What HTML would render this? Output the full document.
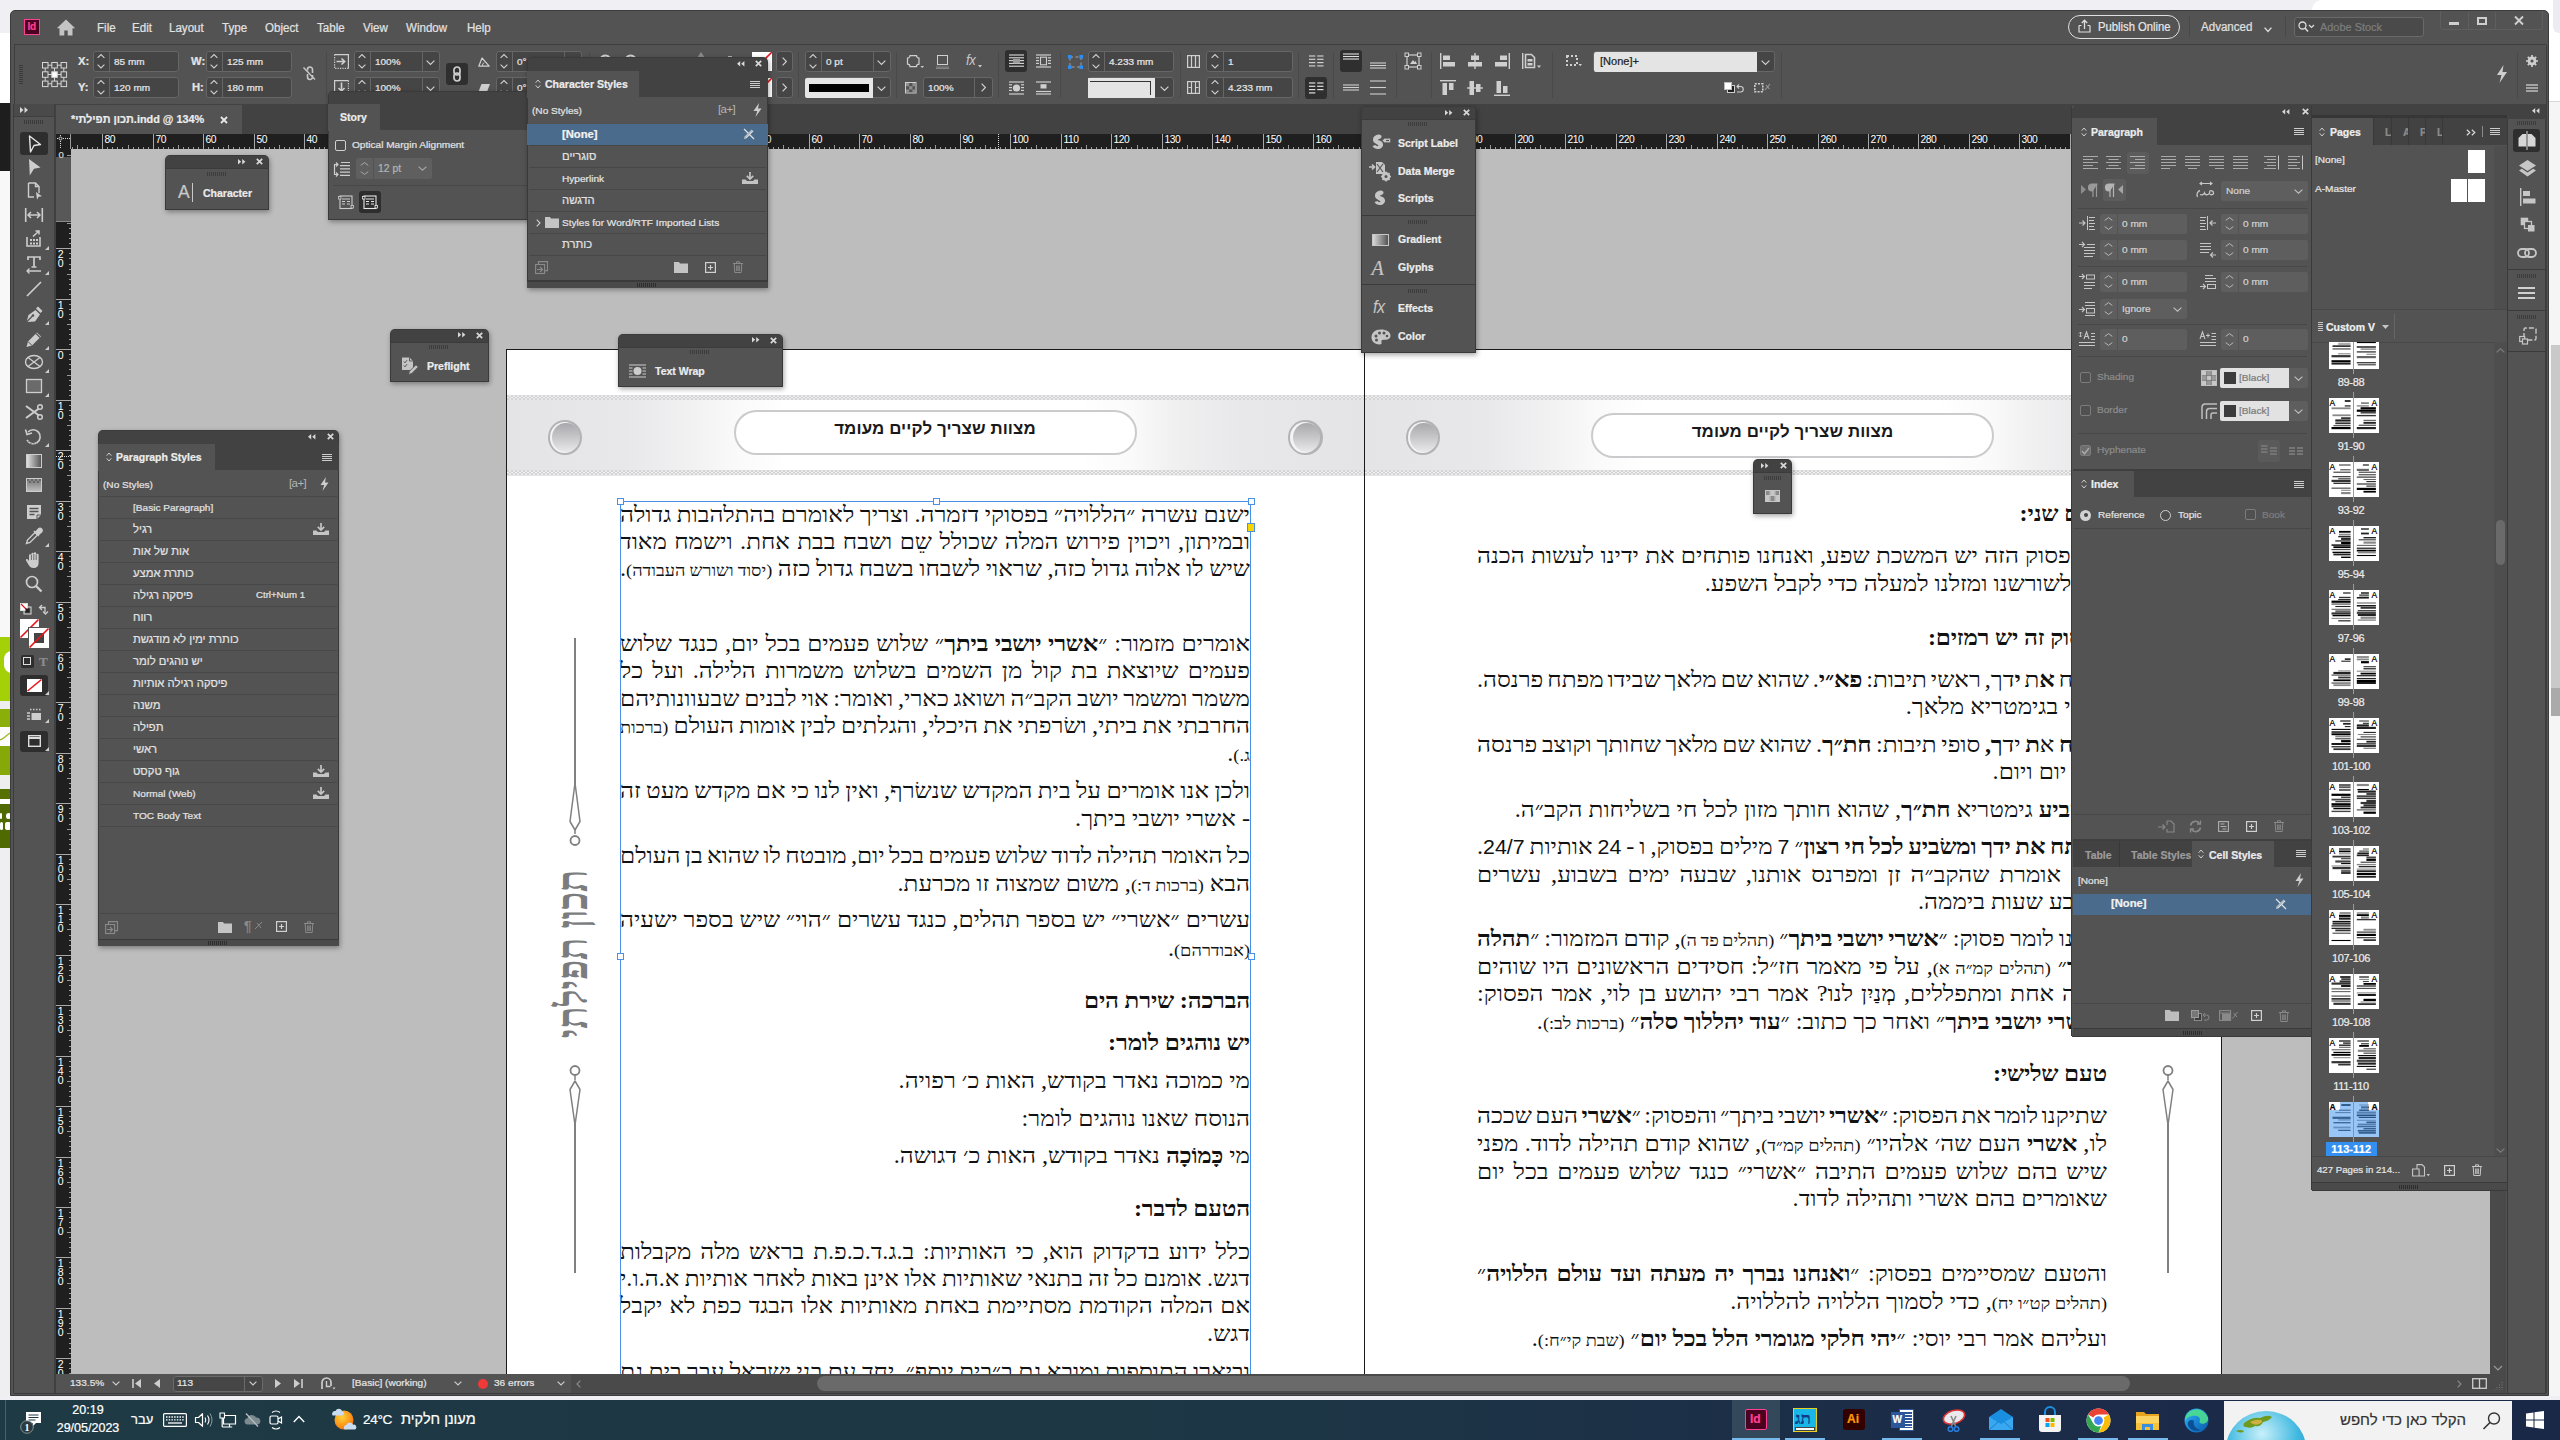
<!DOCTYPE html>
<html><head><meta charset="utf-8"><title>InDesign</title>
<style>
*{box-sizing:border-box;margin:0;padding:0}
html,body{width:2560px;height:1440px;overflow:hidden;background:#f0f0f4;font-family:"Liberation Sans",sans-serif;font-size:12px;color:#dddddd}
.a{position:absolute}
.t{position:absolute;white-space:nowrap;line-height:1;-webkit-text-stroke:.22px currentColor}
.b{font-weight:bold}
svg{position:absolute;overflow:visible}
.fld{position:absolute;background:#454545;border:1px solid #666;border-radius:3px}
.fldl{position:absolute;background:#e3e3e3;border:1px solid #666;border-radius:2px}
.pn{position:absolute;background:#535353}
.pnbar{position:absolute;background:#424242}
.sep{position:absolute;background:#484848;height:1px}
.row{position:absolute;left:0;right:0;height:22px;border-top:1px solid #4a4a4a}
.heb{direction:rtl;unicode-bidi:isolate}
.doc{position:absolute;white-space:nowrap;direction:rtl;color:#111;font-family:"Liberation Serif",serif;line-height:1}
.j{text-align:justify;text-align-last:justify}
.sm{font-size:75%}
.doc b{letter-spacing:-.2px}
.dg{font-family:"Liberation Sans",sans-serif;font-size:88%}
</style></head><body>
<!-- p01_backdrop.py -->
<div class="a" style="left:0;top:33px;width:12px;height:70px;background:#fff"></div>
<div class="a" style="left:0;top:103px;width:12px;height:68px;background:#1e1e1e"></div>
<div class="a" style="left:0;top:171px;width:12px;height:466px;background:#f8f8f8"></div>
<div class="a" style="left:0;top:637px;width:12px;height:64px;background:#a4d007"></div>
<div class="a" style="left:0;top:701px;width:12px;height:7.5px;background:#eeeeee"></div>
<div class="a" style="left:0;top:708.5px;width:12px;height:18px;background:#8aaf08"></div>
<div class="a" style="left:0;top:726.5px;width:12px;height:19.5px;background:#fdfdfd"></div>
<div class="a" style="left:0;top:746px;width:12px;height:29px;background:#86a808"></div>
<div class="a" style="left:0;top:775px;width:12px;height:14px;background:#eeeeee"></div>
<div class="a" style="left:0;top:789px;width:12px;height:10px;background:#567004"></div>
<div class="a" style="left:0;top:799px;width:12px;height:5px;background:#ffffff"></div>
<div class="a" style="left:0;top:804px;width:12px;height:44px;background:#4e6a00"></div>
<div class="a" style="left:0;top:848px;width:12px;height:548px;background:#efeff1"></div>
<div class="a" style="left:3.500px;top:651px;width:12px;height:22px;background:#fff;border-radius:8px 0 0 8px"></div>
<svg style="left:0;top:730px" width="10" height="14" viewBox="0 0 10 14"><path d="M0 10q3-1 5-3t5-4" fill="none" stroke="#9ab820" stroke-width="1.200"/></svg>
<div class="a" style="left:0;top:813px;width:2px;height:6px;background:#fff;border-radius:2px"></div><div class="a" style="left:6px;top:813px;width:5px;height:6px;background:#fff;border-radius:3px"></div>
<div class="a" style="left:0;top:822px;width:3px;height:8px;background:#fff;border-radius:2px"></div><div class="a" style="left:5px;top:822px;width:6px;height:8px;background:#fff;border-radius:2px"></div>
<div class="a" style="left:2312px;top:0;width:248px;height:1396px;background:#fff;border-radius:10px 0 0 0"></div>
<div class="a" style="left:2553px;top:-10px;width:20px;height:43px;background:#ebebf1;border-radius:6px"></div>
<div class="a" style="left:2549px;top:101px;width:11px;height:1295px;background:#f5f5f6;border-top:1px solid #d8d8d8"></div>
<div class="a" style="left:2551px;top:345px;width:9px;height:370px;background:#c9c9c9"></div>
<div class="a" style="left:2551px;top:688px;width:9px;height:28px;background:#aaa"></div>
<div class="a" style="left:0;top:1400px;width:2560px;height:40px;background:linear-gradient(90deg,#1e3a44 0%,#1d3645 50%,#1b2c48 75%,#1a2848 100%)"></div>
<div class="a" style="left:5px;top:1400px;width:1px;height:40px;background:#4a6068"></div>
<div class="t" style="left:48px;top:1404px;width:80px;text-align:center;font-size:12.5px;color:#fff">20:19</div>
<div class="t" style="left:48px;top:1422px;width:80px;text-align:center;font-size:12.5px;color:#fff">29/05/2023</div>
<div class="t" style="left:131px;top:1413px;font-size:13px;color:#fff;direction:rtl">עבר</div>
<svg style="left:24px;top:1410px" width="20" height="26" viewBox="0 0 20 26"><path d="M2 2h15v11h-5l-3 3v-3H2z" fill="#fff"/><path d="M4.5 5h10M4.5 7.5h10M4.5 10h7" stroke="#1e3a44" stroke-width="1"/><circle cx="3" cy="17" r="6.3" fill="#2a3a40" stroke="#9aa" stroke-width="0.8"/><text x="3" y="21" font-size="10" font-family="Liberation Serif" font-weight="bold" text-anchor="middle" fill="#fff">1</text></svg>
<svg style="left:163px;top:1413px" width="24" height="14" viewBox="0 0 24 14"><rect x=".6" y=".6" width="22.8" height="12.8" rx="1" fill="none" stroke="#fff" stroke-width="1.2"/><path d="M3 4h18M3 6.8h18" stroke="#fff" stroke-width="1.3" stroke-dasharray="1.5 1.2"/><path d="M5 10h14" stroke="#fff" stroke-width="1.3"/></svg>
<svg style="left:194px;top:1411px" width="20" height="18" viewBox="0 0 20 18"><path d="M1.5 6.5h3l4-3.8v12.6l-4-3.8h-3z" fill="none" stroke="#fff" stroke-width="1.2" stroke-linejoin="round"/><path d="M11 6.5q1.6 2.5 0 5M13.5 4.5q3 4.5 0 9" fill="none" stroke="#fff" stroke-width="1.1"/><path d="M16 2.5q4 6.5 0 13" fill="none" stroke="#8a9aa0" stroke-width="1"/></svg>
<svg style="left:219px;top:1412px" width="18" height="17" viewBox="0 0 18 17"><path d="M4.5 3.5h12v8.5h-12z" fill="none" stroke="#fff" stroke-width="1.2"/><path d="M1 1h4.5v5H1z" fill="#1e3a44" stroke="#fff" stroke-width="1.1"/><path d="M3.2 6v9M3.2 15h10M10.5 12v3" stroke="#fff" stroke-width="1.2" fill="none"/></svg>
<svg style="left:243px;top:1412px" width="18" height="16" viewBox="0 0 18 16"><path d="M4 12.5a3.2 3.2 0 0 1 .4-6.3 4.6 4.6 0 0 1 8.6-.6 3.5 3.5 0 0 1 1.6 6.9z" fill="#7d8a8f"/><path d="M3 1.5l12 13" stroke="#b8c2c6" stroke-width="1.3"/></svg>
<svg style="left:269px;top:1408px" width="14" height="24" viewBox="0 0 14 24"><rect x="1" y="8" width="8" height="8" rx="1.5" fill="none" stroke="#fff" stroke-width="1.2"/><path d="M9 11l3.5-2v6L9 13" fill="none" stroke="#fff" stroke-width="1.2"/><path d="M3 4.5q4-3 8 0M3 19.5q4 3 8 0" fill="none" stroke="#fff" stroke-width="1.1"/></svg>
<svg style="left:293px;top:1415px" width="12" height="8" viewBox="0 0 12 8"><path d="M.8 7l5.2-5.5L11.2 7" fill="none" stroke="#fff" stroke-width="1.4"/></svg>
<svg style="left:331px;top:1407px" width="26" height="26" viewBox="0 0 26 26"><defs><radialGradient id="sun" cx=".4" cy=".35" r=".7"><stop offset="0" stop-color="#ffd23a"/><stop offset=".6" stop-color="#fb9a1c"/><stop offset="1" stop-color="#f07010"/></radialGradient></defs><circle cx="13" cy="13" r="9.5" fill="url(#sun)"/><path d="M1.5 8.5a3 3 0 0 1 3-4.5 3.6 3.6 0 0 1 6.6 0 2.4 2.4 0 0 1 .4 4.5z" fill="#c9dcf2"/><path d="M13.5 22.500a3 3 0 0 1 2-4.800 3.600 3.600 0 0 1 6.600 0 2.400 2.400 0 0 1 1.400 4.800z" fill="#c9dcf2"/></svg>
<div class="t" style="left:363px;top:1412.5px;font-size:13.5px;color:#fff;letter-spacing:-.3px">24°C</div>
<div class="t" style="left:401px;top:1412px;font-size:14.5px;color:#fff;direction:rtl">מעונן חלקית</div>
<div class="a" style="left:1732px;top:1400px;width:48px;height:40px;background:#33485a"></div>
<div class="a" style="left:1732px;top:1438px;width:48px;height:2px;background:#76b9ed"></div>
<div class="a" style="left:1785px;top:1438px;width:40px;height:2px;background:#76b9ed"></div>
<div class="a" style="left:1882px;top:1438px;width:40px;height:2px;background:#76b9ed"></div>
<div class="a" style="left:1980px;top:1438px;width:40px;height:2px;background:#76b9ed"></div>
<div class="a" style="left:2078px;top:1438px;width:40px;height:2px;background:#76b9ed"></div>
<div class="a" style="left:2128px;top:1438px;width:40px;height:2px;background:#76b9ed"></div>
<div class="a" style="left:1745px;top:1409px;width:22px;height:21px;background:#49021f;border:1.5px solid #ff3f94;border-radius:2px"></div><div class="t b" style="left:1750px;top:1413px;font-size:12px;color:#ff3f94">Id</div>
<div class="a" style="left:1793px;top:1408px;width:24px;height:24px;background:#19b6e8;border:1px solid #e8d020"></div><div class="t b" style="left:1795px;top:1410px;font-size:17px;color:#123a8a;font-family:'Liberation Serif'">תג</div><div class="a" style="left:1795px;top:1427px;width:20px;height:4px;background:#fff;border:1px solid #444"></div>
<div class="a" style="left:1843px;top:1409px;width:22px;height:21px;background:#330000;border-radius:3px"></div><div class="t b" style="left:1847px;top:1413px;font-size:12px;color:#ff9a00">Ai</div>
<div class="a" style="left:1899px;top:1409px;width:15px;height:22px;background:#fff;border:1px solid #2b579a"></div><div class="a" style="left:1903px;top:1412px;width:9px;height:16px;background:repeating-linear-gradient(180deg,#2b579a 0 1.5px,#fff 1.5px 3px)"></div><div class="a" style="left:1891px;top:1412px;width:14px;height:16px;background:#2b579a"></div><div class="t b" style="left:1892.500px;top:1415px;font-size:10px;color:#fff">W</div>
<svg style="left:1939px;top:1408px" width="28" height="26" viewBox="0 0 28 26"><ellipse cx="15" cy="9" rx="11" ry="6.5" fill="#e9e9ee" stroke="#d33" stroke-width="1.6" transform="rotate(-18 15 9)"/><path d="M12 8l5 11M17 8l-5 11" stroke="#888" stroke-width="1.6"/><circle cx="11.500" cy="21" r="2.300" fill="none" stroke="#2a7ad8" stroke-width="1.600"/><circle cx="17.500" cy="21" r="2.300" fill="none" stroke="#2a7ad8" stroke-width="1.600"/></svg>
<svg style="left:1988px;top:1408px" width="26" height="24" viewBox="0 0 26 24"><path d="M1 9L13 1l12 8v13H1z" fill="#1a8fe0"/><path d="M1 9l12 7 12-7v13H1z" fill="#39a8f0"/><path d="M1 22l9-8M25 22l-9-8" stroke="#1a7fd0" stroke-width="1"/></svg>
<svg style="left:2037px;top:1406px" width="26" height="28" viewBox="0 0 26 28"><path d="M8 9V6a5 5 0 0 1 10 0v3" fill="none" stroke="#1a8fe0" stroke-width="2"/><path d="M2 9h22v14a3 3 0 0 1-3 3H5a3 3 0 0 1-3-3z" fill="#f4f4f4"/><rect x="8.500" y="12" width="4" height="4" fill="#f25022"/><rect x="13.500" y="12" width="4" height="4" fill="#7fba00"/><rect x="8.500" y="17" width="4" height="4" fill="#00a4ef"/><rect x="13.500" y="17" width="4" height="4" fill="#ffb900"/></svg>
<svg style="left:2086px;top:1408px" width="25" height="25" viewBox="0 0 24 24"><circle cx="12" cy="12" r="11.500" fill="#fff"/><path d="M12 .5a11.500 11.500 0 0 1 9.960 5.750H12a5.750 5.750 0 0 0-5 2.900L2.040 6.250A11.500 11.500 0 0 1 12 .5z" fill="#ea4335"/><path d="M21.960 6.250A11.500 11.500 0 0 1 12 23.500l4.980-8.630a5.750 5.750 0 0 0 0-5.740z" fill="#fbbc05"/><path d="M12 23.500A11.500 11.500 0 0 1 2.040 6.250l4.980 8.620a5.750 5.750 0 0 0 4.980 2.880l2.500-.5z" fill="#34a853"/><circle cx="12" cy="12" r="5.200" fill="#fff"/><circle cx="12" cy="12" r="4.200" fill="#4285f4"/></svg>
<svg style="left:2135px;top:1409px" width="25" height="23" viewBox="0 0 25 23"><path d="M1 3h8l2 2h13v4H1z" fill="#e8a51e"/><path d="M1 7h23v14H1z" fill="#fcd462"/><path d="M1 14h23v7H1z" fill="#f6c13a"/><path d="M7 15h11v6h-3v-3H10v3H7z" fill="#3b8ede"/></svg>
<svg style="left:2184px;top:1408px" width="25" height="25" viewBox="0 0 24 24"><defs><linearGradient id="eg" x1="0" y1="0" x2="1" y2="1"><stop offset="0" stop-color="#35c1f1"/><stop offset=".5" stop-color="#1a86d8"/><stop offset="1" stop-color="#0c59a4"/></linearGradient></defs><circle cx="12" cy="12" r="11.500" fill="url(#eg)"/><path d="M1 10a11.500 11.500 0 0 1 22-1c.8 4-2 6-5.500 6-2.500 0-3-1.500-2.500-2.500.8-1.500 0-5-4.500-5C6 7.500 2.500 9 1 13z" fill="#4fe08a" opacity=".85"/><path d="M9.500 12c-1 4 1.500 8.500 6.500 9-5 2.500-11.500-.5-12.500-6 .5-3 3-4.500 6-3z" fill="#0b4f94"/></svg>
<div class="a" style="left:2224px;top:1401px;width:288px;height:39px;background:#f2f2f2"></div>
<svg style="left:2226px;top:1401px" width="80" height="39" viewBox="0 0 80 39"><defs><radialGradient id="gl" cx=".45" cy=".3" r=".9"><stop offset="0" stop-color="#c8f0fa"/><stop offset=".5" stop-color="#3fb8e0"/><stop offset="1" stop-color="#1478b8"/></radialGradient><clipPath id="gc"><rect x="0" y="0" width="80" height="39"/></clipPath></defs><g clip-path="url(#gc)"><ellipse cx="40" cy="48" rx="40" ry="38" fill="url(#gl)"/><path d="M18 22q8-6 16-5 8-4 12-1-3 4-9 5-2 5-8 4-4 3-9 1-4 0-2-4z" fill="#6f9a20"/><path d="M24 21q6-3 11-2 3 2-2 4-5 2-9-2z" fill="#d0b040"/><path d="M10 30q4-2 8 0-2 3-8 0z" fill="#6f9a20"/></g></svg>
<div class="t" style="left:2340px;top:1412px;font-size:15px;color:#333;direction:rtl">הקלד כאן כדי לחפש</div>
<svg style="left:2482px;top:1411px" width="20" height="20" viewBox="0 0 20 20"><circle cx="12" cy="7.500" r="5.500" fill="none" stroke="#333" stroke-width="1.400"/><path d="M8 11.500L1.500 18" stroke="#333" stroke-width="1.600"/></svg>
<svg style="left:2526px;top:1411px" width="18" height="18" viewBox="0 0 18 18"><path d="M0 2.500l7.500-1v7H0zM8.500 1.300L18 0v8.500H8.500zM0 9.500h7.500v7l-7.500-1zM8.500 9.500H18V18l-9.500-1.300z" fill="#fff"/></svg>
<!-- p02_app.py -->
<div class="a" style="left:10px;top:10px;width:2539px;height:1386px;background:#535353;border-radius:5px 5px 0 0;border:1px solid #3c3c3c"></div>
<div class="a" style="left:24px;top:19px;width:16px;height:16px;background:#49021f;border:1.5px solid #ff3f94"></div>
<div class="t" style="left:27.5px;top:22px;font-size:10px;color:#ff3f94;font-weight:bold;letter-spacing:-.3px">Id</div>
<svg style="left:56px;top:19px" width="20" height="17" viewBox="0 0 20 17"><path d="M10 .5L.8 9.200h2.700v7.300h4.800v-5h3.400v5h4.800V9.200h2.700z" fill="#c4c4c4"/></svg>
<div class="t" style="left:97px;top:21.5px;font-size:12.5px;color:#e2e2e2;transform:scaleX(0.925);transform-origin:0 0;">File</div>
<div class="t" style="left:132px;top:21.5px;font-size:12.5px;color:#e2e2e2;transform:scaleX(0.925);transform-origin:0 0;">Edit</div>
<div class="t" style="left:169px;top:21.5px;font-size:12.5px;color:#e2e2e2;transform:scaleX(0.925);transform-origin:0 0;">Layout</div>
<div class="t" style="left:222px;top:21.5px;font-size:12.5px;color:#e2e2e2;transform:scaleX(0.925);transform-origin:0 0;">Type</div>
<div class="t" style="left:265px;top:21.5px;font-size:12.5px;color:#e2e2e2;transform:scaleX(0.925);transform-origin:0 0;">Object</div>
<div class="t" style="left:317px;top:21.5px;font-size:12.5px;color:#e2e2e2;transform:scaleX(0.925);transform-origin:0 0;">Table</div>
<div class="t" style="left:362.5px;top:21.5px;font-size:12.5px;color:#e2e2e2;transform:scaleX(0.925);transform-origin:0 0;">View</div>
<div class="t" style="left:406px;top:21.5px;font-size:12.5px;color:#e2e2e2;transform:scaleX(0.925);transform-origin:0 0;">Window</div>
<div class="t" style="left:467px;top:21.5px;font-size:12.5px;color:#e2e2e2;transform:scaleX(0.925);transform-origin:0 0;">Help</div>
<div class="a" style="left:2068px;top:15px;width:112px;height:24px;border:1.3px solid #e0e0e0;border-radius:12px"></div>
<svg style="left:2078px;top:19px" width="13" height="14" viewBox="0 0 13 14"><path d="M1 6.500v6.500h11V6.500M1 6.500h2.500M12 6.500H9.500" fill="none" stroke="#ddd" stroke-width="1.200"/><path d="M6.500 10V1.500M3.800 4l2.700-2.800L9.200 4" fill="none" stroke="#ddd" stroke-width="1.300"/></svg>
<div class="t" style="left:2098px;top:21px;font-size:12.5px;color:#e6e6e6;transform:scaleX(0.9);transform-origin:0 0;">Publish Online</div>
<div class="a" style="left:2189px;top:17px;width:1px;height:20px;background:#484848"></div>
<div class="t" style="left:2201px;top:20.5px;font-size:12.5px;color:#e0e0e0;transform:scaleX(0.925);transform-origin:0 0;">Advanced</div>
<svg style="left:2263.5px;top:26.5px" width="8" height="5" viewBox="0 0 8 5"><path d="M.6 .6L4 4.4L7.4 .6" fill="none" stroke="#ddd" stroke-width="1.4"/></svg>
<div class="a" style="left:2285px;top:17px;width:1px;height:20px;background:#484848"></div>
<div class="fld" style="left:2294px;top:17px;width:130px;height:20px;background:#4a4a4a;border-color:#696969"></div>
<svg style="left:2298px;top:21px" width="18" height="12" viewBox="0 0 18 12"><circle cx="4.500" cy="4.500" r="3.500" fill="none" stroke="#ddd" stroke-width="1.300"/><path d="M7 7l3 3.500" stroke="#ddd" stroke-width="1.500"/><path d="M11 4l2.500 2.500L16 4" fill="none" stroke="#ddd" stroke-width="1.200"/></svg>
<div class="t" style="left:2320px;top:21.5px;font-size:11.5px;color:#7e7e7e;transform:scaleX(0.95);transform-origin:0 0;">Adobe Stock</div>
<div class="a" style="left:2440px;top:11px;width:103px;height:19px;border:1px solid #5e5e5e;border-top:none;border-radius:0 0 3px 3px"></div>
<div class="a" style="left:2468px;top:12px;width:1px;height:17px;background:#5e5e5e"></div>
<div class="a" style="left:2495px;top:12px;width:1px;height:17px;background:#5e5e5e"></div>
<div class="a" style="left:2449px;top:22px;width:10px;height:3px;background:#cfcfcf"></div>
<div class="a" style="left:2477px;top:17px;width:10px;height:8px;border:2px solid #cfcfcf"></div>
<svg style="left:2514px;top:16px" width="10" height="9" viewBox="0 0 10 9"><path d="M1 .500l8 8M9 .500l-8 8" stroke="#cfcfcf" stroke-width="1.900"/></svg>
<div class="a" style="left:14px;top:44px;width:2532px;height:1px;background:#3d3d3d"></div>
<div class="a" style="left:14px;top:45px;width:1px;height:59px;background:#3d3d3d"></div>
<div class="a" style="left:2545.500px;top:45px;width:1px;height:1348px;background:#3d3d3d"></div>
<div class="a" style="left:14px;top:104px;width:2532px;height:30px;background:#424242"></div>
<!-- p03_control.py -->
<div class="a" style="left:19px;top:65px;width:4px;height:20px;background:repeating-linear-gradient(180deg,#3a3a3a 0 1px,transparent 1px 2px)"></div>
<svg style="left:42px;top:62px" width="25" height="25" viewBox="0 0 25 25"><rect x="0.5" y="0.5" width="5.500" height="5.500" fill="none" stroke="#d6d6d6" stroke-width="1"/><rect x="0.5" y="9.8" width="5.500" height="5.500" fill="none" stroke="#d6d6d6" stroke-width="1"/><rect x="0.5" y="19.1" width="5.500" height="5.500" fill="none" stroke="#d6d6d6" stroke-width="1"/><rect x="9.8" y="0.5" width="5.500" height="5.500" fill="none" stroke="#d6d6d6" stroke-width="1"/><rect x="9.8" y="9.8" width="5.500" height="5.500" fill="#fff" stroke="#d6d6d6" stroke-width="1"/><rect x="9.8" y="19.1" width="5.500" height="5.500" fill="none" stroke="#d6d6d6" stroke-width="1"/><rect x="19.1" y="0.5" width="5.500" height="5.500" fill="none" stroke="#d6d6d6" stroke-width="1"/><rect x="19.1" y="9.8" width="5.500" height="5.500" fill="none" stroke="#d6d6d6" stroke-width="1"/><rect x="19.1" y="19.1" width="5.500" height="5.500" fill="none" stroke="#d6d6d6" stroke-width="1"/><path d="M6 3.200h3.800M15.300 3.200h3.800M6 21.800h3.800M15.300 21.800h3.800M3.200 6v3.800M3.200 15.300v3.800M21.800 6v3.800M21.800 15.300v3.800M6 12.500h3.800M15.300 12.500h3.800M12.500 6v3.800M12.500 15.300v3.800" stroke="#d6d6d6" stroke-width="1"/></svg>
<div class="t" style="left:78px;top:57.1px;font-size:10.3px;color:#e4e4e4;transform:scaleX(1.09);transform-origin:0 0;font-weight:bold">X:</div>
<div class="t" style="left:78px;top:83.1px;font-size:10.3px;color:#e4e4e4;transform:scaleX(1.09);transform-origin:0 0;font-weight:bold">Y:</div>
<div class="fld" style="left:92.5px;top:51px;width:86px;height:21px;background:#454545;border-color:#666"></div><div class="a" style="left:109px;top:52px;width:1px;height:19px;background:#666"></div><svg style="left:97.25px;top:54.25px" width="8" height="4.5" viewBox="0 0 8 4.5"><path d="M.6 3.9L4 .6L7.4 3.9" fill="none" stroke="#d0d0d0" stroke-width="1.1"/></svg><svg style="left:97.25px;top:64.25px" width="8" height="4.5" viewBox="0 0 8 4.5"><path d="M.6 .6L4 3.9L7.4 .6" fill="none" stroke="#d0d0d0" stroke-width="1.1"/></svg><div class="t" style="left:114px;top:57.14px;font-size:9.71px;color:#e6e6e6;transform:scaleX(1.03);transform-origin:0 0;">85 mm</div>
<div class="fld" style="left:92.5px;top:77px;width:86px;height:21px;background:#454545;border-color:#666"></div><div class="a" style="left:109px;top:78px;width:1px;height:19px;background:#666"></div><svg style="left:97.25px;top:80.25px" width="8" height="4.5" viewBox="0 0 8 4.5"><path d="M.6 3.9L4 .6L7.4 3.9" fill="none" stroke="#d0d0d0" stroke-width="1.1"/></svg><svg style="left:97.25px;top:90.25px" width="8" height="4.5" viewBox="0 0 8 4.5"><path d="M.6 .6L4 3.9L7.4 .6" fill="none" stroke="#d0d0d0" stroke-width="1.1"/></svg><div class="t" style="left:114px;top:83.14px;font-size:9.71px;color:#e6e6e6;transform:scaleX(1.03);transform-origin:0 0;">120 mm</div>
<div class="t" style="left:190.5px;top:57.1px;font-size:10.3px;color:#e4e4e4;transform:scaleX(1.09);transform-origin:0 0;font-weight:bold">W:</div>
<div class="t" style="left:192px;top:83.1px;font-size:10.3px;color:#e4e4e4;transform:scaleX(1.09);transform-origin:0 0;font-weight:bold">H:</div>
<div class="fld" style="left:205.5px;top:51px;width:86px;height:21px;background:#454545;border-color:#666"></div><div class="a" style="left:222px;top:52px;width:1px;height:19px;background:#666"></div><svg style="left:210.25px;top:54.25px" width="8" height="4.5" viewBox="0 0 8 4.5"><path d="M.6 3.9L4 .6L7.4 3.9" fill="none" stroke="#d0d0d0" stroke-width="1.1"/></svg><svg style="left:210.25px;top:64.25px" width="8" height="4.5" viewBox="0 0 8 4.5"><path d="M.6 .6L4 3.9L7.4 .6" fill="none" stroke="#d0d0d0" stroke-width="1.1"/></svg><div class="t" style="left:227px;top:57.14px;font-size:9.71px;color:#e6e6e6;transform:scaleX(1.03);transform-origin:0 0;">125 mm</div>
<div class="fld" style="left:205.5px;top:77px;width:86px;height:21px;background:#454545;border-color:#666"></div><div class="a" style="left:222px;top:78px;width:1px;height:19px;background:#666"></div><svg style="left:210.25px;top:80.25px" width="8" height="4.5" viewBox="0 0 8 4.5"><path d="M.6 3.9L4 .6L7.4 3.9" fill="none" stroke="#d0d0d0" stroke-width="1.1"/></svg><svg style="left:210.25px;top:90.25px" width="8" height="4.5" viewBox="0 0 8 4.5"><path d="M.6 .6L4 3.9L7.4 .6" fill="none" stroke="#d0d0d0" stroke-width="1.1"/></svg><div class="t" style="left:227px;top:83.14px;font-size:9.71px;color:#e6e6e6;transform:scaleX(1.03);transform-origin:0 0;">180 mm</div>
<svg style="left:302px;top:65px" width="14" height="17" viewBox="0 0 14 17"><path d="M5.500 5.500v-1a2.500 2.500 0 0 1 5 0v3.500M10.500 10v2a2.500 2.500 0 0 1-5 0V9" fill="none" stroke="#c8c8c8" stroke-width="1.600"/><path d="M1.500 2.500L13 14.500" stroke="#c8c8c8" stroke-width="1.400"/></svg>
<div class="a" style="left:326px;top:52px;width:1px;height:46px;background:#494949"></div>
<svg style="left:333.5px;top:54px" width="15" height="15" viewBox="0 0 15 15"><path d="M.6 .6h13.800v13.800" fill="none" stroke="#d0d0d0" stroke-width="1.200"/><path d="M.6 .6v13.800h13.800" fill="none" stroke="#d0d0d0" stroke-width="1.200" stroke-dasharray="1.200 1.200"/><path d="M2.500 7.500h8M7.500 4.500l3.200 3-3.200 3" fill="none" stroke="#d0d0d0" stroke-width="1.600"/></svg>
<svg style="left:333.5px;top:80px" width="15" height="15" viewBox="0 0 15 15"><path d="M.6 14.400V.6h13.800" fill="none" stroke="#d0d0d0" stroke-width="1.200"/><path d="M14.400 .6v13.800H.6" fill="none" stroke="#d0d0d0" stroke-width="1.200" stroke-dasharray="1.200 1.200"/><path d="M7.500 2.500v9M4.500 8l3 3.200 3-3.200" fill="none" stroke="#d0d0d0" stroke-width="1.600"/></svg>
<div class="fld" style="left:353.5px;top:51px;width:86px;height:21px;background:#454545;border-color:#666"></div><div class="a" style="left:370px;top:52px;width:1px;height:19px;background:#666"></div><svg style="left:358.25px;top:54.25px" width="8" height="4.5" viewBox="0 0 8 4.5"><path d="M.6 3.9L4 .6L7.4 3.9" fill="none" stroke="#d0d0d0" stroke-width="1.1"/></svg><svg style="left:358.25px;top:64.25px" width="8" height="4.5" viewBox="0 0 8 4.5"><path d="M.6 .6L4 3.9L7.4 .6" fill="none" stroke="#d0d0d0" stroke-width="1.1"/></svg><div class="a" style="left:421.5px;top:52px;width:1px;height:19px;background:#666"></div><svg style="left:426px;top:59.5px" width="9" height="5" viewBox="0 0 9 5"><path d="M.6 .6L4.5 4.4L8.4 .6" fill="none" stroke="#d0d0d0" stroke-width="1.2"/></svg><div class="t" style="left:375px;top:57.14px;font-size:9.71px;color:#e6e6e6;transform:scaleX(1.03);transform-origin:0 0;">100%</div>
<div class="fld" style="left:353.5px;top:77px;width:86px;height:21px;background:#454545;border-color:#666"></div><div class="a" style="left:370px;top:78px;width:1px;height:19px;background:#666"></div><svg style="left:358.25px;top:80.25px" width="8" height="4.5" viewBox="0 0 8 4.5"><path d="M.6 3.9L4 .6L7.4 3.9" fill="none" stroke="#d0d0d0" stroke-width="1.1"/></svg><svg style="left:358.25px;top:90.25px" width="8" height="4.5" viewBox="0 0 8 4.5"><path d="M.6 .6L4 3.9L7.4 .6" fill="none" stroke="#d0d0d0" stroke-width="1.1"/></svg><div class="a" style="left:421.5px;top:78px;width:1px;height:19px;background:#666"></div><svg style="left:426px;top:85.5px" width="9" height="5" viewBox="0 0 9 5"><path d="M.6 .6L4.5 4.4L8.4 .6" fill="none" stroke="#d0d0d0" stroke-width="1.2"/></svg><div class="t" style="left:375px;top:83.14px;font-size:9.71px;color:#e6e6e6;transform:scaleX(1.03);transform-origin:0 0;">100%</div>
<div class="a" style="left:446px;top:63px;width:22px;height:22px;background:#2f2f2f;border-radius:3px"></div>
<svg style="left:452px;top:66px" width="10" height="16" viewBox="0 0 10 16"><rect x="2" y="1" width="6" height="8" rx="3" fill="none" stroke="#cfcfcf" stroke-width="1.700"/><rect x="2" y="7" width="6" height="8" rx="3" fill="none" stroke="#cfcfcf" stroke-width="1.700"/></svg>
<svg style="left:478px;top:56.5px" width="12" height="10" viewBox="0 0 12 10"><path d="M.8 9.200h10.400L8 1z" fill="none" stroke="#cfcfcf" stroke-width="1.200" stroke-linejoin="round" transform="scale(-1,1) translate(-12,0)"/><path d="M4.500 9a4 4 0 0 1 1.500-3.500" fill="none" stroke="#cfcfcf" stroke-width="1"/></svg>
<svg style="left:478px;top:84px" width="12" height="9" viewBox="0 0 12 9"><path d="M3.500 0H12L8.500 9H0z" fill="#cfcfcf"/></svg>
<div class="fld" style="left:495.5px;top:51px;width:86px;height:21px;background:#454545;border-color:#666"></div><div class="a" style="left:512px;top:52px;width:1px;height:19px;background:#666"></div><svg style="left:500.25px;top:54.25px" width="8" height="4.5" viewBox="0 0 8 4.5"><path d="M.6 3.9L4 .6L7.4 3.9" fill="none" stroke="#d0d0d0" stroke-width="1.1"/></svg><svg style="left:500.25px;top:64.25px" width="8" height="4.5" viewBox="0 0 8 4.5"><path d="M.6 .6L4 3.9L7.4 .6" fill="none" stroke="#d0d0d0" stroke-width="1.1"/></svg><div class="a" style="left:563.5px;top:52px;width:1px;height:19px;background:#666"></div><svg style="left:568px;top:59.5px" width="9" height="5" viewBox="0 0 9 5"><path d="M.6 .6L4.5 4.4L8.4 .6" fill="none" stroke="#d0d0d0" stroke-width="1.2"/></svg><div class="t" style="left:517px;top:57.14px;font-size:9.71px;color:#e6e6e6;transform:scaleX(1.03);transform-origin:0 0;">0°</div>
<div class="fld" style="left:495.5px;top:77px;width:86px;height:21px;background:#454545;border-color:#666"></div><div class="a" style="left:512px;top:78px;width:1px;height:19px;background:#666"></div><svg style="left:500.25px;top:80.25px" width="8" height="4.5" viewBox="0 0 8 4.5"><path d="M.6 3.9L4 .6L7.4 3.9" fill="none" stroke="#d0d0d0" stroke-width="1.1"/></svg><svg style="left:500.25px;top:90.25px" width="8" height="4.5" viewBox="0 0 8 4.5"><path d="M.6 .6L4 3.9L7.4 .6" fill="none" stroke="#d0d0d0" stroke-width="1.1"/></svg><div class="a" style="left:563.5px;top:78px;width:1px;height:19px;background:#666"></div><svg style="left:568px;top:85.5px" width="9" height="5" viewBox="0 0 9 5"><path d="M.6 .6L4.5 4.4L8.4 .6" fill="none" stroke="#d0d0d0" stroke-width="1.2"/></svg><div class="t" style="left:517px;top:83.14px;font-size:9.71px;color:#e6e6e6;transform:scaleX(1.03);transform-origin:0 0;">0°</div>
<div class="a" style="left:589px;top:52px;width:1px;height:46px;background:#494949"></div>
<svg style="left:598px;top:53px" width="14" height="14" viewBox="0 0 14 14"><path d="M2 9a5.500 5.500 0 1 1 3 4" fill="none" stroke="#cfcfcf" stroke-width="2"/></svg>
<svg style="left:624px;top:53px" width="14" height="14" viewBox="0 0 14 14"><path d="M12 9a5.500 5.500 0 1 0-3 4" fill="none" stroke="#cfcfcf" stroke-width="2"/></svg>
<svg style="left:696px;top:52px" width="10" height="8" viewBox="0 0 10 8"><path d="M5 0l4 6H1z" fill="#8a8a8a"/></svg>
<svg style="left:728px;top:55px" width="4" height="4" viewBox="0 0 4 4"><path d="M0 2h4" stroke="#ccc" stroke-width="1.500"/></svg>
<div class="a" style="left:752px;top:52px;width:20px;height:19px;background:#fff"></div>
<svg style="left:752px;top:52px" width="20" height="19" viewBox="0 0 20 19"><path d="M20 0L1 19" stroke="#e8141c" stroke-width="1.600"/></svg>
<div class="a" style="left:752px;top:78px;width:20px;height:19px;background:#fff"></div>
<svg style="left:752px;top:78px" width="20" height="19" viewBox="0 0 20 19"><path d="M20 0L1 19" stroke="#e8141c" stroke-width="1.600"/></svg>
<div class="fld" style="left:776px;top:51px;width:17px;height:21px;background:#454545;border-color:#666"></div>
<svg style="left:782px;top:57px" width="5" height="9" viewBox="0 0 5 9"><path d="M.6 .6L4.4 4.5L.6 8.4" fill="none" stroke="#d0d0d0" stroke-width="1.2"/></svg>
<div class="fld" style="left:776px;top:77px;width:17px;height:21px;background:#454545;border-color:#666"></div>
<svg style="left:782px;top:83px" width="5" height="9" viewBox="0 0 5 9"><path d="M.6 .6L4.4 4.5L.6 8.4" fill="none" stroke="#d0d0d0" stroke-width="1.2"/></svg>
<div class="a" style="left:798px;top:52px;width:1px;height:46px;background:#494949"></div>
<div class="fld" style="left:804.5px;top:51px;width:86px;height:21px;background:#454545;border-color:#666"></div><div class="a" style="left:821px;top:52px;width:1px;height:19px;background:#666"></div><svg style="left:809.25px;top:54.25px" width="8" height="4.5" viewBox="0 0 8 4.5"><path d="M.6 3.9L4 .6L7.4 3.9" fill="none" stroke="#d0d0d0" stroke-width="1.1"/></svg><svg style="left:809.25px;top:64.25px" width="8" height="4.5" viewBox="0 0 8 4.5"><path d="M.6 .6L4 3.9L7.4 .6" fill="none" stroke="#d0d0d0" stroke-width="1.1"/></svg><div class="a" style="left:872.5px;top:52px;width:1px;height:19px;background:#666"></div><svg style="left:877px;top:59.5px" width="9" height="5" viewBox="0 0 9 5"><path d="M.6 .6L4.5 4.4L8.4 .6" fill="none" stroke="#d0d0d0" stroke-width="1.2"/></svg><div class="t" style="left:826px;top:57.14px;font-size:9.71px;color:#e6e6e6;transform:scaleX(1.03);transform-origin:0 0;">0 pt</div>
<div class="fld" style="left:804.500px;top:77px;width:86px;height:21px"></div>
<div class="a" style="left:805px;top:77.5px;width:67.500px;height:20px;background:#e6e6e6;border-radius:2px 0 0 2px"></div>
<div class="a" style="left:809px;top:84px;width:60px;height:8px;background:#000"></div>
<svg style="left:877px;top:85.5px" width="9" height="5" viewBox="0 0 9 5"><path d="M.6 .6L4.5 4.4L8.4 .6" fill="none" stroke="#d0d0d0" stroke-width="1.2"/></svg>
<div class="a" style="left:896px;top:52px;width:1px;height:46px;background:#494949"></div>
<svg style="left:907px;top:55px" width="17" height="14" viewBox="0 0 17 14"><path d="M3 .6h6.500a2.500 2.500 0 0 0 2.500 2.500v6a2.500 2.500 0 0 0-2.500 2.500H3a2.500 2.500 0 0 0-2.500-2.500v-6A2.500 2.500 0 0 0 3 .6z" fill="none" stroke="#cfcfcf" stroke-width="1.200"/><path d="M13.500 11h3.500l-1.750 2z" fill="#cfcfcf"/></svg>
<div class="a" style="left:935.500px;top:55px;width:13px;height:14px;background:linear-gradient(180deg,#535353 0 70%,#8a8a8a 100%)"></div><div class="a" style="left:937px;top:55px;width:11px;height:10px;border:1.400px solid #cfcfcf;background:#535353"></div>
<div class="t" style="left:966px;top:52.5px;font-size:14.5px;color:#c8c8c8;transform:scaleX(0.9);transform-origin:0 0;font-style:italic;letter-spacing:-.3px;-webkit-text-stroke:0">fx</div>
<svg style="left:977.5px;top:65px" width="4" height="3" viewBox="0 0 4 3"><path d="M0 0h4L2 2.500z" fill="#cfcfcf"/></svg>
<svg style="left:905px;top:82px" width="11.5" height="11.5" viewBox="0 0 11.5 11.5"><rect x=".5" y=".5" width="10.500" height="10.500" fill="none" stroke="#cfcfcf"/><path d="M1 1h3.200v3.200H1zM7.400 1h3.200v3.200H7.400zM4.200 4.200h3.200v3.200H4.200zM1 7.400h3.200v3.200H1zM7.400 7.400h3.200v3.200H7.400z" fill="#8e8e8e"/></svg>
<div class="fld" style="left:923px;top:77px;width:69.5px;height:21px;background:#454545;border-color:#666"></div><div class="t" style="left:928px;top:83.14px;font-size:9.71px;color:#e6e6e6;transform:scaleX(1.03);transform-origin:0 0;">100%</div>
<div class="a" style="left:974px;top:78px;width:1px;height:19px;background:#666"></div>
<svg style="left:981px;top:83px" width="5" height="9" viewBox="0 0 5 9"><path d="M.6 .6L4.4 4.5L.6 8.4" fill="none" stroke="#d0d0d0" stroke-width="1.2"/></svg>
<div class="a" style="left:998px;top:52px;width:1px;height:46px;background:#494949"></div>
<div class="a" style="left:1005px;top:50px;width:22px;height:22px;background:#2f2f2f;border-radius:3px"></div>
<svg style="left:1008.5px;top:54px" width="15" height="14" viewBox="0 0 15 14"><path d="M0 1H15" stroke="#dcdcdc" stroke-width="1.1"/><path d="M0 3.8H15" stroke="#dcdcdc" stroke-width="1.1"/><path d="M0 6.6H15" stroke="#dcdcdc" stroke-width="1.1"/><path d="M0 9.4H15" stroke="#dcdcdc" stroke-width="1.1"/><path d="M0 12.2H15" stroke="#dcdcdc" stroke-width="1.1"/><rect x="4" y="4.800" width="7" height="4.600" fill="#9a9a9a"/></svg>
<svg style="left:1035.5px;top:54px" width="15" height="14" viewBox="0 0 15 14"><path d="M0 1H15" stroke="#cfcfcf" stroke-width="1.2"/><path d="M0 13H15" stroke="#cfcfcf" stroke-width="1.2"/><path d="M0 3.8H3" stroke="#cfcfcf" stroke-width="1.2"/><path d="M0 6.6H3" stroke="#cfcfcf" stroke-width="1.2"/><path d="M0 9.4H3" stroke="#cfcfcf" stroke-width="1.2"/><path d="M12 3.8H15" stroke="#cfcfcf" stroke-width="1.2"/><path d="M12 6.6H15" stroke="#cfcfcf" stroke-width="1.2"/><path d="M12 9.4H15" stroke="#cfcfcf" stroke-width="1.2"/><rect x="4.500" y="3.200" width="6" height="7.600" fill="none" stroke="#cfcfcf" stroke-width="1.100"/></svg>
<svg style="left:1008.5px;top:80.5px" width="15" height="14" viewBox="0 0 15 14"><path d="M0 1H15" stroke="#cfcfcf" stroke-width="1.2"/><path d="M0 13H15" stroke="#cfcfcf" stroke-width="1.2"/><path d="M0 3.8H3" stroke="#cfcfcf" stroke-width="1.2"/><path d="M0 6.6H3" stroke="#cfcfcf" stroke-width="1.2"/><path d="M0 9.4H3" stroke="#cfcfcf" stroke-width="1.2"/><path d="M12 3.8H15" stroke="#cfcfcf" stroke-width="1.2"/><path d="M12 6.6H15" stroke="#cfcfcf" stroke-width="1.2"/><path d="M12 9.4H15" stroke="#cfcfcf" stroke-width="1.2"/><circle cx="7.500" cy="7" r="3.600" fill="#cfcfcf"/></svg>
<svg style="left:1035.5px;top:80.5px" width="15" height="14" viewBox="0 0 15 14"><path d="M0 1H15" stroke="#cfcfcf" stroke-width="1.2"/><path d="M0 10.5H15" stroke="#cfcfcf" stroke-width="1.2"/><path d="M0 13H15" stroke="#cfcfcf" stroke-width="1.2"/><rect x="4.500" y="3.200" width="6" height="4.300" fill="#cfcfcf"/></svg>
<div class="a" style="left:1060px;top:52px;width:1px;height:46px;background:#494949"></div>
<svg style="left:1067.5px;top:54.5px" width="15" height="14" viewBox="0 0 15 14"><path d="M2 2h11v10H2z" fill="none" stroke="#8a8a8a" stroke-width="1.400" stroke-dasharray="3 2.500"/><rect x="0" y="0" width="3.600" height="3.600" fill="#2c8ff0"/><rect x="11.400" y="0" width="3.600" height="3.600" fill="#2c8ff0"/><rect x="0" y="10.400" width="3.600" height="3.600" fill="#2c8ff0"/><rect x="11.400" y="10.400" width="3.600" height="3.600" fill="#2c8ff0"/></svg>
<div class="fld" style="left:1087.5px;top:51px;width:86px;height:21px;background:#454545;border-color:#666"></div><div class="a" style="left:1104px;top:52px;width:1px;height:19px;background:#666"></div><svg style="left:1092.25px;top:54.25px" width="8" height="4.5" viewBox="0 0 8 4.5"><path d="M.6 3.9L4 .6L7.4 3.9" fill="none" stroke="#d0d0d0" stroke-width="1.1"/></svg><svg style="left:1092.25px;top:64.25px" width="8" height="4.5" viewBox="0 0 8 4.5"><path d="M.6 .6L4 3.9L7.4 .6" fill="none" stroke="#d0d0d0" stroke-width="1.1"/></svg><div class="t" style="left:1109px;top:57.14px;font-size:9.71px;color:#e6e6e6;transform:scaleX(1.03);transform-origin:0 0;">4.233 mm</div>
<div class="fld" style="left:1087.500px;top:77px;width:86px;height:21px"></div>
<div class="a" style="left:1088px;top:77.5px;width:67px;height:20px;background:#e4e4e4"></div>
<div class="a" style="left:1090px;top:80.500px;width:61px;height:14px;border-top:1.500px solid #333;border-right:1.500px solid #333"></div>
<svg style="left:1160px;top:85.5px" width="9" height="5" viewBox="0 0 9 5"><path d="M.6 .6L4.5 4.4L8.4 .6" fill="none" stroke="#d0d0d0" stroke-width="1.2"/></svg>
<div class="a" style="left:1179.5px;top:52px;width:1px;height:46px;background:#494949"></div>
<svg style="left:1187px;top:55px" width="13" height="13" viewBox="0 0 13 13"><rect x=".6" y=".6" width="11.800" height="11.800" fill="none" stroke="#cfcfcf" stroke-width="1.200"/><path d="M4.500 .6v11.800M8.500 .6v11.800" stroke="#cfcfcf" stroke-width="1.200"/></svg>
<svg style="left:1187px;top:81px" width="13" height="13" viewBox="0 0 13 13"><rect x=".6" y=".6" width="11.800" height="11.800" fill="none" stroke="#cfcfcf" stroke-width="1.200"/><path d="M4.500 .6v11.800M8.500 .6v11.800M1.500 6.500h2.500M9 6.500h2.500" stroke="#cfcfcf" stroke-width="1.100"/></svg>
<div class="fld" style="left:1206px;top:51px;width:86.5px;height:21px;background:#454545;border-color:#666"></div><div class="a" style="left:1222.5px;top:52px;width:1px;height:19px;background:#666"></div><svg style="left:1210.75px;top:54.25px" width="8" height="4.5" viewBox="0 0 8 4.5"><path d="M.6 3.9L4 .6L7.4 3.9" fill="none" stroke="#d0d0d0" stroke-width="1.1"/></svg><svg style="left:1210.75px;top:64.25px" width="8" height="4.5" viewBox="0 0 8 4.5"><path d="M.6 .6L4 3.9L7.4 .6" fill="none" stroke="#d0d0d0" stroke-width="1.1"/></svg><div class="t" style="left:1227.5px;top:57.14px;font-size:9.71px;color:#e6e6e6;transform:scaleX(1.03);transform-origin:0 0;">1</div>
<div class="fld" style="left:1206px;top:77px;width:86.5px;height:21px;background:#454545;border-color:#666"></div><div class="a" style="left:1222.5px;top:78px;width:1px;height:19px;background:#666"></div><svg style="left:1210.75px;top:80.25px" width="8" height="4.5" viewBox="0 0 8 4.5"><path d="M.6 3.9L4 .6L7.4 3.9" fill="none" stroke="#d0d0d0" stroke-width="1.1"/></svg><svg style="left:1210.75px;top:90.25px" width="8" height="4.5" viewBox="0 0 8 4.5"><path d="M.6 .6L4 3.9L7.4 .6" fill="none" stroke="#d0d0d0" stroke-width="1.1"/></svg><div class="t" style="left:1227.5px;top:83.14px;font-size:9.71px;color:#e6e6e6;transform:scaleX(1.03);transform-origin:0 0;">4.233 mm</div>
<div class="a" style="left:1298px;top:52px;width:1px;height:46px;background:#494949"></div>
<svg style="left:1308.5px;top:55px" width="14.5" height="12" viewBox="0 0 14.5 12"><path d="M0 1H6.3" stroke="#cfcfcf" stroke-width="1.2"/><path d="M0 4.3H6.3" stroke="#cfcfcf" stroke-width="1.2"/><path d="M0 7.6H6.3" stroke="#cfcfcf" stroke-width="1.2"/><path d="M0 10.9H6.3" stroke="#cfcfcf" stroke-width="1.2"/><path d="M8.2 1H14.5" stroke="#cfcfcf" stroke-width="1.2"/><path d="M8.2 4.3H14.5" stroke="#cfcfcf" stroke-width="1.2"/><path d="M8.2 7.6H14.5" stroke="#cfcfcf" stroke-width="1.2"/><path d="M8.2 10.9H14.5" stroke="#cfcfcf" stroke-width="1.2"/></svg>
<div class="a" style="left:1305px;top:77px;width:22px;height:22px;background:#2f2f2f;border-radius:3px"></div>
<svg style="left:1308.5px;top:82px" width="14.5" height="12" viewBox="0 0 14.5 12"><path d="M0 1H6.3" stroke="#e0e0e0" stroke-width="1.2"/><path d="M0 4.3H6.3" stroke="#e0e0e0" stroke-width="1.2"/><path d="M0 7.6H6.3" stroke="#e0e0e0" stroke-width="1.2"/><path d="M0 10.9H6.3" stroke="#e0e0e0" stroke-width="1.2"/><path d="M8.2 1H14.5" stroke="#e0e0e0" stroke-width="1.2"/><path d="M8.2 4.3H14.5" stroke="#e0e0e0" stroke-width="1.2"/><path d="M8.2 7.6H14.5" stroke="#e0e0e0" stroke-width="1.2"/></svg>
<div class="a" style="left:1333px;top:52px;width:1px;height:46px;background:#494949"></div>
<div class="a" style="left:1340px;top:50px;width:22px;height:22px;background:#2f2f2f;border-radius:3px"></div>
<svg style="left:1343px;top:53px" width="16" height="8" viewBox="0 0 16 8"><path d="M0 1H16" stroke="#e0e0e0" stroke-width="1.1"/><path d="M0 3.5H16" stroke="#e0e0e0" stroke-width="1.1"/><path d="M0 6H16" stroke="#e0e0e0" stroke-width="1.1"/></svg>
<svg style="left:1370px;top:62px" width="16" height="8" viewBox="0 0 16 8"><path d="M0 1H16" stroke="#cfcfcf" stroke-width="1.1"/><path d="M0 3.5H16" stroke="#cfcfcf" stroke-width="1.1"/><path d="M0 6H16" stroke="#cfcfcf" stroke-width="1.1"/></svg>
<svg style="left:1343px;top:84px" width="16" height="8" viewBox="0 0 16 8"><path d="M0 1H16" stroke="#cfcfcf" stroke-width="1.1"/><path d="M0 3.5H16" stroke="#cfcfcf" stroke-width="1.1"/><path d="M0 6H16" stroke="#cfcfcf" stroke-width="1.1"/></svg>
<svg style="left:1370px;top:80px" width="16" height="15" viewBox="0 0 16 15"><path d="M0 1H16" stroke="#cfcfcf" stroke-width="1.1"/><path d="M0 7.5H16" stroke="#cfcfcf" stroke-width="1.1"/><path d="M0 14H16" stroke="#cfcfcf" stroke-width="1.1"/></svg>
<div class="a" style="left:1395.5px;top:52px;width:1px;height:46px;background:#494949"></div>
<svg style="left:1405px;top:52.5px" width="16" height="16" viewBox="0 0 16 16"><rect x="2" y="2" width="12" height="12" fill="none" stroke="#cfcfcf" stroke-width="1.200"/><rect x="0" y="0" width="3.500" height="3.500" fill="#535353" stroke="#cfcfcf"/><rect x="12.500" y="0" width="3.500" height="3.500" fill="#535353" stroke="#cfcfcf"/><rect x="0" y="12.500" width="3.500" height="3.500" fill="#535353" stroke="#cfcfcf"/><rect x="12.500" y="12.500" width="3.500" height="3.500" fill="#535353" stroke="#cfcfcf"/><path d="M5 11l3-4 1.500 2 1-1 1.500 3z" fill="#cfcfcf"/></svg>
<div class="a" style="left:1430.5px;top:52px;width:1px;height:46px;background:#494949"></div>
<svg style="left:1440px;top:53px" width="16" height="16" viewBox="0 0 16 16"><path d="M.7 0v16" stroke="#cfcfcf" stroke-width="1.400"/><rect x="3" y="2.500" width="7" height="4.500" fill="#cfcfcf"/><rect x="3" y="9" width="12" height="4.500" fill="#cfcfcf"/></svg>
<svg style="left:1467px;top:53px" width="16" height="16" viewBox="0 0 16 16"><path d="M8 0v16" stroke="#cfcfcf" stroke-width="1.400"/><rect x="4" y="2.500" width="8" height="4.500" fill="#cfcfcf"/><rect x="1" y="9" width="14" height="4.500" fill="#cfcfcf"/></svg>
<svg style="left:1494px;top:53px" width="16" height="16" viewBox="0 0 16 16"><path d="M15.300 0v16" stroke="#cfcfcf" stroke-width="1.400"/><rect x="6" y="2.500" width="7" height="4.500" fill="#cfcfcf"/><rect x="1" y="9" width="12" height="4.500" fill="#cfcfcf"/></svg>
<svg style="left:1522px;top:53px" width="20" height="16" viewBox="0 0 20 16"><path d="M.7 0v16" stroke="#cfcfcf" stroke-width="1.400"/><path d="M3.500 1.500h6l3 3v10h-9z" fill="none" stroke="#cfcfcf" stroke-width="1.600"/><rect x="5.500" y="6" width="5" height="2.500" fill="#cfcfcf"/><rect x="5.500" y="10" width="5" height="2.500" fill="#cfcfcf"/><path d="M15 12.500h4l-2 2.500z" fill="#cfcfcf"/></svg>
<svg style="left:1440px;top:80px" width="16" height="16" viewBox="0 0 16 16"><path d="M0 .7h16" stroke="#cfcfcf" stroke-width="1.400"/><rect x="2.500" y="3" width="4.500" height="12" fill="#cfcfcf"/><rect x="9" y="3" width="4.500" height="7" fill="#cfcfcf"/></svg>
<svg style="left:1467px;top:80px" width="16" height="16" viewBox="0 0 16 16"><path d="M0 8h16" stroke="#cfcfcf" stroke-width="1.400"/><rect x="2.500" y="1" width="4.500" height="14" fill="#cfcfcf"/><rect x="9" y="4" width="4.500" height="8" fill="#cfcfcf"/></svg>
<svg style="left:1494px;top:80px" width="16" height="16" viewBox="0 0 16 16"><path d="M0 15.300h16" stroke="#cfcfcf" stroke-width="1.400"/><rect x="2.500" y="1" width="4.500" height="12" fill="#cfcfcf"/><rect x="9" y="6" width="4.500" height="7" fill="#cfcfcf"/></svg>
<div class="a" style="left:1552px;top:52px;width:1px;height:46px;background:#494949"></div>
<svg style="left:1566px;top:55px" width="16" height="12" viewBox="0 0 16 12"><rect x="1" y="1" width="10" height="9" fill="none" stroke="#cfcfcf" stroke-width="2" stroke-dasharray="2 2"/><path d="M12.500 9h3.500l-1.750 2.200z" fill="#cfcfcf"/></svg>
<div class="fld" style="left:1593px;top:51px;width:181.500px;height:21px"></div>
<div class="a" style="left:1593.500px;top:51.5px;width:163px;height:20px;background:#e4e4e4;border-radius:2px 0 0 2px"></div>
<div class="t" style="left:1600px;top:56.43px;font-size:10.74px;color:#222;transform:scaleX(1.03);transform-origin:0 0;">[None]+</div>
<svg style="left:1761px;top:59.5px" width="9" height="5" viewBox="0 0 9 5"><path d="M.6 .6L4.5 4.4L8.4 .6" fill="none" stroke="#d0d0d0" stroke-width="1.2"/></svg>
<svg style="left:1724px;top:82px" width="20" height="12" viewBox="0 0 20 12"><rect x="3.500" y="3.500" width="7" height="7" fill="#1e1e1e" stroke="#cfcfcf"/><rect x=".5" y=".5" width="7" height="7" fill="#fff" stroke="#bbb"/><path d="M13 4.500h3.500a2.500 2.500 0 0 1 0 5.500H13M15 2.500l-2 2 2 2" fill="none" stroke="#cfcfcf" stroke-width="1.100"/></svg>
<svg style="left:1754px;top:82px" width="18" height="11" viewBox="0 0 18 11"><rect x=".8" y="1.800" width="8" height="8" fill="none" stroke="#cfcfcf" stroke-width="1.600" stroke-dasharray="2 1.200"/><path d="M11 8l5-6M12 3l3.500 4" stroke="#9a9a9a" stroke-width="1.100"/></svg>
<div class="a" style="left:1780.5px;top:52px;width:1px;height:46px;background:#494949"></div>
<svg style="left:2496px;top:65px" width="12" height="18" viewBox="0 0 12 18"><path d="M7.500 0L1 10h4.500L3.500 18 11 7H6.500z" fill="#cfcfcf"/></svg>
<div class="a" style="left:2517px;top:52px;width:1px;height:46px;background:#494949"></div>
<svg style="left:2526px;top:55px" width="12" height="12" viewBox="0 0 12 12"><circle cx="6" cy="6" r="3.300" fill="none" stroke="#cfcfcf" stroke-width="2.200"/><path d="M6 0v12M0 6h12M1.800 1.800l8.400 8.400M10.200 1.800l-8.400 8.400" stroke="#cfcfcf" stroke-width="1.700"/><circle cx="6" cy="6" r="1.600" fill="#535353"/></svg>
<svg style="left:2526px;top:84px" width="12" height="8" viewBox="0 0 12 8"><path d="M0 1H12" stroke="#cfcfcf" stroke-width="1.3"/><path d="M0 4H12" stroke="#cfcfcf" stroke-width="1.3"/><path d="M0 7H12" stroke="#cfcfcf" stroke-width="1.3"/></svg>
<!-- p04_canvas.py -->
<div class="a" style="left:71px;top:149px;width:2419px;height:1225px;background:#bdbdbd;overflow:hidden">
<div class="a" style="left:-71px;top:-149px;width:2560px;height:1440px">
<div class="a" style="left:506px;top:349px;width:1716px;height:1100px;background:#fff;border:1px solid #1a1a1a"></div>
<div class="a" style="left:1364px;top:349px;width:1px;height:1100px;background:#1a1a1a"></div>
<div class="a" style="left:507px;top:394.5px;width:857px;height:81px;background:linear-gradient(90deg,#e4e4e6 0%,#e8e8ea 14%,#f2f2f3 22%,#fafafa 27%,#fff 33%,#fff 67%,#fafafa 73%,#f0f0f1 78%,#e8e8ea 86%,#e4e4e6 100%)"></div>
<div class="a" style="left:507px;top:394.5px;width:857px;height:5px;background:repeating-linear-gradient(90deg,#d4d4d6 0 2px,#e9e9ea 2px 4px)"></div>
<div class="a" style="left:507px;top:396.5px;width:857px;height:1px;background:repeating-linear-gradient(90deg,#f4f4f4 0 2px,#d0d0d2 2px 4px)"></div>
<div class="a" style="left:507px;top:469.5px;width:857px;height:5px;background:repeating-linear-gradient(90deg,#d4d4d6 0 2px,#e9e9ea 2px 4px)"></div>
<div class="a" style="left:507px;top:471.5px;width:857px;height:1px;background:repeating-linear-gradient(90deg,#f4f4f4 0 2px,#d0d0d2 2px 4px)"></div>
<div class="a" style="left:733.5px;top:409.5px;width:403px;height:45px;background:#fff;border:2px solid #cbcbce;border-radius:23px"></div>
<div class="doc" style="left:733.5px;top:421px;width:403px;text-align:center;font-size:16.900px;font-weight:bold;color:#1a1a1a;font-family:'Liberation Sans',sans-serif;letter-spacing:.1px">מצוות שצריך לקיים מעומד</div>
<div class="a" style="left:547.8px;top:419.8px;width:34.500px;height:35.500px;border-radius:50%;background:#b3b3b7"></div>
<div class="a" style="left:549.7px;top:422px;width:29px;height:31px;border-radius:50%;background:#f4f4f5"></div>
<div class="a" style="left:552px;top:422.8px;width:27.500px;height:29.500px;border-radius:50%;background:linear-gradient(180deg,#a9a9ad 0%,#c4c4c7 45%,#e9e9eb 100%)"></div>
<div class="a" style="left:1288.3px;top:419.8px;width:34.500px;height:35.500px;border-radius:50%;background:#b3b3b7"></div>
<div class="a" style="left:1290.2px;top:422px;width:29px;height:31px;border-radius:50%;background:#f4f4f5"></div>
<div class="a" style="left:1292.5px;top:422.8px;width:27.500px;height:29.500px;border-radius:50%;background:linear-gradient(180deg,#a9a9ad 0%,#c4c4c7 45%,#e9e9eb 100%)"></div>
<div class="a" style="left:1365px;top:394.5px;width:856px;height:81px;background:linear-gradient(90deg,#e4e4e6 0%,#e8e8ea 14%,#f2f2f3 22%,#fafafa 27%,#fff 33%,#fff 67%,#fafafa 73%,#f0f0f1 78%,#e8e8ea 86%,#e4e4e6 100%)"></div>
<div class="a" style="left:1365px;top:394.5px;width:856px;height:5px;background:repeating-linear-gradient(90deg,#d4d4d6 0 2px,#e9e9ea 2px 4px)"></div>
<div class="a" style="left:1365px;top:396.5px;width:856px;height:1px;background:repeating-linear-gradient(90deg,#f4f4f4 0 2px,#d0d0d2 2px 4px)"></div>
<div class="a" style="left:1365px;top:469.5px;width:856px;height:5px;background:repeating-linear-gradient(90deg,#d4d4d6 0 2px,#e9e9ea 2px 4px)"></div>
<div class="a" style="left:1365px;top:471.5px;width:856px;height:1px;background:repeating-linear-gradient(90deg,#f4f4f4 0 2px,#d0d0d2 2px 4px)"></div>
<div class="a" style="left:1591px;top:412.5px;width:403px;height:45px;background:#fff;border:2px solid #cbcbce;border-radius:23px"></div>
<div class="doc" style="left:1591px;top:424px;width:403px;text-align:center;font-size:16.900px;font-weight:bold;color:#1a1a1a;font-family:'Liberation Sans',sans-serif;letter-spacing:.1px">מצוות שצריך לקיים מעומד</div>
<div class="a" style="left:1405.8px;top:419.8px;width:34.500px;height:35.500px;border-radius:50%;background:#b3b3b7"></div>
<div class="a" style="left:1407.7px;top:422px;width:29px;height:31px;border-radius:50%;background:#f4f4f5"></div>
<div class="a" style="left:1410px;top:422.8px;width:27.500px;height:29.500px;border-radius:50%;background:linear-gradient(180deg,#a9a9ad 0%,#c4c4c7 45%,#e9e9eb 100%)"></div>
<div class="a" style="left:2145.8px;top:419.8px;width:34.500px;height:35.500px;border-radius:50%;background:#b3b3b7"></div>
<div class="a" style="left:2147.7px;top:422px;width:29px;height:31px;border-radius:50%;background:#f4f4f5"></div>
<div class="a" style="left:2150px;top:422.8px;width:27.500px;height:29.500px;border-radius:50%;background:linear-gradient(180deg,#a9a9ad 0%,#c4c4c7 45%,#e9e9eb 100%)"></div>
<svg style="left:568.5px;top:638px" width="12" height="210" viewBox="0 0 12 210"><path d="M6 0V150" stroke="#808080" stroke-width="2" fill="none"/><path d="M6 145L1 183.500 6 192 11 183.500z" fill="#fff" stroke="#808080" stroke-width="1.500" stroke-linejoin="round"/><path d="M6 192v4" stroke="#808080" stroke-width="1.500"/><circle cx="6" cy="202.500" r="4.500" fill="#fff" stroke="#808080" stroke-width="1.800"/></svg>
<svg style="left:569px;top:1064.5px" width="12" height="210" viewBox="0 0 12 210"><circle cx="6" cy="5.500" r="4.500" fill="#fff" stroke="#808080" stroke-width="1.800"/><path d="M6 10v5" stroke="#808080" stroke-width="1.500"/><path d="M6 60L1 24.500 6 16 11 24.500z" fill="#fff" stroke="#808080" stroke-width="1.500" stroke-linejoin="round"/><path d="M6 55V208" stroke="#808080" stroke-width="2" fill="none"/></svg>
<svg style="left:2162px;top:1064.5px" width="12" height="210" viewBox="0 0 12 210"><circle cx="6" cy="5.500" r="4.500" fill="#fff" stroke="#808080" stroke-width="1.800"/><path d="M6 10v5" stroke="#808080" stroke-width="1.500"/><path d="M6 60L1 24.500 6 16 11 24.500z" fill="#fff" stroke="#808080" stroke-width="1.500" stroke-linejoin="round"/><path d="M6 55V208" stroke="#808080" stroke-width="2" fill="none"/></svg>
<div class="doc" style="left:473px;top:937.500px;width:200px;height:32px;font-size:43px;line-height:32px;font-weight:bold;color:#7a7c7e;text-align:center;transform:rotate(-90deg) scale(.85,1);transform-origin:100px 16px;font-family:'Liberation Serif'">תכון תפילתי</div>
<div class="doc j" style="left:619.5px;top:502.1px;width:579.04px;font-size:22.3px;line-height:25px;height:25px;transform:scaleX(1.088);transform-origin:0 0;word-spacing:-1px;">ישנם עשרה ״הללויה״ בפסוקי דזמרה. וצריך לאומרם בהתלהבות גדולה</div>
<div class="doc j" style="left:619.5px;top:529px;width:579.04px;font-size:22.3px;line-height:25px;height:25px;transform:scaleX(1.088);transform-origin:0 0;word-spacing:-0.4px;">ובמיתון, ויכוין פירוש המלה שכולל שֵם ושבח בבת אחת. וישמח מאוד</div>
<div class="doc j" style="left:619.5px;top:555.9px;width:579.04px;font-size:22.3px;line-height:25px;height:25px;transform:scaleX(1.088);transform-origin:0 0;word-spacing:-0.75px;">שיש לו אלוה גדול כזה, שראוי לשבחו בשבח גדול כזה <span class="sm">(יסוד ושורש העבודה)</span>.</div>
<div class="doc j" style="left:619.5px;top:630.6px;width:579.04px;font-size:22.3px;line-height:25px;height:25px;transform:scaleX(1.088);transform-origin:0 0;word-spacing:-0.4px;">אומרים מזמור: ״<b>אשרי יושבי ביתך</b>״ שלוש פעמים בכל יום, כנגד שלוש</div>
<div class="doc j" style="left:619.5px;top:658.2px;width:579.04px;font-size:22.3px;line-height:25px;height:25px;transform:scaleX(1.088);transform-origin:0 0;word-spacing:-0.4px;">פעמים שיוצאת בת קול מן השמים בשלוש משמרות הלילה. ועל כל</div>
<div class="doc j" style="left:619.5px;top:685.8px;width:579.04px;font-size:22.3px;line-height:25px;height:25px;transform:scaleX(1.088);transform-origin:0 0;word-spacing:-1.67px;">משמר ומשמר יושב הקב״ה ושואג כארי, ואומר: אוי לבנים שבעוונותיהם</div>
<div class="doc j" style="left:619.5px;top:713.4px;width:579.04px;font-size:22.3px;line-height:25px;height:25px;transform:scaleX(1.088);transform-origin:0 0;word-spacing:-1.2px;">החרבתי את ביתי, ושׂרפתי את היכלי, והגלתים לבין אומות העולם <span class="sm">(ברכות</span></div>
<div class="doc" style="left:619.5px;top:741px;width:579.04px;font-size:22.3px;line-height:25px;height:25px;transform:scaleX(1.088);transform-origin:0 0;"><span class="sm">ג.)</span>.</div>
<div class="doc j" style="left:619.5px;top:778.4px;width:579.04px;font-size:22.3px;line-height:25px;height:25px;transform:scaleX(1.088);transform-origin:0 0;word-spacing:-0.92px;">ולכן אנו אומרים על בית המקדש שנשׂרף, ואין לנו כי אם מקדש מעט זה</div>
<div class="doc" style="left:619.5px;top:806px;width:579.04px;font-size:22.3px;line-height:25px;height:25px;transform:scaleX(1.088);transform-origin:0 0;">- אשרי יושבי ביתך.</div>
<div class="doc j" style="left:619.5px;top:842.9px;width:579.04px;font-size:22.3px;line-height:25px;height:25px;transform:scaleX(1.088);transform-origin:0 0;word-spacing:-1.92px;">כל האומר תהילה לדוד שלוש פעמים בכל יום, מובטח לו שהוא בן העולם</div>
<div class="doc" style="left:619.5px;top:870.5px;width:579.04px;font-size:22.3px;line-height:25px;height:25px;transform:scaleX(1.088);transform-origin:0 0;">הבא <span class="sm">(ברכות ד:)</span>, משום שמצוה זו מכרעת.</div>
<div class="doc j" style="left:619.5px;top:907.4px;width:579.04px;font-size:22.3px;line-height:25px;height:25px;transform:scaleX(1.088);transform-origin:0 0;word-spacing:-0.6px;">עשרים ״אשרי״ יש בספר תהלים, כנגד עשרים ״הוי״ שיש בספר ישעיה</div>
<div class="doc" style="left:619.5px;top:935.6px;width:579.04px;font-size:22.3px;line-height:25px;height:25px;transform:scaleX(1.088);transform-origin:0 0;"><span class="sm">(אבודרהם)</span>.</div>
<div class="doc" style="left:619.5px;top:987.7px;width:579.04px;font-size:22.3px;line-height:25px;height:25px;transform:scaleX(1.088);transform-origin:0 0;"><b>הברכה: שירת הים</b></div>
<div class="doc" style="left:619.5px;top:1030.1px;width:579.04px;font-size:22.3px;line-height:25px;height:25px;transform:scaleX(1.088);transform-origin:0 0;"><b>יש נוהגים לומר:</b></div>
<div class="doc" style="left:619.5px;top:1068.3px;width:579.04px;font-size:22.3px;line-height:25px;height:25px;transform:scaleX(1.088);transform-origin:0 0;">מי כמוכה נאדר בקודש, האות כ׳ רפויה.</div>
<div class="doc" style="left:619.5px;top:1105.7px;width:579.04px;font-size:22.3px;line-height:25px;height:25px;transform:scaleX(1.088);transform-origin:0 0;">הנוסח שאנו נוהגים לומר:</div>
<div class="doc" style="left:619.5px;top:1142.9px;width:579.04px;font-size:22.3px;line-height:25px;height:25px;transform:scaleX(1.088);transform-origin:0 0;">מי <b>כָּמוֹכָה</b> נאדר בקודש, האות כ׳ דגושה.</div>
<div class="doc" style="left:619.5px;top:1196.2px;width:579.04px;font-size:22.3px;line-height:25px;height:25px;transform:scaleX(1.088);transform-origin:0 0;"><b>הטעם לדבר:</b></div>
<div class="doc j" style="left:619.5px;top:1239.4px;width:579.04px;font-size:22.3px;line-height:25px;height:25px;transform:scaleX(1.088);transform-origin:0 0;word-spacing:-0.44px;">כלל ידוע בדקדוק הוא, כי האותיות: ב.ג.ד.כ.פ.ת בראש מלה מקבלות</div>
<div class="doc j" style="left:619.5px;top:1266.4px;width:579.04px;font-size:22.3px;line-height:25px;height:25px;transform:scaleX(1.088);transform-origin:0 0;word-spacing:-0.82px;">דגש. אומנם כל זה בתנאי שאותיות אלו אינן באות לאחר אותיות א.ה.ו.י</div>
<div class="doc j" style="left:619.5px;top:1293.4px;width:579.04px;font-size:22.3px;line-height:25px;height:25px;transform:scaleX(1.088);transform-origin:0 0;word-spacing:-0.4px;">אם המלה הקודמת מסתיימת באחת מאותיות אלו הבגד כפת לא יקבל</div>
<div class="doc" style="left:619.5px;top:1320.5px;width:579.04px;font-size:22.3px;line-height:25px;height:25px;transform:scaleX(1.088);transform-origin:0 0;">דגש.</div>
<div class="doc j" style="left:619.5px;top:1359px;width:579.04px;font-size:22.3px;line-height:25px;height:25px;transform:scaleX(1.088);transform-origin:0 0;word-spacing:-1px;">וביארו התוספות ומובא גם ב״בית יוסף״, יחד עם בני ישראל עבר בים גם</div>
<div class="doc" style="left:1477.3px;top:501.3px;width:579.04px;font-size:22.3px;line-height:25px;height:25px;transform:scaleX(1.088);transform-origin:0 0;"><b>טעם שני:</b></div>
<div class="doc j" style="left:1477.3px;top:543.3px;width:579.04px;font-size:22.3px;line-height:25px;height:25px;transform:scaleX(1.088);transform-origin:0 0;word-spacing:-0.36px;">כי בפסוק הזה יש המשכת שפע, ואנחנו פותחים את ידינו לעשות הכנה</div>
<div class="doc" style="left:1477.3px;top:571.3px;width:579.04px;font-size:22.3px;line-height:25px;height:25px;transform:scaleX(1.088);transform-origin:0 0;">כלי לשורשנו ומזלנו למעלה כדי לקבל השפע.</div>
<div class="doc" style="left:1477.3px;top:624.9px;width:579.04px;font-size:22.3px;line-height:25px;height:25px;transform:scaleX(1.088);transform-origin:0 0;"><b>בפסוק זה יש רמזים:</b></div>
<div class="doc j" style="left:1477.3px;top:666.7px;width:579.04px;font-size:22.3px;line-height:25px;height:25px;transform:scaleX(1.088);transform-origin:0 0;word-spacing:-2.27px;"><b>פ</b>ותח <b>א</b>ת <b>י</b>דך, ראשי תיבות: <b>פא״י</b>. שהוא שם מלאך שבידו מפתח פרנסה.</div>
<div class="doc" style="left:1477.3px;top:694.2px;width:579.04px;font-size:22.3px;line-height:25px;height:25px;transform:scaleX(1.088);transform-origin:0 0;">פא״י בגימטריא מלאך.</div>
<div class="doc j" style="left:1477.3px;top:732.2px;width:579.04px;font-size:22.3px;line-height:25px;height:25px;transform:scaleX(1.088);transform-origin:0 0;word-spacing:-1.64px;">פות<b>ח</b> א<b>ת</b> יד<b>ך,</b> סופי תיבות: <b>חת״ך</b>. שהוא שם מלאך שחותך וקוצב פרנסה</div>
<div class="doc" style="left:1477.3px;top:759.4px;width:579.04px;font-size:22.3px;line-height:25px;height:25px;transform:scaleX(1.088);transform-origin:0 0;">לכל יום ויום.</div>
<div class="doc" style="left:1477.3px;top:797.1px;width:579.04px;font-size:22.3px;line-height:25px;height:25px;transform:scaleX(1.088);transform-origin:0 0;"><b>ומשביע</b> גימטריא <b>חת״ך</b>, שהוא חותך מזון לכל חי בשליחות הקב״ה.</div>
<div class="doc j" style="left:1477.3px;top:834.3px;width:579.04px;font-size:22.3px;line-height:25px;height:25px;transform:scaleX(1.088);transform-origin:0 0;word-spacing:-1.29px;">״<b>פותח את ידך ומשׂביע לכל חי רצון</b>״ <span class="dg">7</span> מילים בפסוק, ו - <span class="dg">24</span> אותיות <span class="dg">24/7</span>.</div>
<div class="doc j" style="left:1477.3px;top:861.9px;width:579.04px;font-size:22.3px;line-height:25px;height:25px;transform:scaleX(1.088);transform-origin:0 0;word-spacing:-0.44px;">זאת אומרת שהקב״ה זן ומפרנס אותנו, שבעה ימים בשבוע, עשרים</div>
<div class="doc" style="left:1477.3px;top:889.4px;width:579.04px;font-size:22.3px;line-height:25px;height:25px;transform:scaleX(1.088);transform-origin:0 0;">וארבע שעות ביממה.</div>
<div class="doc j" style="left:1477.3px;top:926.1px;width:579.04px;font-size:22.3px;line-height:25px;height:25px;transform:scaleX(1.088);transform-origin:0 0;word-spacing:-1.45px;">תיקנו לומר פסוק: ״<b>אשרי יושבי ביתך</b>״ <span class="sm">(תהלים פד ה)</span>, קודם המזמור: ״<b>תהלה</b></div>
<div class="doc j" style="left:1477.3px;top:954px;width:579.04px;font-size:22.3px;line-height:25px;height:25px;transform:scaleX(1.088);transform-origin:0 0;word-spacing:-0.36px;"><b>לדוד</b>״ <span class="sm">(תהלים קמ״ה א)</span>, על פי מאמר חז״ל: חסידים הראשונים היו שוהים</div>
<div class="doc j" style="left:1477.3px;top:981.3px;width:579.04px;font-size:22.3px;line-height:25px;height:25px;transform:scaleX(1.088);transform-origin:0 0;word-spacing:-0.36px;">שעה אחת ומתפללים, מְנַיִן לנו? אמר רבי יהושע בן לוי, אמר הפסוק:</div>
<div class="doc" style="left:1477.3px;top:1009.2px;width:579.04px;font-size:22.3px;line-height:25px;height:25px;transform:scaleX(1.088);transform-origin:0 0;">״<b>אשרי יושבי ביתך</b>״ ואחר כך כתוב: ״<b>עוד יהללוך סלה</b>״ <span class="sm">(ברכות לב:)</span>.</div>
<div class="doc" style="left:1477.3px;top:1061.4px;width:579.04px;font-size:22.3px;line-height:25px;height:25px;transform:scaleX(1.088);transform-origin:0 0;"><b>טעם שלישי:</b></div>
<div class="doc j" style="left:1477.3px;top:1103.4px;width:579.04px;font-size:22.3px;line-height:25px;height:25px;transform:scaleX(1.088);transform-origin:0 0;word-spacing:-2.8px;">שתיקנו לומר את הפסוק: ״<b>אשרי</b> יושבי ביתך״ והפסוק: ״<b>אשרי</b> העם שככה</div>
<div class="doc j" style="left:1477.3px;top:1131px;width:579.04px;font-size:22.3px;line-height:25px;height:25px;transform:scaleX(1.088);transform-origin:0 0;word-spacing:-0.36px;">לו, <b>אשרי</b> העם שה׳ אלהיו״ <span class="sm">(תהלים קמ״ד)</span>, שהוא קודם תהילה לדוד. מפני</div>
<div class="doc j" style="left:1477.3px;top:1158.6px;width:579.04px;font-size:22.3px;line-height:25px;height:25px;transform:scaleX(1.088);transform-origin:0 0;word-spacing:-0.4px;">שיש בהם שלוש פעמים התיבה ״אשרי״ כנגד שלוש פעמים בכל יום</div>
<div class="doc" style="left:1477.3px;top:1186.2px;width:579.04px;font-size:22.3px;line-height:25px;height:25px;transform:scaleX(1.088);transform-origin:0 0;">שאומרים בהם אשרי ותהילה לדוד.</div>
<div class="doc j" style="left:1477.3px;top:1261.4px;width:579.04px;font-size:22.3px;line-height:25px;height:25px;transform:scaleX(1.088);transform-origin:0 0;word-spacing:-0.44px;">והטעם שמסיימים בפסוק: ״<b>ואנחנו נברך יה מעתה ועד עולם הללויה</b>״</div>
<div class="doc" style="left:1477.3px;top:1289px;width:579.04px;font-size:22.3px;line-height:25px;height:25px;transform:scaleX(1.088);transform-origin:0 0;"><span class="sm">(תהלים קט״ו יח)</span>, כדי לסמוך הללויה להללויה.</div>
<div class="doc" style="left:1477.3px;top:1325.9px;width:579.04px;font-size:22.3px;line-height:25px;height:25px;transform:scaleX(1.088);transform-origin:0 0;">ועליהם אמר רבי יוסי: ״<b>יהי חלקי מגומרי הלל בכל יום</b>״ <span class="sm">(שבת קי״ח:)</span>.</div>
<div class="a" style="left:619.500px;top:501px;width:631.500px;height:908px;border:1px solid #4a90e8"></div>
<div class="a" style="left:616.5px;top:498px;width:7px;height:7px;background:#fff;border:1px solid #4a90e8"></div>
<div class="a" style="left:932.5px;top:498px;width:7px;height:7px;background:#fff;border:1px solid #4a90e8"></div>
<div class="a" style="left:1247.5px;top:498px;width:7px;height:7px;background:#fff;border:1px solid #4a90e8"></div>
<div class="a" style="left:616.5px;top:952.5px;width:7px;height:7px;background:#fff;border:1px solid #4a90e8"></div>
<div class="a" style="left:1247.5px;top:952.5px;width:7px;height:7px;background:#fff;border:1px solid #4a90e8"></div>
<div class="a" style="left:1246.500px;top:522.500px;width:8.500px;height:9px;background:#f6d600;border:1px solid #4a90e8"></div>
</div></div>
<!-- p05_chrome.py -->
<div class="a" style="left:56px;top:105px;width:186px;height:29px;background:#535353"></div>
<div class="t" style="left:70.5px;top:114px;font-size:11.5px;color:#ececec;transform:scaleX(0.945);transform-origin:0 0;font-weight:bold">*תכון תפילתי.indd @ 134%</div>
<svg style="left:219.5px;top:115.5px" width="8" height="8" viewBox="0 0 8 8"><path d="M1 1l6 6M7 1l-6 6" stroke="#e8e8e8" stroke-width="1.800"/></svg>
<div class="a" style="left:14px;top:104px;width:40px;height:1289px;background:#535353"></div>
<div class="a" style="left:54px;top:104px;width:2px;height:1289px;background:#404040"></div>
<div class="a" style="left:13px;top:104px;width:1px;height:1289px;background:#3c3c3c"></div>
<div class="a" style="left:14px;top:104px;width:40px;height:12px;background:#4a4a4a"></div>
<div class="a" style="left:14px;top:116px;width:40px;height:1px;background:#3e3e3e"></div>
<svg style="left:20px;top:107px" width="8" height="6" viewBox="0 0 8 6"><path d="M0 0l3.500 3L0 6zM4.500 0L8 3 4.500 6z" fill="#d8d8d8"/></svg>
<div class="a" style="left:24px;top:120px;width:20px;height:4px;background:repeating-linear-gradient(90deg,#3a3a3a 0 1px,transparent 1px 2px)"></div>
<div class="a" style="left:20px;top:132.4px;width:28px;height:22.500px;background:#2e2e2e;border-radius:3px"></div><svg style="left:22.5px;top:132.7px" width="22" height="22" viewBox="0 0 22 22"><path d="M6.500 3l11 8.500-6.500 1L7.500 19z" fill="none" stroke="#e6e6e6" stroke-width="1.400" stroke-linejoin="round"/></svg>
<svg style="left:22.5px;top:156.3px" width="22" height="22" viewBox="0 0 22 22"><path d="M6 3l11.500 8.500-6.500 1.200L6.800 19.500z" fill="#cdcdcd"/></svg>
<svg style="left:22.5px;top:180px" width="22" height="22" viewBox="0 0 22 22"><path d="M5.500 3h7l3.500 3.500V13M11 17H5.500V3M12.500 3v3.500H16" fill="none" stroke="#cdcdcd" stroke-width="1.400"/><path d="M13 12l6 4.300-3.300.5-1.700 3z" fill="#cdcdcd"/></svg>
<svg style="left:22.5px;top:204px" width="22" height="22" viewBox="0 0 22 22"><path d="M2.700 4v14M19.300 4v14" stroke="#cdcdcd" stroke-width="1.600"/><path d="M5 11h12M8 8l-3 3 3 3M14 8l3 3-3 3" fill="none" stroke="#cdcdcd" stroke-width="1.500"/></svg>
<svg style="left:22.5px;top:228.3px" width="22" height="22" viewBox="0 0 22 22"><path d="M4 9v9h13V9" fill="none" stroke="#cdcdcd" stroke-width="1.600"/><path d="M7 11h2v2H7zM10 11h2v2h-2zM13 11h2v2h-2zM7 14.500h2v2H7zM10 14.500h2v2h-2zM13 14.500h2v2h-2z" fill="#cdcdcd"/><path d="M10 8.500l6-5.500M12.500 3H16v3.500" fill="none" stroke="#cdcdcd" stroke-width="1.500"/></svg><svg style="left:45px;top:246.3px" width="4" height="4" viewBox="0 0 4 4"><path d="M0 4L4 4L4 0z" fill="#cdcdcd"/></svg>
<svg style="left:22.5px;top:253px" width="22" height="22" viewBox="0 0 22 22"><path d="M5 7V4h12v3M11 4v10M8.500 14h5" fill="none" stroke="#cdcdcd" stroke-width="1.700"/><path d="M4 18h14M6.500 15.500L4 18l2.500 2.500" fill="none" stroke="#cdcdcd" stroke-width="1.300"/></svg><svg style="left:45px;top:271px" width="4" height="4" viewBox="0 0 4 4"><path d="M0 4L4 4L4 0z" fill="#cdcdcd"/></svg>
<svg style="left:22.5px;top:278px" width="22" height="22" viewBox="0 0 22 22"><path d="M4 18L18 4" stroke="#cdcdcd" stroke-width="1.700"/></svg>
<svg style="left:22.5px;top:302.7px" width="22" height="22" viewBox="0 0 22 22"><path d="M3.500 19l2-7 7-5 4.500 4.500-5 7z" fill="#cdcdcd"/><path d="M13 5.500l2-2 4.500 4.500-2 2z" fill="#cdcdcd"/><path d="M3.500 19l6-6" stroke="#535353" stroke-width="1.200"/><circle cx="10" cy="12.500" r="1.300" fill="#535353"/></svg><svg style="left:45px;top:320.7px" width="4" height="4" viewBox="0 0 4 4"><path d="M0 4L4 4L4 0z" fill="#cdcdcd"/></svg>
<svg style="left:22.5px;top:327.5px" width="22" height="22" viewBox="0 0 22 22"><path d="M3.500 19l1.500-5.500 9-9 4 4-9 9z" fill="#cdcdcd"/><path d="M13 5.500l4 4" stroke="#535353" stroke-width="1.100"/><path d="M5 13.500l4 4" stroke="#535353" stroke-width="1"/></svg><svg style="left:45px;top:345.5px" width="4" height="4" viewBox="0 0 4 4"><path d="M0 4L4 4L4 0z" fill="#cdcdcd"/></svg>
<svg style="left:22.5px;top:351px" width="22" height="22" viewBox="0 0 22 22"><ellipse cx="11" cy="11" rx="8.500" ry="6.500" fill="none" stroke="#cdcdcd" stroke-width="1.400"/><path d="M5 6.500l12 9M17 6.500l-12 9" stroke="#cdcdcd" stroke-width="1.300"/></svg><svg style="left:45px;top:369px" width="4" height="4" viewBox="0 0 4 4"><path d="M0 4L4 4L4 0z" fill="#cdcdcd"/></svg>
<svg style="left:22.5px;top:374.7px" width="22" height="22" viewBox="0 0 22 22"><rect x="3.500" y="4.500" width="15" height="13" fill="#6a6a6a" stroke="#cdcdcd" stroke-width="1.300"/></svg><svg style="left:45px;top:392.7px" width="4" height="4" viewBox="0 0 4 4"><path d="M0 4L4 4L4 0z" fill="#cdcdcd"/></svg>
<svg style="left:22.5px;top:400.7px" width="22" height="22" viewBox="0 0 22 22"><path d="M3 5l13 9.500M3 17L16 7.500" stroke="#cdcdcd" stroke-width="2"/><circle cx="17" cy="6" r="2.300" fill="none" stroke="#cdcdcd" stroke-width="1.500"/><circle cx="17" cy="16" r="2.300" fill="none" stroke="#cdcdcd" stroke-width="1.500"/></svg>
<svg style="left:22.5px;top:425px" width="22" height="22" viewBox="0 0 22 22"><path d="M5 7a7 7 0 1 1-1 8" fill="none" stroke="#cdcdcd" stroke-width="1.600"/><path d="M2.500 4.500l1.500 5 5-1.500" fill="none" stroke="#cdcdcd" stroke-width="1.600"/><path d="M5 16a7 7 0 0 0 9 2" fill="none" stroke="#888" stroke-width="1.300" stroke-dasharray="1.500 1.500"/></svg><svg style="left:45px;top:443px" width="4" height="4" viewBox="0 0 4 4"><path d="M0 4L4 4L4 0z" fill="#cdcdcd"/></svg>
<div class="a" style="left:26px;top:453.500px;width:16px;height:14px;background:linear-gradient(90deg,#e0e0e0,#555);border:1px solid #cdcdcd"></div>
<div class="a" style="left:26px;top:478px;width:16px;height:14px;background:linear-gradient(180deg,#8a8a8a 0 30%,#bcbcbc 100%);border:1px solid #cdcdcd"></div>
<svg style="left:26px;top:478px" width="16" height="6" viewBox="0 0 16 6"><path d="M1 1h2v2H1zM5 1h2v2H5zM9 1h2v2H9zM13 1h2v2h-2zM3 3h2v2H3zM7 3h2v2H7zM11 3h2v2h-2z" fill="#666"/></svg>
<svg style="left:22.5px;top:500.7px" width="22" height="22" viewBox="0 0 22 22"><path d="M4 4h14v10l-4 4H4z" fill="#cdcdcd"/><path d="M6.500 7.500h9M6.500 10.500h9M6.500 13.500h5" stroke="#535353" stroke-width="1.300"/><path d="M14 18v-4h4" fill="none" stroke="#535353" stroke-width="1"/></svg>
<svg style="left:22.5px;top:525px" width="22" height="22" viewBox="0 0 22 22"><path d="M3.500 18.500l1-3.500 7.500-7.500 2.500 2.500-7.500 7.500z" fill="none" stroke="#cdcdcd" stroke-width="1.400"/><path d="M11 6l5 5M12.500 7.500l3-3.500a2 2 0 0 1 3 3l-3.500 3" fill="#cdcdcd" stroke="#cdcdcd" stroke-width="1.600"/></svg><svg style="left:45px;top:543px" width="4" height="4" viewBox="0 0 4 4"><path d="M0 4L4 4L4 0z" fill="#cdcdcd"/></svg>
<svg style="left:22.5px;top:548.5px" width="22" height="22" viewBox="0 0 22 22"><path d="M6 12V6.500a1.200 1.200 0 0 1 2.400 0V5a1.200 1.200 0 0 1 2.400 0v-.5a1.200 1.200 0 0 1 2.400 0V6a1.200 1.200 0 0 1 2.400 0v8c0 3-2 5-5 5-3 0-4-1.500-5.500-4L3 11.500c-.5-1.200 1-2 1.800-1z" fill="#cdcdcd"/><path d="M8.400 6v5M10.800 5v6M13.200 5.500V11" stroke="#535353" stroke-width=".8"/></svg>
<svg style="left:22.5px;top:572.7px" width="22" height="22" viewBox="0 0 22 22"><circle cx="9" cy="9" r="5.500" fill="none" stroke="#cdcdcd" stroke-width="1.700"/><path d="M13 13l5.500 5.500" stroke="#cdcdcd" stroke-width="2.400"/></svg>
<svg style="left:20px;top:603px" width="12" height="12" viewBox="0 0 12 12"><rect x="4" y="4" width="7" height="7" fill="#535353" stroke="#ddd" stroke-width="1"/><rect x=".5" y=".5" width="7" height="7" fill="#fff" stroke="#ddd"/><path d="M1 1l6 6" stroke="#e8141c" stroke-width="1.200"/><rect x="5.500" y="5.500" width="4" height="4" fill="#222"/></svg>
<svg style="left:38px;top:604px" width="11" height="11" viewBox="0 0 11 11"><path d="M4 1L1.500 3.500 4 6M1.500 3.500H7v5M5 7.500l2.500 2.500L10 7.500" fill="none" stroke="#cdcdcd" stroke-width="1.300"/></svg>
<div class="a" style="left:20px;top:618.500px;width:19px;height:19px;background:#fff"></div>
<svg style="left:20px;top:618.5px" width="19" height="19" viewBox="0 0 19 19"><path d="M18.500 .5L.5 18.500" stroke="#e8141c" stroke-width="1.700"/></svg>
<div class="a" style="left:28.500px;top:627.500px;width:20px;height:20px;background:#fff;box-shadow:0 0 0 1px #535353"></div>
<div class="a" style="left:33.500px;top:632.500px;width:10px;height:10px;background:#444"></div>
<svg style="left:28.5px;top:627.5px" width="20" height="20" viewBox="0 0 20 20"><path d="M19.500 .5L.5 19.500" stroke="#e8141c" stroke-width="1.700"/></svg>
<div class="a" style="left:20.500px;top:654.500px;width:13px;height:13px;background:#2e2e2e;border-radius:2px"></div><div class="a" style="left:23px;top:657px;width:8px;height:8px;border:1.300px solid #ddd"></div>
<div class="t b" style="left:39px;top:654.500px;font-size:13px;color:#8c8c8c;font-family:'Liberation Serif'">T</div>
<div class="a" style="left:20px;top:674.500px;width:28px;height:21.500px;background:#2e2e2e;border-radius:3px"></div>
<div class="a" style="left:26.500px;top:679px;width:15px;height:12.500px;background:#fff"></div>
<svg style="left:26.5px;top:679px" width="15" height="12.5" viewBox="0 0 15 12.5"><path d="M14.500 .5L.5 12" stroke="#e8141c" stroke-width="1.600"/></svg>
<svg style="left:45px;top:691px" width="4" height="4" viewBox="0 0 4 4"><path d="M0 4L4 4L4 0z" fill="#cdcdcd"/></svg>
<svg style="left:27px;top:708px" width="16" height="13" viewBox="0 0 16 13"><path d="M3 1.500h11" stroke="#cdcdcd" stroke-width="1.600" stroke-dasharray="1.500 1.500"/><path d="M0 5h3M0 8h3M0 11h3" stroke="#cdcdcd" stroke-width="1.300" /><rect x="4.500" y="5" width="9.500" height="7" fill="#cdcdcd"/></svg>
<svg style="left:45px;top:719px" width="4" height="4" viewBox="0 0 4 4"><path d="M0 4L4 4L4 0z" fill="#cdcdcd"/></svg>
<div class="a" style="left:20px;top:730.500px;width:28px;height:21.500px;background:#2e2e2e;border-radius:3px"></div>
<svg style="left:28px;top:735px" width="13" height="12" viewBox="0 0 13 12"><rect x=".7" y=".7" width="11.600" height="10.600" fill="none" stroke="#ddd" stroke-width="1.400"/><path d="M.7 3h11.600" stroke="#ddd" stroke-width="2"/></svg>
<svg style="left:45px;top:747px" width="4" height="4" viewBox="0 0 4 4"><path d="M0 4L4 4L4 0z" fill="#cdcdcd"/></svg>
<div class="a" style="left:56px;top:134px;width:2434px;height:15px;background:#1f1f1f;overflow:hidden">
<svg style="left:0;top:0" width="2434" height="16" viewBox="0 0 2434 16"><path d="M16.5 13V15M26.5 13V15M31.5 13V15M36.5 13V15M41.5 13V15M51.5 13V15M56.5 13V15M61.5 13V15M66.5 13V15M77.5 13V15M82.5 13V15M87.5 13V15M92.5 13V15M102.5 13V15M107.5 13V15M112.5 13V15M117.5 13V15M127.5 13V15M132.5 13V15M137.5 13V15M142.5 13V15M152.5 13V15M157.5 13V15M162.5 13V15M167.5 13V15M177.5 13V15M183.5 13V15M188.5 13V15M193.5 13V15M203.5 13V15M208.5 13V15M213.5 13V15M218.5 13V15M228.5 13V15M233.5 13V15M238.5 13V15M243.5 13V15M253.5 13V15M258.5 13V15M263.5 13V15M268.5 13V15M278.5 13V15M283.5 13V15M288.5 13V15M294.5 13V15M304.5 13V15M309.5 13V15M314.5 13V15M319.5 13V15M329.5 13V15M334.5 13V15M339.5 13V15M344.5 13V15M354.5 13V15M359.5 13V15M364.5 13V15M369.5 13V15M379.5 13V15M384.5 13V15M389.5 13V15M394.5 13V15M404.5 13V15M410.5 13V15M415.5 13V15M420.5 13V15M430.5 13V15M435.5 13V15M440.5 13V15M445.5 13V15M455.5 13V15M460.5 13V15M465.5 13V15M470.5 13V15M480.5 13V15M485.5 13V15M490.5 13V15M495.5 13V15M505.5 13V15M510.5 13V15M515.5 13V15M521.5 13V15M531.5 13V15M536.5 13V15M541.5 13V15M546.5 13V15M556.5 13V15M561.5 13V15M566.5 13V15M571.5 13V15M581.5 13V15M586.5 13V15M591.5 13V15M596.5 13V15M606.5 13V15M611.5 13V15M616.5 13V15M621.5 13V15M632.5 13V15M637.5 13V15M642.5 13V15M647.5 13V15M657.5 13V15M662.5 13V15M667.5 13V15M672.5 13V15M682.5 13V15M687.5 13V15M692.5 13V15M697.5 13V15M707.5 13V15M712.5 13V15M717.5 13V15M722.5 13V15M732.5 13V15M737.5 13V15M743.5 13V15M748.5 13V15M758.5 13V15M763.5 13V15M768.5 13V15M773.5 13V15M783.5 13V15M788.5 13V15M793.5 13V15M798.5 13V15M808.5 13V15M813.5 13V15M818.5 13V15M823.5 13V15M833.5 13V15M838.5 13V15M843.5 13V15M848.5 13V15M859.5 13V15M864.5 13V15M869.5 13V15M874.5 13V15M884.5 13V15M889.5 13V15M894.5 13V15M899.5 13V15M909.5 13V15M914.5 13V15M919.5 13V15M924.5 13V15M934.5 13V15M939.5 13V15M944.5 13V15M949.5 13V15M959.5 13V15M964.5 13V15M970.5 13V15M975.5 13V15M985.5 13V15M990.5 13V15M995.5 13V15M1000.5 13V15M1010.5 13V15M1015.5 13V15M1020.5 13V15M1025.5 13V15M1035.5 13V15M1040.5 13V15M1045.5 13V15M1050.5 13V15M1060.5 13V15M1065.5 13V15M1070.5 13V15M1075.5 13V15M1086.5 13V15M1091.5 13V15M1096.5 13V15M1101.5 13V15M1111.5 13V15M1116.5 13V15M1121.5 13V15M1126.5 13V15M1136.5 13V15M1141.5 13V15M1146.5 13V15M1151.5 13V15M1161.5 13V15M1166.5 13V15M1171.5 13V15M1176.5 13V15M1186.5 13V15M1192.5 13V15M1197.5 13V15M1202.5 13V15M1212.5 13V15M1217.5 13V15M1222.5 13V15M1227.5 13V15M1237.5 13V15M1242.5 13V15M1247.5 13V15M1252.5 13V15M1262.5 13V15M1267.5 13V15M1272.5 13V15M1277.5 13V15M1287.5 13V15M1292.5 13V15M1297.5 13V15M1303.5 13V15M1313.5 13V15M1318.5 13V15M1323.5 13V15M1328.5 13V15M1338.5 13V15M1343.5 13V15M1348.5 13V15M1353.5 13V15M1363.5 13V15M1368.5 13V15M1373.5 13V15M1378.5 13V15M1388.5 13V15M1393.5 13V15M1398.5 13V15M1403.5 13V15M1413.5 13V15M1419.5 13V15M1424.5 13V15M1429.5 13V15M1439.5 13V15M1444.5 13V15M1449.5 13V15M1454.5 13V15M1464.5 13V15M1469.5 13V15M1474.5 13V15M1479.5 13V15M1489.5 13V15M1494.5 13V15M1499.5 13V15M1504.5 13V15M1514.5 13V15M1519.5 13V15M1524.5 13V15M1530.5 13V15M1540.5 13V15M1545.5 13V15M1550.5 13V15M1555.5 13V15M1565.5 13V15M1570.5 13V15M1575.5 13V15M1580.5 13V15M1590.5 13V15M1595.5 13V15M1600.5 13V15M1605.5 13V15M1615.5 13V15M1620.5 13V15M1625.5 13V15M1630.5 13V15M1641.5 13V15M1646.5 13V15M1651.5 13V15M1656.5 13V15M1666.5 13V15M1671.5 13V15M1676.5 13V15M1681.5 13V15M1691.5 13V15M1696.5 13V15M1701.5 13V15M1706.5 13V15M1716.5 13V15M1721.5 13V15M1726.5 13V15M1731.5 13V15M1741.5 13V15M1746.5 13V15M1752.5 13V15M1757.5 13V15M1767.5 13V15M1772.5 13V15M1777.5 13V15M1782.5 13V15M1792.5 13V15M1797.5 13V15M1802.5 13V15M1807.5 13V15M1817.5 13V15M1822.5 13V15M1827.5 13V15M1832.5 13V15M1842.5 13V15M1847.5 13V15M1852.5 13V15M1857.5 13V15M1868.5 13V15M1873.5 13V15M1878.5 13V15M1883.5 13V15M1893.5 13V15M1898.5 13V15M1903.5 13V15M1908.5 13V15M1918.5 13V15M1923.5 13V15M1928.5 13V15M1933.5 13V15M1943.5 13V15M1948.5 13V15M1953.5 13V15M1958.5 13V15M1968.5 13V15M1973.5 13V15M1979.5 13V15M1984.5 13V15M1994.5 13V15M1999.5 13V15M2004.5 13V15M2009.5 13V15M2019.5 13V15M2024.5 13V15M2029.5 13V15M2034.5 13V15M2044.5 13V15M2049.5 13V15M2054.5 13V15M2059.5 13V15M2069.5 13V15M2074.5 13V15M2079.5 13V15M2084.5 13V15M2095.5 13V15M2100.5 13V15M2105.5 13V15M2110.5 13V15M2120.5 13V15M2125.5 13V15M2130.5 13V15M2135.5 13V15M2145.5 13V15M2150.5 13V15M2155.5 13V15M2160.5 13V15M2170.5 13V15M2175.5 13V15M2180.5 13V15M2185.5 13V15M2195.5 13V15M2201.5 13V15M2206.5 13V15M2211.5 13V15M2221.5 13V15M2226.5 13V15M2231.5 13V15M2236.5 13V15M2246.5 13V15M2251.5 13V15M2256.5 13V15M2261.5 13V15M2271.5 13V15M2276.5 13V15M2281.5 13V15M2286.5 13V15M2296.5 13V15M2301.5 13V15M2306.5 13V15M2312.5 13V15M2322.5 13V15M2327.5 13V15M2332.5 13V15M2337.5 13V15M2347.5 13V15M2352.5 13V15M2357.5 13V15M2362.5 13V15M2372.5 13V15M2377.5 13V15M2382.5 13V15M2387.5 13V15M2397.5 13V15M2402.5 13V15M2407.5 13V15M2412.5 13V15M2422.5 13V15M2428.5 13V15M2433.5 13V15M2438.5 13V15" stroke="#9a9a9a" stroke-width="1"/><path d="M21.5 11V15M72.5 11V15M122.5 11V15M172.5 11V15M223.5 11V15M273.5 11V15M324.5 11V15M374.5 11V15M425.5 11V15M475.5 11V15M526.5 11V15M576.5 11V15M626.5 11V15M677.5 11V15M727.5 11V15M778.5 11V15M828.5 11V15M879.5 11V15M929.5 11V15M980.5 11V15M1030.5 11V15M1081.5 11V15M1131.5 11V15M1181.5 11V15M1232.5 11V15M1282.5 11V15M1333.5 11V15M1383.5 11V15M1434.5 11V15M1484.5 11V15M1535.5 11V15M1585.5 11V15M1635.5 11V15M1686.5 11V15M1736.5 11V15M1787.5 11V15M1837.5 11V15M1888.5 11V15M1938.5 11V15M1989.5 11V15M2039.5 11V15M2090.5 11V15M2140.5 11V15M2190.5 11V15M2241.5 11V15M2291.5 11V15M2342.5 11V15M2392.5 11V15" stroke="#9a9a9a" stroke-width="1"/><path d="M46.5 0V15M97.5 0V15M147.5 0V15M198.5 0V15M248.5 0V15M299.5 0V15M349.5 0V15M399.5 0V15M450.5 0V15M500.5 0V15M551.5 0V15M601.5 0V15M652.5 0V15M702.5 0V15M753.5 0V15M803.5 0V15M854.5 0V15M904.5 0V15M954.5 0V15M1005.5 0V15M1055.5 0V15M1106.5 0V15M1156.5 0V15M1207.5 0V15M1257.5 0V15M1308.5 0V15M1358.5 0V15M1408.5 0V15M1459.5 0V15M1509.5 0V15M1560.5 0V15M1610.5 0V15M1661.5 0V15M1711.5 0V15M1762.5 0V15M1812.5 0V15M1862.5 0V15M1913.5 0V15M1963.5 0V15M2014.5 0V15M2064.5 0V15M2115.5 0V15M2165.5 0V15M2216.5 0V15M2266.5 0V15M2317.5 0V15M2367.5 0V15M2417.5 0V15" stroke="#a8a8a8" stroke-width="1"/><text x="48.5" y="9" font-size="10.300" font-family="Liberation Sans" fill="#fff" letter-spacing="-.5">80</text><text x="99.5" y="9" font-size="10.300" font-family="Liberation Sans" fill="#fff" letter-spacing="-.5">70</text><text x="149.5" y="9" font-size="10.300" font-family="Liberation Sans" fill="#fff" letter-spacing="-.5">60</text><text x="200.5" y="9" font-size="10.300" font-family="Liberation Sans" fill="#fff" letter-spacing="-.5">50</text><text x="250.5" y="9" font-size="10.300" font-family="Liberation Sans" fill="#fff" letter-spacing="-.5">40</text><text x="301.5" y="9" font-size="10.300" font-family="Liberation Sans" fill="#fff" letter-spacing="-.5">30</text><text x="351.5" y="9" font-size="10.300" font-family="Liberation Sans" fill="#fff" letter-spacing="-.5">20</text><text x="401.5" y="9" font-size="10.300" font-family="Liberation Sans" fill="#fff" letter-spacing="-.5">10</text><text x="452.5" y="9" font-size="10.300" font-family="Liberation Sans" fill="#fff" letter-spacing="-.5">0</text><text x="502.5" y="9" font-size="10.300" font-family="Liberation Sans" fill="#fff" letter-spacing="-.5">10</text><text x="553.5" y="9" font-size="10.300" font-family="Liberation Sans" fill="#fff" letter-spacing="-.5">20</text><text x="603.5" y="9" font-size="10.300" font-family="Liberation Sans" fill="#fff" letter-spacing="-.5">30</text><text x="654.5" y="9" font-size="10.300" font-family="Liberation Sans" fill="#fff" letter-spacing="-.5">40</text><text x="704.5" y="9" font-size="10.300" font-family="Liberation Sans" fill="#fff" letter-spacing="-.5">50</text><text x="755.5" y="9" font-size="10.300" font-family="Liberation Sans" fill="#fff" letter-spacing="-.5">60</text><text x="805.5" y="9" font-size="10.300" font-family="Liberation Sans" fill="#fff" letter-spacing="-.5">70</text><text x="856.5" y="9" font-size="10.300" font-family="Liberation Sans" fill="#fff" letter-spacing="-.5">80</text><text x="906.5" y="9" font-size="10.300" font-family="Liberation Sans" fill="#fff" letter-spacing="-.5">90</text><text x="956.5" y="9" font-size="10.300" font-family="Liberation Sans" fill="#fff" letter-spacing="-.5">100</text><text x="1007.5" y="9" font-size="10.300" font-family="Liberation Sans" fill="#fff" letter-spacing="-.5">110</text><text x="1057.5" y="9" font-size="10.300" font-family="Liberation Sans" fill="#fff" letter-spacing="-.5">120</text><text x="1108.5" y="9" font-size="10.300" font-family="Liberation Sans" fill="#fff" letter-spacing="-.5">130</text><text x="1158.5" y="9" font-size="10.300" font-family="Liberation Sans" fill="#fff" letter-spacing="-.5">140</text><text x="1209.5" y="9" font-size="10.300" font-family="Liberation Sans" fill="#fff" letter-spacing="-.5">150</text><text x="1259.5" y="9" font-size="10.300" font-family="Liberation Sans" fill="#fff" letter-spacing="-.5">160</text><text x="1310.5" y="9" font-size="10.300" font-family="Liberation Sans" fill="#fff" letter-spacing="-.5">170</text><text x="1360.5" y="9" font-size="10.300" font-family="Liberation Sans" fill="#fff" letter-spacing="-.5">180</text><text x="1410.5" y="9" font-size="10.300" font-family="Liberation Sans" fill="#fff" letter-spacing="-.5">190</text><text x="1461.5" y="9" font-size="10.300" font-family="Liberation Sans" fill="#fff" letter-spacing="-.5">200</text><text x="1511.5" y="9" font-size="10.300" font-family="Liberation Sans" fill="#fff" letter-spacing="-.5">210</text><text x="1562.5" y="9" font-size="10.300" font-family="Liberation Sans" fill="#fff" letter-spacing="-.5">220</text><text x="1612.5" y="9" font-size="10.300" font-family="Liberation Sans" fill="#fff" letter-spacing="-.5">230</text><text x="1663.5" y="9" font-size="10.300" font-family="Liberation Sans" fill="#fff" letter-spacing="-.5">240</text><text x="1713.5" y="9" font-size="10.300" font-family="Liberation Sans" fill="#fff" letter-spacing="-.5">250</text><text x="1764.5" y="9" font-size="10.300" font-family="Liberation Sans" fill="#fff" letter-spacing="-.5">260</text><text x="1814.5" y="9" font-size="10.300" font-family="Liberation Sans" fill="#fff" letter-spacing="-.5">270</text><text x="1864.5" y="9" font-size="10.300" font-family="Liberation Sans" fill="#fff" letter-spacing="-.5">280</text><text x="1915.5" y="9" font-size="10.300" font-family="Liberation Sans" fill="#fff" letter-spacing="-.5">290</text><text x="1965.5" y="9" font-size="10.300" font-family="Liberation Sans" fill="#fff" letter-spacing="-.5">300</text><text x="2016.5" y="9" font-size="10.300" font-family="Liberation Sans" fill="#fff" letter-spacing="-.5">310</text><text x="2066.5" y="9" font-size="10.300" font-family="Liberation Sans" fill="#fff" letter-spacing="-.5">320</text><text x="2117.5" y="9" font-size="10.300" font-family="Liberation Sans" fill="#fff" letter-spacing="-.5">330</text><text x="2167.5" y="9" font-size="10.300" font-family="Liberation Sans" fill="#fff" letter-spacing="-.5">340</text><text x="2218.5" y="9" font-size="10.300" font-family="Liberation Sans" fill="#fff" letter-spacing="-.5">350</text><text x="2268.5" y="9" font-size="10.300" font-family="Liberation Sans" fill="#fff" letter-spacing="-.5">360</text><text x="2319.5" y="9" font-size="10.300" font-family="Liberation Sans" fill="#fff" letter-spacing="-.5">370</text><text x="2369.5" y="9" font-size="10.300" font-family="Liberation Sans" fill="#fff" letter-spacing="-.5">380</text><text x="2419.5" y="9" font-size="10.300" font-family="Liberation Sans" fill="#fff" letter-spacing="-.5">390</text></svg>
</div>
<div class="a" style="left:56px;top:134px;width:15px;height:15px;background:#1f1f1f;border-right:1px solid #9a9a9a"></div>
<svg style="left:57px;top:135px" width="14" height="14" viewBox="0 0 14 14"><path d="M0 3.500h13M3.500 0v13" stroke="#ddd" stroke-width="1" stroke-dasharray="1 1"/><circle cx="3.500" cy="3.500" r="1.500" fill="#1f1f1f" stroke="#ddd" stroke-width=".8"/></svg>
<div class="a" style="left:56px;top:149px;width:15px;height:1225px;background:#1f1f1f;overflow:hidden">
<svg style="left:0;top:0" width="16" height="1226" viewBox="0 0 16 1226"><path d="M13 79.5H15M13 84.5H15M13 89.5H15M13 94.5H15M13 104.5H15M13 109.5H15M13 115.5H15M13 120.5H15M13 130.5H15M13 135.5H15M13 140.5H15M13 145.5H15M13 155.5H15M13 160.5H15M13 165.5H15M13 170.5H15M13 180.5H15M13 185.5H15M13 190.5H15M13 195.5H15M13 205.5H15M13 210.5H15M13 215.5H15M13 220.5H15M13 231.5H15M13 236.5H15M13 241.5H15M13 246.5H15M13 256.5H15M13 261.5H15M13 266.5H15M13 271.5H15M13 281.5H15M13 286.5H15M13 291.5H15M13 296.5H15M13 306.5H15M13 311.5H15M13 316.5H15M13 321.5H15M13 331.5H15M13 337.5H15M13 342.5H15M13 347.5H15M13 357.5H15M13 362.5H15M13 367.5H15M13 372.5H15M13 382.5H15M13 387.5H15M13 392.5H15M13 397.5H15M13 407.5H15M13 412.5H15M13 417.5H15M13 422.5H15M13 432.5H15M13 437.5H15M13 442.5H15M13 448.5H15M13 458.5H15M13 463.5H15M13 468.5H15M13 473.5H15M13 483.5H15M13 488.5H15M13 493.5H15M13 498.5H15M13 508.5H15M13 513.5H15M13 518.5H15M13 523.5H15M13 533.5H15M13 538.5H15M13 543.5H15M13 548.5H15M13 558.5H15M13 564.5H15M13 569.5H15M13 574.5H15M13 584.5H15M13 589.5H15M13 594.5H15M13 599.5H15M13 609.5H15M13 614.5H15M13 619.5H15M13 624.5H15M13 634.5H15M13 639.5H15M13 644.5H15M13 649.5H15M13 659.5H15M13 664.5H15M13 669.5H15M13 675.5H15M13 685.5H15M13 690.5H15M13 695.5H15M13 700.5H15M13 710.5H15M13 715.5H15M13 720.5H15M13 725.5H15M13 735.5H15M13 740.5H15M13 745.5H15M13 750.5H15M13 760.5H15M13 765.5H15M13 770.5H15M13 775.5H15M13 786.5H15M13 791.5H15M13 796.5H15M13 801.5H15M13 811.5H15M13 816.5H15M13 821.5H15M13 826.5H15M13 836.5H15M13 841.5H15M13 846.5H15M13 851.5H15M13 861.5H15M13 866.5H15M13 871.5H15M13 876.5H15M13 886.5H15M13 891.5H15M13 897.5H15M13 902.5H15M13 912.5H15M13 917.5H15M13 922.5H15M13 927.5H15M13 937.5H15M13 942.5H15M13 947.5H15M13 952.5H15M13 962.5H15M13 967.5H15M13 972.5H15M13 977.5H15M13 987.5H15M13 992.5H15M13 997.5H15M13 1002.5H15M13 1013.5H15M13 1018.5H15M13 1023.5H15M13 1028.5H15M13 1038.5H15M13 1043.5H15M13 1048.5H15M13 1053.5H15M13 1063.5H15M13 1068.5H15M13 1073.5H15M13 1078.5H15M13 1088.5H15M13 1093.5H15M13 1098.5H15M13 1103.5H15M13 1113.5H15M13 1118.5H15M13 1124.5H15M13 1129.5H15M13 1139.5H15M13 1144.5H15M13 1149.5H15M13 1154.5H15M13 1164.5H15M13 1169.5H15M13 1174.5H15M13 1179.5H15M13 1189.5H15M13 1194.5H15M13 1199.5H15M13 1204.5H15M13 1214.5H15M13 1219.5H15M13 1224.5H15M13 1229.5H15" stroke="#9a9a9a" stroke-width="1"/><path d="M11 74.5H15M11 125.5H15M11 175.5H15M11 226.5H15M11 276.5H15M11 326.5H15M11 377.5H15M11 427.5H15M11 478.5H15M11 528.5H15M11 579.5H15M11 629.5H15M11 680.5H15M11 730.5H15M11 780.5H15M11 831.5H15M11 881.5H15M11 932.5H15M11 982.5H15M11 1033.5H15M11 1083.5H15M11 1134.5H15M11 1184.5H15" stroke="#9a9a9a" stroke-width="1"/><path d="M0 99.5H15M0 150.5H15M0 200.5H15M0 251.5H15M0 301.5H15M0 352.5H15M0 402.5H15M0 453.5H15M0 503.5H15M0 553.5H15M0 604.5H15M0 654.5H15M0 705.5H15M0 755.5H15M0 806.5H15M0 856.5H15M0 907.5H15M0 957.5H15M0 1008.5H15M0 1058.5H15M0 1108.5H15M0 1159.5H15M0 1209.5H15" stroke="#a8a8a8" stroke-width="1"/><text x="4.700" y="109.4" font-size="10.500" font-family="Liberation Sans" text-anchor="middle" fill="#fff">2</text><text x="4.700" y="118.1" font-size="10.500" font-family="Liberation Sans" text-anchor="middle" fill="#fff">0</text><text x="4.700" y="160.4" font-size="10.500" font-family="Liberation Sans" text-anchor="middle" fill="#fff">1</text><text x="4.700" y="169.1" font-size="10.500" font-family="Liberation Sans" text-anchor="middle" fill="#fff">0</text><text x="4.700" y="210.4" font-size="10.500" font-family="Liberation Sans" text-anchor="middle" fill="#fff">0</text><text x="4.700" y="261.4" font-size="10.500" font-family="Liberation Sans" text-anchor="middle" fill="#fff">1</text><text x="4.700" y="270.1" font-size="10.500" font-family="Liberation Sans" text-anchor="middle" fill="#fff">0</text><text x="4.700" y="311.4" font-size="10.500" font-family="Liberation Sans" text-anchor="middle" fill="#fff">2</text><text x="4.700" y="320.1" font-size="10.500" font-family="Liberation Sans" text-anchor="middle" fill="#fff">0</text><text x="4.700" y="362.4" font-size="10.500" font-family="Liberation Sans" text-anchor="middle" fill="#fff">3</text><text x="4.700" y="371.1" font-size="10.500" font-family="Liberation Sans" text-anchor="middle" fill="#fff">0</text><text x="4.700" y="412.4" font-size="10.500" font-family="Liberation Sans" text-anchor="middle" fill="#fff">4</text><text x="4.700" y="421.1" font-size="10.500" font-family="Liberation Sans" text-anchor="middle" fill="#fff">0</text><text x="4.700" y="463.4" font-size="10.500" font-family="Liberation Sans" text-anchor="middle" fill="#fff">5</text><text x="4.700" y="472.1" font-size="10.500" font-family="Liberation Sans" text-anchor="middle" fill="#fff">0</text><text x="4.700" y="513.4" font-size="10.500" font-family="Liberation Sans" text-anchor="middle" fill="#fff">6</text><text x="4.700" y="522.1" font-size="10.500" font-family="Liberation Sans" text-anchor="middle" fill="#fff">0</text><text x="4.700" y="563.4" font-size="10.500" font-family="Liberation Sans" text-anchor="middle" fill="#fff">7</text><text x="4.700" y="572.1" font-size="10.500" font-family="Liberation Sans" text-anchor="middle" fill="#fff">0</text><text x="4.700" y="614.4" font-size="10.500" font-family="Liberation Sans" text-anchor="middle" fill="#fff">8</text><text x="4.700" y="623.1" font-size="10.500" font-family="Liberation Sans" text-anchor="middle" fill="#fff">0</text><text x="4.700" y="664.4" font-size="10.500" font-family="Liberation Sans" text-anchor="middle" fill="#fff">9</text><text x="4.700" y="673.1" font-size="10.500" font-family="Liberation Sans" text-anchor="middle" fill="#fff">0</text><text x="4.700" y="715.4" font-size="10.500" font-family="Liberation Sans" text-anchor="middle" fill="#fff">1</text><text x="4.700" y="724.1" font-size="10.500" font-family="Liberation Sans" text-anchor="middle" fill="#fff">0</text><text x="4.700" y="732.8" font-size="10.500" font-family="Liberation Sans" text-anchor="middle" fill="#fff">0</text><text x="4.700" y="765.4" font-size="10.500" font-family="Liberation Sans" text-anchor="middle" fill="#fff">1</text><text x="4.700" y="774.1" font-size="10.500" font-family="Liberation Sans" text-anchor="middle" fill="#fff">1</text><text x="4.700" y="782.8" font-size="10.500" font-family="Liberation Sans" text-anchor="middle" fill="#fff">0</text><text x="4.700" y="816.4" font-size="10.500" font-family="Liberation Sans" text-anchor="middle" fill="#fff">1</text><text x="4.700" y="825.1" font-size="10.500" font-family="Liberation Sans" text-anchor="middle" fill="#fff">2</text><text x="4.700" y="833.8" font-size="10.500" font-family="Liberation Sans" text-anchor="middle" fill="#fff">0</text><text x="4.700" y="866.4" font-size="10.500" font-family="Liberation Sans" text-anchor="middle" fill="#fff">1</text><text x="4.700" y="875.1" font-size="10.500" font-family="Liberation Sans" text-anchor="middle" fill="#fff">3</text><text x="4.700" y="883.8" font-size="10.500" font-family="Liberation Sans" text-anchor="middle" fill="#fff">0</text><text x="4.700" y="917.4" font-size="10.500" font-family="Liberation Sans" text-anchor="middle" fill="#fff">1</text><text x="4.700" y="926.1" font-size="10.500" font-family="Liberation Sans" text-anchor="middle" fill="#fff">4</text><text x="4.700" y="934.8" font-size="10.500" font-family="Liberation Sans" text-anchor="middle" fill="#fff">0</text><text x="4.700" y="967.4" font-size="10.500" font-family="Liberation Sans" text-anchor="middle" fill="#fff">1</text><text x="4.700" y="976.1" font-size="10.500" font-family="Liberation Sans" text-anchor="middle" fill="#fff">5</text><text x="4.700" y="984.8" font-size="10.500" font-family="Liberation Sans" text-anchor="middle" fill="#fff">0</text><text x="4.700" y="1018.4" font-size="10.500" font-family="Liberation Sans" text-anchor="middle" fill="#fff">1</text><text x="4.700" y="1027.1" font-size="10.500" font-family="Liberation Sans" text-anchor="middle" fill="#fff">6</text><text x="4.700" y="1035.8" font-size="10.500" font-family="Liberation Sans" text-anchor="middle" fill="#fff">0</text><text x="4.700" y="1068.4" font-size="10.500" font-family="Liberation Sans" text-anchor="middle" fill="#fff">1</text><text x="4.700" y="1077.1" font-size="10.500" font-family="Liberation Sans" text-anchor="middle" fill="#fff">7</text><text x="4.700" y="1085.8" font-size="10.500" font-family="Liberation Sans" text-anchor="middle" fill="#fff">0</text><text x="4.700" y="1118.4" font-size="10.500" font-family="Liberation Sans" text-anchor="middle" fill="#fff">1</text><text x="4.700" y="1127.1" font-size="10.500" font-family="Liberation Sans" text-anchor="middle" fill="#fff">8</text><text x="4.700" y="1135.8" font-size="10.500" font-family="Liberation Sans" text-anchor="middle" fill="#fff">0</text><text x="4.700" y="1169.4" font-size="10.500" font-family="Liberation Sans" text-anchor="middle" fill="#fff">1</text><text x="4.700" y="1178.1" font-size="10.500" font-family="Liberation Sans" text-anchor="middle" fill="#fff">9</text><text x="4.700" y="1186.8" font-size="10.500" font-family="Liberation Sans" text-anchor="middle" fill="#fff">0</text><text x="4.700" y="1219.4" font-size="10.500" font-family="Liberation Sans" text-anchor="middle" fill="#fff">2</text><text x="4.700" y="1228.1" font-size="10.500" font-family="Liberation Sans" text-anchor="middle" fill="#fff">0</text><text x="4.700" y="1236.8" font-size="10.500" font-family="Liberation Sans" text-anchor="middle" fill="#fff">0</text></svg>
<div class="a" style="left:0;top:7.500px;width:15px;height:64px;background:#585858"></div>
<div class="a" style="left:0;top:71.500px;width:15px;height:1px;background:#8a8a8a"></div>
<div class="t" style="left:2.500px;top:1px;font-size:9.500px;color:#d8d8d8">0</div><div class="a" style="left:10.500px;top:5.500px;width:4.500px;height:1px;background:#9a9a9a"></div>
<div class="a" style="left:0;top:306.500px;width:15px;height:1px;background:repeating-linear-gradient(90deg,#ddd 0 1px,transparent 1px 2px)"></div>
</div>
<div class="a" style="left:998px;top:134px;width:1px;height:15px;background:repeating-linear-gradient(180deg,#ddd 0 1px,transparent 1px 2px)"></div>
<div class="a" style="left:2490px;top:149px;width:16px;height:1225px;background:#4a4a4a"></div>
<svg style="left:2493px;top:1364.5px" width="10" height="6" viewBox="0 0 10 6"><path d="M1 1l4 4 4-4" fill="none" stroke="#9a9a9a" stroke-width="1.200"/></svg>
<div class="a" style="left:56px;top:1374px;width:2450px;height:19px;background:#4a4a4a"></div>
<div class="a" style="left:56px;top:1374px;width:515px;height:19px;background:#535353"></div>
<div class="t" style="left:70px;top:1378.05px;font-size:9.8px;color:#e4e4e4;transform:scaleX(1.03);transform-origin:0 0;">133.5%</div>
<svg style="left:112px;top:1381px" width="8" height="5" viewBox="0 0 8 5"><path d="M.6 .6L4 4l3.400-3.400" fill="none" stroke="#cdcdcd" stroke-width="1.200"/></svg>
<svg style="left:132px;top:1379px" width="9" height="9" viewBox="0 0 9 9"><path d="M1 0v9" stroke="#cdcdcd" stroke-width="1.600"/><path d="M9 0v9L3 4.500z" fill="#cdcdcd"/></svg>
<svg style="left:154px;top:1379px" width="6" height="9" viewBox="0 0 6 9"><path d="M6 0v9L0 4.500z" fill="#cdcdcd"/></svg>
<div class="fld" style="left:172.500px;top:1376px;width:90px;height:16px;background:#464646;border-color:#6a6a6a"></div>
<div class="a" style="left:244px;top:1377px;width:1px;height:14px;background:#6a6a6a"></div>
<div class="t" style="left:176.5px;top:1378.05px;font-size:9.8px;color:#e4e4e4;transform:scaleX(1.03);transform-origin:0 0;">113</div>
<svg style="left:249px;top:1381px" width="8" height="5" viewBox="0 0 8 5"><path d="M.6 .6L4 4l3.400-3.400" fill="none" stroke="#cdcdcd" stroke-width="1.200"/></svg>
<svg style="left:275px;top:1379px" width="6" height="9" viewBox="0 0 6 9"><path d="M0 0v9l6-4.500z" fill="#cdcdcd"/></svg>
<svg style="left:294px;top:1379px" width="9" height="9" viewBox="0 0 9 9"><path d="M8 0v9" stroke="#cdcdcd" stroke-width="1.600"/><path d="M0 0v9l6-4.500z" fill="#cdcdcd"/></svg>
<svg style="left:320px;top:1377.5px" width="16" height="12" viewBox="0 0 16 12"><path d="M2 11V4.500A4.500 4.500 0 0 1 11 4.500V8" fill="none" stroke="#cdcdcd" stroke-width="1.700"/><path d="M6.500 3v5.500h4" fill="none" stroke="#cdcdcd" stroke-width="1.400"/><path d="M12.500 9.500h3l-1.500 2z" fill="#cdcdcd"/></svg>
<div class="t" style="left:352px;top:1378.05px;font-size:9.8px;color:#e4e4e4;transform:scaleX(1.03);transform-origin:0 0;">[Basic] (working)</div>
<svg style="left:454px;top:1381px" width="8" height="5" viewBox="0 0 8 5"><path d="M.6 .6L4 4l3.400-3.400" fill="none" stroke="#cdcdcd" stroke-width="1.200"/></svg>
<div class="a" style="left:477.500px;top:1378.500px;width:10.500px;height:10.500px;border-radius:50%;background:#f03a3a"></div>
<div class="t" style="left:494px;top:1378.05px;font-size:9.8px;color:#e4e4e4;transform:scaleX(1.03);transform-origin:0 0;">36 errors</div>
<svg style="left:556.5px;top:1381px" width="8" height="5" viewBox="0 0 8 5"><path d="M.6 .6L4 4l3.400-3.400" fill="none" stroke="#cdcdcd" stroke-width="1.200"/></svg>
<svg style="left:575.5px;top:1379.5px" width="5" height="8" viewBox="0 0 5 8"><path d="M4.400 .6L1 4l3.400 3.400" fill="none" stroke="#8a8a8a" stroke-width="1.200"/></svg>
<div class="a" style="left:817px;top:1376px;width:1313px;height:15px;background:#6a6a6a;border-radius:8px"></div>
<svg style="left:2457px;top:1379.5px" width="5" height="8" viewBox="0 0 5 8"><path d="M.6 .6L4 4 .6 7.400" fill="none" stroke="#8a8a8a" stroke-width="1.200"/></svg>
<svg style="left:2472px;top:1378px" width="15" height="11" viewBox="0 0 15 11"><rect x=".7" y=".7" width="13.600" height="9.600" fill="none" stroke="#cdcdcd" stroke-width="1.300"/><path d="M7.500 .7v9.600" stroke="#cdcdcd" stroke-width="1.300"/></svg>
<svg style="left:2494px;top:1381px" width="9" height="9" viewBox="0 0 9 9"><path d="M8 1v1M8 3.500v1M5.500 3.500v1M8 6v1M5.500 6v1M3 6v1M8 8.500v.5M5.500 8.500v.5M3 8.500v.5M.5 8.500v.5" stroke="#777" stroke-width="1"/></svg>
<div class="a" style="left:14px;top:1393px;width:2532px;height:1px;background:#3a3a3a"></div>
<!-- p06_float.py -->
<div class="a" style="left:164.7px;top:155px;width:104px;height:54.5px;background:#3a3a3a;border-radius:5px 5px 0 0;box-shadow:1px 2px 5px rgba(0,0,0,.35);"></div><div class="a" style="left:165.7px;top:156px;width:102px;height:52.5px;background:#535353;border-radius:4px 4px 0 0"></div><div class="a" style="left:165.7px;top:156px;width:102px;height:12px;background:#424242;border-radius:4px 4px 0 0"></div><div class="a" style="left:165.7px;top:168px;width:102px;height:1px;background:#3b3b3b"></div><svg style="left:237.7px;top:158.5px" width="8" height="6" viewBox="0 0 8 6"><path d="M0 0l3.200 2.700L0 5.400zM4.200 0l3.200 2.700-3.200 2.700z" fill="#d8d8d8"/></svg><svg style="left:256.2px;top:158px" width="7" height="7" viewBox="0 0 7 7"><path d="M.8 .8l5.400 5.400M6.200 .8L.8 6.200" stroke="#d8d8d8" stroke-width="1.700"/></svg><div class="a" style="left:206.7px;top:171.5px;width:20px;height:4px;background:repeating-linear-gradient(90deg,#3c3c3c 0 1px,transparent 1px 2px)"></div><div class="t" style="left:203px;top:188.45px;font-size:10.6px;color:#ececec;transform:scaleX(0.99);transform-origin:0 0;font-weight:bold;letter-spacing:0">Character</div>
<div class="t" style="left:178px;top:183.5px;font-size:17.5px;color:#c8c8c8;letter-spacing:0">A</div>
<div class="a" style="left:192px;top:183px;width:1.200px;height:18.500px;background:#c8c8c8"></div>
<div class="a" style="left:327.5px;top:90.5px;width:240px;height:129px;background:#3a3a3a;border-radius:5px 5px 0 0;box-shadow:1px 2px 5px rgba(0,0,0,.35);"></div><div class="a" style="left:328.5px;top:91.5px;width:238px;height:127px;background:#535353;border-radius:4px 4px 0 0"></div><div class="a" style="left:328.5px;top:91.5px;width:238px;height:12.5px;background:#424242;border-radius:4px 4px 0 0"></div><div class="a" style="left:328.5px;top:104px;width:238px;height:1px;background:#3b3b3b"></div><svg style="left:536.5px;top:94px" width="8" height="6" viewBox="0 0 8 6"><path d="M0 0l3.200 2.700L0 5.400zM4.200 0l3.200 2.700-3.200 2.700z" fill="#d8d8d8"/></svg><svg style="left:555px;top:93.5px" width="7" height="7" viewBox="0 0 7 7"><path d="M.8 .8l5.400 5.400M6.200 .8L.8 6.200" stroke="#d8d8d8" stroke-width="1.700"/></svg>
<div class="a" style="left:327.5px;top:104px;width:240px;height:26px;background:#424242"></div><div class="a" style="left:327.5px;top:104px;width:52.5px;height:27px;background:#535353"></div><div class="t" style="left:340px;top:112.45px;font-size:10.6px;color:#ececec;transform:scaleX(0.99);transform-origin:0 0;font-weight:bold;letter-spacing:0">Story</div><svg style="left:550px;top:114px" width="10" height="8" viewBox="0 0 10 8"><path d="M0 .5h10M0 2.500h10M0 4.500h10M0 6.500h10" stroke="#cdcdcd" stroke-width="1"/></svg>
<div class="a" style="left:334.500px;top:139.500px;width:11.500px;height:11.500px;border:1px solid #d0d0d0;border-radius:2px;background:#4e4e4e"></div>
<div class="t" style="left:352px;top:140.35px;font-size:9.8px;color:#e2e2e2;transform:scaleX(1.03);transform-origin:0 0;letter-spacing:0">Optical Margin Alignment</div>
<svg style="left:333px;top:161px" width="17" height="16" viewBox="0 0 17 16"><path d="M8 1.500h9M7 4.700h10M7 7.900h10M7 11.100h10M7 14.300h10" stroke="#cdcdcd" stroke-width="1.200"/><path d="M5 3.500H1.500v10H5M3 1.500l2 2-2 2M3 11.500l2 2-2 2" fill="none" stroke="#cdcdcd" stroke-width="1.200"/></svg>
<div class="a" style="left:355.500px;top:158px;width:76.500px;height:20.500px;background:#5f5f5f;border-radius:2px"></div>
<div class="a" style="left:372.500px;top:158px;width:1px;height:20.500px;background:#535353"></div>
<svg style="left:360px;top:161.75px" width="9" height="13" viewBox="0 0 9 13"><path d="M.7 3.400L4.500 .6l3.800 2.800M.7 9.600l3.800 2.800 3.800-2.800" fill="none" stroke="#a8a8a8" stroke-width="1"/></svg>
<div class="t" style="left:378px;top:164.37px;font-size:10.05px;color:#b4b4b4;transform:scaleX(1.03);transform-origin:0 0;letter-spacing:0">12 pt</div>
<svg style="left:418px;top:166px" width="9" height="5" viewBox="0 0 9 5"><path d="M.6 .6L4.500 4.200 8.400 .6" fill="none" stroke="#a8a8a8" stroke-width="1.100"/></svg>
<div class="a" style="left:333px;top:184.500px;width:230px;height:1px;background:#474747"></div>
<svg style="left:337.5px;top:194.5px" width="16" height="15" viewBox="0 0 16 15"><rect x="2" y="1" width="12" height="12.500" fill="none" stroke="#cdcdcd" stroke-width="1.100"/><path d="M4 4h8M4 6.500h3M9 6.500h3M4 9h3M9 9h3" stroke="#cdcdcd" stroke-width="1"/><rect x=".5" y="1.500" width="2.500" height="2.500" fill="#535353" stroke="#cdcdcd" stroke-width=".8"/><rect x="13" y="10.500" width="2.500" height="2.500" fill="#535353" stroke="#cdcdcd" stroke-width=".8"/></svg>
<div class="a" style="left:359px;top:191px;width:22px;height:22px;background:#2e2e2e;border-radius:3px"></div>
<svg style="left:362px;top:194.5px" width="16" height="15" viewBox="0 0 16 15"><rect x="2" y="1" width="12" height="12.500" fill="none" stroke="#e8e8e8" stroke-width="1.100"/><path d="M4 4h8M4 6.500h3M9 6.500h3M4 9h3M9 9h3" stroke="#e8e8e8" stroke-width="1"/><rect x=".5" y="1.500" width="2.500" height="2.500" fill="#2e2e2e" stroke="#e8e8e8" stroke-width=".8"/><rect x="13" y="10.500" width="2.500" height="2.500" fill="#2e2e2e" stroke="#e8e8e8" stroke-width=".8"/></svg>
<div class="a" style="left:526.5px;top:57px;width:241px;height:230.5px;background:#3a3a3a;border-radius:5px 5px 0 0;box-shadow:1px 2px 5px rgba(0,0,0,.35);"></div><div class="a" style="left:527.5px;top:58px;width:239px;height:228.5px;background:#535353;border-radius:4px 4px 0 0"></div><div class="a" style="left:527.5px;top:58px;width:239px;height:12.5px;background:#424242;border-radius:4px 4px 0 0"></div><div class="a" style="left:527.5px;top:70.5px;width:239px;height:1px;background:#3b3b3b"></div><svg style="left:736.5px;top:60.5px" width="8" height="6" viewBox="0 0 8 6"><path d="M3.200 0L0 2.700l3.200 2.700zM7.400 0L4.200 2.700l3.200 2.700z" fill="#d8d8d8"/></svg><svg style="left:755px;top:60px" width="7" height="7" viewBox="0 0 7 7"><path d="M.8 .8l5.400 5.400M6.200 .8L.8 6.200" stroke="#d8d8d8" stroke-width="1.700"/></svg>
<div class="a" style="left:526.5px;top:71px;width:241px;height:26px;background:#424242"></div><div class="a" style="left:526.5px;top:71px;width:112px;height:27px;background:#535353"></div><svg style="left:534.5px;top:79px" width="6" height="10" viewBox="0 0 6 10"><path d="M.7 3.700L3 1l2.300 2.700M.7 6.300L3 9l2.300-2.700" fill="none" stroke="#cdcdcd" stroke-width="1"/></svg><div class="t" style="left:545px;top:79.45px;font-size:10.6px;color:#ececec;transform:scaleX(0.99);transform-origin:0 0;font-weight:bold;letter-spacing:0">Character Styles</div><svg style="left:750px;top:81px" width="10" height="8" viewBox="0 0 10 8"><path d="M0 .5h10M0 2.500h10M0 4.500h10M0 6.500h10" stroke="#cdcdcd" stroke-width="1"/></svg>
<div class="t" style="left:532px;top:106.35px;font-size:9.8px;color:#e2e2e2;transform:scaleX(1.03);transform-origin:0 0;letter-spacing:0">(No Styles)</div>
<div class="t" style="left:718px;top:103.5px;font-size:11.5px;color:#b4b4b4;letter-spacing:-.6px;-webkit-text-stroke:0">[a+]</div>
<svg style="left:752.5px;top:103px" width="9" height="14" viewBox="0 0 9 14"><path d="M6 0L.5 8h3.700L2.500 14 8.500 5.500H5z" fill="#cdcdcd"/></svg>
<div class="a" style="left:526.5px;top:123.5px;width:241px;height:21.5px;background:#4b6b8c"></div><div class="a" style="left:528.5px;top:145px;width:237px;height:1px;background:#474747"></div><div class="t" style="left:562px;top:130.35px;font-size:10.3px;color:#f2f2f2;transform:scaleX(1.09);transform-origin:0 0;font-weight:bold;letter-spacing:0;">[None]</div><svg style="left:743px;top:128px" width="12" height="12" viewBox="0 0 12 12"><path d="M1 11l2.500-.7L10.500 3.300 8.700 1.500 1.700 8.500z" fill="#e0e0e0"/><path d="M1 1l10 10" stroke="#e0e0e0" stroke-width="1.300"/><path d="M10.500 1L1 10.500" stroke="#4b6b8c" stroke-width=".6"/></svg><div class="a" style="left:528.5px;top:167px;width:237px;height:1px;background:#474747"></div><div class="t" style="left:562px;top:150.75px;font-size:11.5px;color:#e2e2e2;transform:scaleX(0.98);transform-origin:0 0;">סוגריים</div><div class="a" style="left:528.5px;top:189px;width:237px;height:1px;background:#474747"></div><div class="t" style="left:562px;top:173.6px;font-size:9.8px;color:#e2e2e2;transform:scaleX(1.03);transform-origin:0 0;letter-spacing:0;">Hyperlink</div><svg style="left:741.5px;top:172px" width="16" height="12" viewBox="0 0 16 12"><path d="M0 7.500h3.500l1.500 1.500h6l1.500-1.500H16V12H0z" fill="#c4c4c4"/><path d="M8 0v6.500M4.800 3.800L8 7l3.200-3.200" fill="none" stroke="#c4c4c4" stroke-width="1.700"/></svg><div class="a" style="left:528.5px;top:211px;width:237px;height:1px;background:#474747"></div><div class="t" style="left:562px;top:194.75px;font-size:11.5px;color:#e2e2e2;transform:scaleX(0.98);transform-origin:0 0;">הדגשה</div><div class="a" style="left:528.5px;top:233px;width:237px;height:1px;background:#474747"></div><div class="t" style="left:562px;top:217.6px;font-size:9.8px;color:#e2e2e2;transform:scaleX(1.03);transform-origin:0 0;letter-spacing:0;">Styles for Word/RTF Imported Lists</div><svg style="left:535.5px;top:218.5px" width="5" height="8" viewBox="0 0 5 8"><path d="M.7 .7L4 4 .7 7.300" fill="none" stroke="#cdcdcd" stroke-width="1.100"/></svg><svg style="left:545px;top:217px" width="14" height="11" viewBox="0 0 14 11"><path d="M0 0h5l1 1.500h8V11H0z" fill="#c4c4c4"/></svg><div class="a" style="left:528.5px;top:255px;width:237px;height:1px;background:#474747"></div><div class="t" style="left:562px;top:238.75px;font-size:11.5px;color:#e2e2e2;transform:scaleX(0.98);transform-origin:0 0;">כותרת</div>
<svg style="left:534.5px;top:260.5px" width="13" height="13" viewBox="0 0 13 13"><path d="M3.500 3.500V.6h9v9h-3" fill="none" stroke="#8a8a8a" stroke-width="1.100"/><rect x=".6" y="3.500" width="9" height="9" fill="none" stroke="#8a8a8a" stroke-width="1.100"/><path d="M2 8.500h5M5 6l2.500 2.500L5 11" fill="none" stroke="#8a8a8a" stroke-width="1.200"/></svg>
<svg style="left:674px;top:261.5px" width="14" height="11" viewBox="0 0 14 11"><path d="M0 0h5l1 1.500h8V11H0z" fill="#c4c4c4"/></svg>
<svg style="left:705px;top:261.5px" width="11" height="11" viewBox="0 0 11 11"><rect x=".6" y=".6" width="9.800" height="9.800" fill="none" stroke="#d0d0d0" stroke-width="1.200"/><path d="M5.500 3v5M3 5.500h5" stroke="#d0d0d0" stroke-width="1.200"/></svg>
<svg style="left:732.5px;top:261px" width="10" height="12" viewBox="0 0 10 12"><path d="M0 2.500h10M3.500 2.500V.8h3v1.700M1.200 2.500l.6 9h6.400l.6-9M3.700 4.500v5.500M5 4.500v5.500M6.300 4.500v5.500" fill="none" stroke="#8a8a8a" stroke-width="1"/></svg>
<div class="a" style="left:526.5px;top:280px;width:241px;height:1.500px;background:#3a3a3a"></div>
<div class="a" style="left:526.5px;top:281.500px;width:241px;height:6px;background:#4a4a4a"></div>
<div class="a" style="left:636.5px;top:282.5px;width:20px;height:4px;background:repeating-linear-gradient(90deg,#2e2e2e 0 1px,transparent 1px 2px)"></div>
<div class="a" style="left:389.5px;top:328.5px;width:99px;height:53.5px;background:#3a3a3a;border-radius:5px 5px 0 0;box-shadow:1px 2px 5px rgba(0,0,0,.35);"></div><div class="a" style="left:390.5px;top:329.5px;width:97px;height:51.5px;background:#535353;border-radius:4px 4px 0 0"></div><div class="a" style="left:390.5px;top:329.5px;width:97px;height:12px;background:#424242;border-radius:4px 4px 0 0"></div><div class="a" style="left:390.5px;top:341.5px;width:97px;height:1px;background:#3b3b3b"></div><svg style="left:457.5px;top:332px" width="8" height="6" viewBox="0 0 8 6"><path d="M0 0l3.200 2.700L0 5.400zM4.200 0l3.200 2.700-3.200 2.700z" fill="#d8d8d8"/></svg><svg style="left:476px;top:331.5px" width="7" height="7" viewBox="0 0 7 7"><path d="M.8 .8l5.400 5.400M6.200 .8L.8 6.200" stroke="#d8d8d8" stroke-width="1.700"/></svg><div class="a" style="left:429px;top:345px;width:20px;height:4px;background:repeating-linear-gradient(90deg,#3c3c3c 0 1px,transparent 1px 2px)"></div><div class="t" style="left:426.5px;top:360.95px;font-size:10.6px;color:#ececec;transform:scaleX(0.99);transform-origin:0 0;font-weight:bold;letter-spacing:0">Preflight</div>
<svg style="left:401.5px;top:356.5px" width="17" height="19" viewBox="0 0 17 19"><path d="M0 .5h7.500L11 4v9H0z" fill="#c4c4c4"/><path d="M7.500 .5V4H11" fill="none" stroke="#535353" stroke-width=".9"/><path d="M1.800 4.500l1.200 1.300 2-2.600M1.800 8.500l1.200 1.300 2-2.600" fill="none" stroke="#535353" stroke-width="1"/><path d="M6.500 17.500l1-3.300 6.500-6.500 2.300 2.300-6.500 6.500z" fill="#c4c4c4" stroke="#535353" stroke-width=".9"/></svg>
<div class="a" style="left:617.5px;top:333.5px;width:165px;height:53.5px;background:#3a3a3a;border-radius:5px 5px 0 0;box-shadow:1px 2px 5px rgba(0,0,0,.35);"></div><div class="a" style="left:618.5px;top:334.5px;width:163px;height:51.5px;background:#535353;border-radius:4px 4px 0 0"></div><div class="a" style="left:618.5px;top:334.5px;width:163px;height:12px;background:#424242;border-radius:4px 4px 0 0"></div><div class="a" style="left:618.5px;top:346.5px;width:163px;height:1px;background:#3b3b3b"></div><svg style="left:751.5px;top:337px" width="8" height="6" viewBox="0 0 8 6"><path d="M0 0l3.200 2.700L0 5.400zM4.200 0l3.200 2.700-3.200 2.700z" fill="#d8d8d8"/></svg><svg style="left:770px;top:336.5px" width="7" height="7" viewBox="0 0 7 7"><path d="M.8 .8l5.400 5.400M6.200 .8L.8 6.200" stroke="#d8d8d8" stroke-width="1.700"/></svg><div class="a" style="left:690px;top:350px;width:20px;height:4px;background:repeating-linear-gradient(90deg,#3c3c3c 0 1px,transparent 1px 2px)"></div><div class="t" style="left:655px;top:365.95px;font-size:10.6px;color:#ececec;transform:scaleX(0.99);transform-origin:0 0;font-weight:bold;letter-spacing:0">Text Wrap</div>
<svg style="left:629px;top:364px" width="17" height="14" viewBox="0 0 17 14"><path d="M0 1h17M0 13h17M0 4h3.500M0 7h3.500M0 10h3.500M13.500 4H17M13.500 7H17M13.500 10H17" stroke="#cdcdcd" stroke-width="1.100"/><circle cx="8.500" cy="7" r="4" fill="#cdcdcd"/></svg>
<div class="a" style="left:97.5px;top:430px;width:241.5px;height:516px;background:#3a3a3a;border-radius:5px 5px 0 0;box-shadow:1px 2px 5px rgba(0,0,0,.35);"></div><div class="a" style="left:98.5px;top:431px;width:239.5px;height:514px;background:#535353;border-radius:4px 4px 0 0"></div><div class="a" style="left:98.5px;top:431px;width:239.5px;height:12.5px;background:#424242;border-radius:4px 4px 0 0"></div><div class="a" style="left:98.5px;top:443.5px;width:239.5px;height:1px;background:#3b3b3b"></div><svg style="left:308px;top:433.5px" width="8" height="6" viewBox="0 0 8 6"><path d="M3.200 0L0 2.700l3.200 2.700zM7.400 0L4.200 2.700l3.200 2.700z" fill="#d8d8d8"/></svg><svg style="left:326.5px;top:433px" width="7" height="7" viewBox="0 0 7 7"><path d="M.8 .8l5.400 5.400M6.200 .8L.8 6.200" stroke="#d8d8d8" stroke-width="1.700"/></svg>
<div class="a" style="left:97.5px;top:444px;width:241.5px;height:26px;background:#424242"></div><div class="a" style="left:97.5px;top:444px;width:117px;height:27px;background:#535353"></div><svg style="left:105.5px;top:452px" width="6" height="10" viewBox="0 0 6 10"><path d="M.7 3.700L3 1l2.300 2.700M.7 6.300L3 9l2.300-2.700" fill="none" stroke="#cdcdcd" stroke-width="1"/></svg><div class="t" style="left:116px;top:452.45px;font-size:10.6px;color:#ececec;transform:scaleX(0.99);transform-origin:0 0;font-weight:bold;letter-spacing:0">Paragraph Styles</div><svg style="left:322px;top:454px" width="10" height="8" viewBox="0 0 10 8"><path d="M0 .5h10M0 2.500h10M0 4.500h10M0 6.500h10" stroke="#cdcdcd" stroke-width="1"/></svg>
<div class="t" style="left:103px;top:480.35px;font-size:9.8px;color:#e2e2e2;transform:scaleX(1.03);transform-origin:0 0;letter-spacing:0">(No Styles)</div>
<div class="t" style="left:289px;top:477.5px;font-size:11.5px;color:#b4b4b4;letter-spacing:-.6px;-webkit-text-stroke:0">[a+]</div>
<svg style="left:320px;top:477px" width="9" height="14" viewBox="0 0 9 14"><path d="M6 0L.5 8h3.700L2.500 14 8.500 5.500H5z" fill="#cdcdcd"/></svg>
<div class="a" style="left:99.5px;top:496px;width:237.5px;height:1px;background:#474747"></div>
<div class="a" style="left:99.5px;top:518px;width:237.5px;height:1px;background:#474747"></div><div class="t" style="left:133px;top:502.6px;font-size:9.8px;color:#e2e2e2;transform:scaleX(1.03);transform-origin:0 0;letter-spacing:0;">[Basic Paragraph]</div><div class="a" style="left:99.5px;top:540px;width:237.5px;height:1px;background:#474747"></div><div class="t" style="left:133px;top:523.75px;font-size:11.5px;color:#e2e2e2;transform:scaleX(0.98);transform-origin:0 0;">רגיל</div><svg style="left:313px;top:523px" width="16" height="12" viewBox="0 0 16 12"><path d="M0 7.500h3.500l1.500 1.500h6l1.500-1.500H16V12H0z" fill="#c4c4c4"/><path d="M8 0v6.500M4.800 3.800L8 7l3.200-3.200" fill="none" stroke="#c4c4c4" stroke-width="1.700"/></svg><div class="a" style="left:99.5px;top:562px;width:237.5px;height:1px;background:#474747"></div><div class="t" style="left:133px;top:545.75px;font-size:11.5px;color:#e2e2e2;transform:scaleX(0.98);transform-origin:0 0;">אות של אות</div><div class="a" style="left:99.5px;top:584px;width:237.5px;height:1px;background:#474747"></div><div class="t" style="left:133px;top:567.75px;font-size:11.5px;color:#e2e2e2;transform:scaleX(0.98);transform-origin:0 0;">כותרת אמצע</div><div class="a" style="left:99.5px;top:606px;width:237.5px;height:1px;background:#474747"></div><div class="t" style="left:133px;top:589.75px;font-size:11.5px;color:#e2e2e2;transform:scaleX(0.98);transform-origin:0 0;">פיסקה רגילה</div><div class="t" style="left:256px;top:590.81px;font-size:9.37px;color:#e2e2e2;transform:scaleX(1.03);transform-origin:0 0;letter-spacing:0">Ctrl+Num 1</div><div class="a" style="left:99.5px;top:628px;width:237.5px;height:1px;background:#474747"></div><div class="t" style="left:133px;top:611.75px;font-size:11.5px;color:#e2e2e2;transform:scaleX(0.98);transform-origin:0 0;">רווח</div><div class="a" style="left:99.5px;top:650px;width:237.5px;height:1px;background:#474747"></div><div class="t" style="left:133px;top:633.75px;font-size:11.5px;color:#e2e2e2;transform:scaleX(0.98);transform-origin:0 0;">כותרת ימין לא מודגשת</div><div class="a" style="left:99.5px;top:672px;width:237.5px;height:1px;background:#474747"></div><div class="t" style="left:133px;top:655.75px;font-size:11.5px;color:#e2e2e2;transform:scaleX(0.98);transform-origin:0 0;">יש נוהגים לומר</div><div class="a" style="left:99.5px;top:694px;width:237.5px;height:1px;background:#474747"></div><div class="t" style="left:133px;top:677.75px;font-size:11.5px;color:#e2e2e2;transform:scaleX(0.98);transform-origin:0 0;">פיסקה רגילה אותיות</div><div class="a" style="left:99.5px;top:716px;width:237.5px;height:1px;background:#474747"></div><div class="t" style="left:133px;top:699.75px;font-size:11.5px;color:#e2e2e2;transform:scaleX(0.98);transform-origin:0 0;">משנה</div><div class="a" style="left:99.5px;top:738px;width:237.5px;height:1px;background:#474747"></div><div class="t" style="left:133px;top:721.75px;font-size:11.5px;color:#e2e2e2;transform:scaleX(0.98);transform-origin:0 0;">תפילה</div><div class="a" style="left:99.5px;top:760px;width:237.5px;height:1px;background:#474747"></div><div class="t" style="left:133px;top:743.75px;font-size:11.5px;color:#e2e2e2;transform:scaleX(0.98);transform-origin:0 0;">ראשי</div><div class="a" style="left:99.5px;top:782px;width:237.5px;height:1px;background:#474747"></div><div class="t" style="left:133px;top:765.75px;font-size:11.5px;color:#e2e2e2;transform:scaleX(0.98);transform-origin:0 0;">גוף טקסט</div><svg style="left:313px;top:765px" width="16" height="12" viewBox="0 0 16 12"><path d="M0 7.500h3.500l1.500 1.500h6l1.500-1.500H16V12H0z" fill="#c4c4c4"/><path d="M8 0v6.500M4.800 3.800L8 7l3.200-3.200" fill="none" stroke="#c4c4c4" stroke-width="1.700"/></svg><div class="a" style="left:99.5px;top:804px;width:237.5px;height:1px;background:#474747"></div><div class="t" style="left:133px;top:788.6px;font-size:9.8px;color:#e2e2e2;transform:scaleX(1.03);transform-origin:0 0;letter-spacing:0;">Normal (Web)</div><svg style="left:313px;top:787px" width="16" height="12" viewBox="0 0 16 12"><path d="M0 7.500h3.500l1.500 1.500h6l1.500-1.500H16V12H0z" fill="#c4c4c4"/><path d="M8 0v6.500M4.800 3.800L8 7l3.200-3.200" fill="none" stroke="#c4c4c4" stroke-width="1.700"/></svg><div class="a" style="left:99.5px;top:826px;width:237.5px;height:1px;background:#474747"></div><div class="t" style="left:133px;top:810.6px;font-size:9.8px;color:#e2e2e2;transform:scaleX(1.03);transform-origin:0 0;letter-spacing:0;">TOC Body Text</div>
<div class="a" style="left:99.5px;top:913px;width:237.5px;height:1px;background:#474747"></div>
<svg style="left:105px;top:920.5px" width="13" height="13" viewBox="0 0 13 13"><path d="M3.500 3.500V.6h9v9h-3" fill="none" stroke="#8a8a8a" stroke-width="1.100"/><rect x=".6" y="3.500" width="9" height="9" fill="none" stroke="#8a8a8a" stroke-width="1.100"/><path d="M2 8.500h5M5 6l2.500 2.500L5 11" fill="none" stroke="#8a8a8a" stroke-width="1.200"/></svg>
<svg style="left:217.5px;top:921.5px" width="14" height="11" viewBox="0 0 14 11"><path d="M0 0h5l1 1.500h8V11H0z" fill="#c4c4c4"/></svg>
<div class="t" style="left:244px;top:918.5px;font-size:14px;color:#8a8a8a;">¶</div>
<svg style="left:254px;top:921px" width="9" height="9" viewBox="0 0 9 9"><path d="M1 8l7-7M3 2l4 5" stroke="#8a8a8a" stroke-width="1"/></svg>
<svg style="left:276px;top:921px" width="11" height="11" viewBox="0 0 11 11"><rect x=".6" y=".6" width="9.800" height="9.800" fill="none" stroke="#d0d0d0" stroke-width="1.200"/><path d="M5.500 3v5M3 5.500h5" stroke="#d0d0d0" stroke-width="1.200"/></svg>
<svg style="left:303.5px;top:920.5px" width="10" height="12" viewBox="0 0 10 12"><path d="M0 2.500h10M3.500 2.500V.8h3v1.700M1.200 2.500l.6 9h6.400l.6-9M3.700 4.500v5.500M5 4.500v5.500M6.300 4.500v5.500" fill="none" stroke="#8a8a8a" stroke-width="1"/></svg>
<div class="a" style="left:97.5px;top:938.500px;width:241.5px;height:1.500px;background:#3a3a3a"></div>
<div class="a" style="left:97.5px;top:940px;width:241.5px;height:6px;background:#4a4a4a"></div>
<div class="a" style="left:208px;top:941px;width:20px;height:4px;background:repeating-linear-gradient(90deg,#2e2e2e 0 1px,transparent 1px 2px)"></div>
<!-- p07_scripts.py -->
<div class="a" style="left:1360.5px;top:106px;width:115px;height:247px;background:#3a3a3a;border-radius:5px 5px 0 0;box-shadow:1px 2px 5px rgba(0,0,0,.35);"></div><div class="a" style="left:1361.5px;top:107px;width:113px;height:245px;background:#535353;border-radius:4px 4px 0 0"></div><div class="a" style="left:1361.5px;top:107px;width:113px;height:11.5px;background:#424242;border-radius:4px 4px 0 0"></div><div class="a" style="left:1361.5px;top:118.5px;width:113px;height:1px;background:#3b3b3b"></div><svg style="left:1444.5px;top:109.5px" width="8" height="6" viewBox="0 0 8 6"><path d="M0 0l3.200 2.700L0 5.400zM4.200 0l3.200 2.700-3.200 2.700z" fill="#d8d8d8"/></svg><svg style="left:1463px;top:109px" width="7" height="7" viewBox="0 0 7 7"><path d="M.8 .8l5.400 5.400M6.200 .8L.8 6.200" stroke="#d8d8d8" stroke-width="1.700"/></svg>
<div class="a" style="left:1407.5px;top:122px;width:20px;height:4px;background:repeating-linear-gradient(90deg,#3c3c3c 0 1px,transparent 1px 2px)"></div>
<svg style="left:1371px;top:134px" width="22" height="18" viewBox="0 0 22 18"><path d="M4.500 1.500c3-2 6.500-1 6 1.500-.3 1.500-2.500 2-4 3 3 .5 5 1.500 5.500 4 .5 3-2.500 5.500-6 5-2-.3-4-1.500-4.500-3l3-1c.5 1 2 1.500 3 .800-1-2-5.500-2.500-5.500-6C2 3.500 3 2.300 4.500 1.500z" fill="#c6c6c6"/><path d="M11 6.500l2.500-2.200h6v4.400h-6z" fill="#c6c6c6" stroke="#535353" stroke-width=".6"/><path d="M15 6.500h3" stroke="#535353" stroke-width="1.200"/></svg>
<div class="t" style="left:1398px;top:137.75px;font-size:10.6px;color:#ececec;transform:scaleX(0.99);transform-origin:0 0;font-weight:bold">Script Label</div>
<svg style="left:1369px;top:161px" width="24" height="21" viewBox="0 0 24 21"><path d="M0 6h5M3 3.500L5.500 6 3 8.500" fill="none" stroke="#c6c6c6" stroke-width="1.600"/><path d="M7 1h6l3 3v9H7z" fill="#c6c6c6"/><path d="M8 3l6 8M14 3l-6 8" stroke="#535353" stroke-width="1.100"/><circle cx="17" cy="15.500" r="3.200" fill="none" stroke="#c6c6c6" stroke-width="2.200"/><path d="M17 10.500v10M12 15.500h10M13.500 12l7 7M20.500 12l-7 7" stroke="#c6c6c6" stroke-width="1.500"/><circle cx="17" cy="15.500" r="1.500" fill="#535353"/></svg>
<div class="t" style="left:1398px;top:165.75px;font-size:10.6px;color:#ececec;transform:scaleX(0.99);transform-origin:0 0;font-weight:bold">Data Merge</div>
<svg style="left:1373px;top:190px" width="16" height="18" viewBox="0 0 16 18"><path d="M4.500 1.500c3-2 6.500-1 6 1.500-.3 1.500-2.500 2-4 3 3 .5 5 1.500 5.500 4 .5 3-2.500 5.500-6 5-2-.3-4-1.500-4.500-3l3-1c.5 1 2 1.500 3 .800-1-2-5.500-2.500-5.500-6C2 3.500 3 2.300 4.500 1.500z" fill="#c6c6c6"/></svg>
<div class="t" style="left:1398px;top:193.45px;font-size:10.6px;color:#ececec;transform:scaleX(0.99);transform-origin:0 0;font-weight:bold">Scripts</div>
<div class="a" style="left:1360.5px;top:215px;width:115px;height:1px;background:#3b3b3b"></div>
<div class="a" style="left:1407.5px;top:219.5px;width:20px;height:4px;background:repeating-linear-gradient(90deg,#3c3c3c 0 1px,transparent 1px 2px)"></div>
<div class="a" style="left:1372px;top:233.500px;width:17px;height:12px;background:linear-gradient(90deg,#d8d8d8,#555);border:1px solid #c6c6c6"></div>
<div class="t" style="left:1398px;top:234.45px;font-size:10.6px;color:#ececec;transform:scaleX(0.99);transform-origin:0 0;font-weight:bold">Gradient</div>
<div class="t" style="left:1371.5px;top:258px;font-size:20px;color:#c6c6c6;font-family:'Liberation Serif';font-style:italic">A</div>
<div class="t" style="left:1398px;top:262.45px;font-size:10.6px;color:#ececec;transform:scaleX(0.99);transform-origin:0 0;font-weight:bold">Glyphs</div>
<div class="a" style="left:1360.5px;top:284px;width:115px;height:1px;background:#3b3b3b"></div>
<div class="a" style="left:1407.5px;top:288.5px;width:20px;height:4px;background:repeating-linear-gradient(90deg,#3c3c3c 0 1px,transparent 1px 2px)"></div>
<div class="t" style="left:1372.5px;top:298px;font-size:18px;color:#c6c6c6;transform:scaleX(0.9);transform-origin:0 0;font-style:italic;letter-spacing:-.5px;-webkit-text-stroke:0">fx</div>
<div class="t" style="left:1398px;top:303.45px;font-size:10.6px;color:#ececec;transform:scaleX(0.99);transform-origin:0 0;font-weight:bold">Effects</div>
<svg style="left:1371px;top:329px" width="20" height="16" viewBox="0 0 20 16"><path d="M10 .5C4 .5 .5 4 .5 8.500c0 4 3.500 7 8 7 2 0 2.500-1.200 2-2.300-.6-1.300.4-2.700 2.300-2.500 3.500.4 6.700-1 6.700-4C19.500 3 15.500.5 10 .5z" fill="#c6c6c6"/><circle cx="5" cy="7" r="1.500" fill="#535353"/><circle cx="8.500" cy="4" r="1.500" fill="#535353"/><circle cx="13" cy="4" r="1.500" fill="#535353"/><circle cx="5.500" cy="11" r="1.500" fill="#535353"/><circle cx="16" cy="7" r="1.300" fill="#535353"/></svg>
<div class="t" style="left:1398px;top:331.45px;font-size:10.6px;color:#ececec;transform:scaleX(0.99);transform-origin:0 0;font-weight:bold">Color</div>
<div class="a" style="left:1753px;top:459px;width:39px;height:54.5px;background:#3a3a3a;border-radius:5px 5px 0 0;box-shadow:1px 2px 5px rgba(0,0,0,.35);"></div><div class="a" style="left:1754px;top:460px;width:37px;height:52.5px;background:#535353;border-radius:4px 4px 0 0"></div><div class="a" style="left:1754px;top:460px;width:37px;height:12px;background:#424242;border-radius:4px 4px 0 0"></div><div class="a" style="left:1754px;top:472px;width:37px;height:1px;background:#3b3b3b"></div><svg style="left:1761px;top:462.5px" width="8" height="6" viewBox="0 0 8 6"><path d="M0 0l3.200 2.700L0 5.400zM4.200 0l3.200 2.700-3.200 2.700z" fill="#d8d8d8"/></svg><svg style="left:1779.5px;top:462px" width="7" height="7" viewBox="0 0 7 7"><path d="M.8 .8l5.400 5.400M6.200 .8L.8 6.200" stroke="#d8d8d8" stroke-width="1.700"/></svg>
<div class="a" style="left:1763.5px;top:476px;width:18px;height:4px;background:repeating-linear-gradient(90deg,#3c3c3c 0 1px,transparent 1px 2px)"></div>
<svg style="left:1765px;top:490px" width="15" height="12" viewBox="0 0 15 12"><rect x=".5" y=".5" width="14" height="11" fill="#8a8a8a" stroke="#c6c6c6" stroke-width="1"/><path d="M.5 5.500h14M5 .5v11M10 .5v11" stroke="#c6c6c6" stroke-width="1"/><rect x="5.500" y="1" width="4" height="4" fill="#c6c6c6"/><rect x="10.500" y="6" width="3.500" height="5" fill="#c6c6c6"/><rect x="1" y="6" width="3.500" height="5" fill="#c6c6c6"/></svg>
<!-- p08_dock.py -->
<div class="a" style="left:2072px;top:106px;width:240px;height:929.500px;background:#535353;box-shadow:-1px 0 0 #3a3a3a,0 1px 0 #3a3a3a"></div>
<div class="a" style="left:2072px;top:106px;width:240px;height:12px;background:#424242;border-radius:4px 0 0 0"></div>
<svg style="left:2282px;top:108.5px" width="8" height="6" viewBox="0 0 8 6"><path d="M3.200 0L0 2.700l3.200 2.700zM7.400 0L4.200 2.700l3.200 2.700z" fill="#d8d8d8"/></svg>
<svg style="left:2301.5px;top:108px" width="7" height="7" viewBox="0 0 7 7"><path d="M.8 .8l5.400 5.400M6.200 .8L.8 6.200" stroke="#d8d8d8" stroke-width="1.700"/></svg>
<div class="a" style="left:2072.5px;top:118px;width:239.5px;height:27px;background:#424242"></div><div class="a" style="left:2072.5px;top:118px;width:84.5px;height:28px;background:#535353"></div><svg style="left:2080.5px;top:126.5px" width="6" height="10" viewBox="0 0 6 10"><path d="M.7 3.700L3 1l2.300 2.700M.7 6.300L3 9l2.300-2.700" fill="none" stroke="#cdcdcd" stroke-width="1"/></svg><div class="t" style="left:2091px;top:126.95px;font-size:10.6px;color:#ececec;transform:scaleX(0.99);transform-origin:0 0;font-weight:bold;letter-spacing:0">Paragraph</div><svg style="left:2294px;top:128px" width="10" height="8" viewBox="0 0 10 8"><path d="M0 .5h10M0 2.500h10M0 4.500h10M0 6.500h10" stroke="#cdcdcd" stroke-width="1"/></svg>
<div class="a" style="left:2126.500px;top:151.500px;width:22px;height:22px;background:#5c5c5c;border-radius:3px"></div>
<svg style="left:2083px;top:156px" width="15" height="15" viewBox="0 0 15 15"><path d="M0 0.5H15" stroke="#b4b4b4" stroke-width=".9"/><path d="M0 3.5H10" stroke="#b4b4b4" stroke-width=".9"/><path d="M0 6.5H15" stroke="#b4b4b4" stroke-width=".9"/><path d="M0 9.5H10" stroke="#b4b4b4" stroke-width=".9"/><path d="M0 12.5H15" stroke="#b4b4b4" stroke-width=".9"/></svg>
<svg style="left:2106px;top:156px" width="15" height="15" viewBox="0 0 15 15"><path d="M0 0.5H15" stroke="#b4b4b4" stroke-width=".9"/><path d="M2.5 3.5H12.5" stroke="#b4b4b4" stroke-width=".9"/><path d="M0 6.5H15" stroke="#b4b4b4" stroke-width=".9"/><path d="M2.5 9.5H12.5" stroke="#b4b4b4" stroke-width=".9"/><path d="M0 12.5H15" stroke="#b4b4b4" stroke-width=".9"/></svg>
<svg style="left:2130px;top:156px" width="15" height="15" viewBox="0 0 15 15"><path d="M0 0.5H15" stroke="#b4b4b4" stroke-width=".9"/><path d="M5 3.5H15" stroke="#b4b4b4" stroke-width=".9"/><path d="M0 6.5H15" stroke="#b4b4b4" stroke-width=".9"/><path d="M5 9.5H15" stroke="#b4b4b4" stroke-width=".9"/><path d="M0 12.5H15" stroke="#b4b4b4" stroke-width=".9"/></svg>
<svg style="left:2161px;top:156px" width="15" height="15" viewBox="0 0 15 15"><path d="M0 0.5H15" stroke="#b4b4b4" stroke-width=".9"/><path d="M0 3.5H15" stroke="#b4b4b4" stroke-width=".9"/><path d="M0 6.5H15" stroke="#b4b4b4" stroke-width=".9"/><path d="M0 9.5H15" stroke="#b4b4b4" stroke-width=".9"/><path d="M0 12.5H9" stroke="#b4b4b4" stroke-width=".9"/></svg>
<svg style="left:2185px;top:156px" width="15" height="15" viewBox="0 0 15 15"><path d="M0 0.5H15" stroke="#b4b4b4" stroke-width=".9"/><path d="M0 3.5H15" stroke="#b4b4b4" stroke-width=".9"/><path d="M0 6.5H15" stroke="#b4b4b4" stroke-width=".9"/><path d="M0 9.5H15" stroke="#b4b4b4" stroke-width=".9"/><path d="M3 12.5H12" stroke="#b4b4b4" stroke-width=".9"/></svg>
<svg style="left:2209px;top:156px" width="15" height="15" viewBox="0 0 15 15"><path d="M0 0.5H15" stroke="#b4b4b4" stroke-width=".9"/><path d="M0 3.5H15" stroke="#b4b4b4" stroke-width=".9"/><path d="M0 6.5H15" stroke="#b4b4b4" stroke-width=".9"/><path d="M0 9.5H15" stroke="#b4b4b4" stroke-width=".9"/><path d="M6 12.5H15" stroke="#b4b4b4" stroke-width=".9"/></svg>
<svg style="left:2233px;top:156px" width="15" height="15" viewBox="0 0 15 15"><path d="M0 0.5H15" stroke="#b4b4b4" stroke-width=".9"/><path d="M0 3.5H15" stroke="#b4b4b4" stroke-width=".9"/><path d="M0 6.5H15" stroke="#b4b4b4" stroke-width=".9"/><path d="M0 9.5H15" stroke="#b4b4b4" stroke-width=".9"/><path d="M0 12.5H15" stroke="#b4b4b4" stroke-width=".9"/></svg>
<svg style="left:2264px;top:156px" width="15" height="15" viewBox="0 0 15 15"><path d="M0 0.5H12" stroke="#b4b4b4" stroke-width=".9"/><path d="M3 3.5H12" stroke="#b4b4b4" stroke-width=".9"/><path d="M0 6.5H12" stroke="#b4b4b4" stroke-width=".9"/><path d="M3 9.5H12" stroke="#b4b4b4" stroke-width=".9"/><path d="M0 12.5H12" stroke="#b4b4b4" stroke-width=".9"/><path d="M14.500 -.5v14" stroke="#c6c6c6" stroke-width="1"/></svg>
<svg style="left:2288px;top:156px" width="15" height="15" viewBox="0 0 15 15"><path d="M0 0.5H12" stroke="#b4b4b4" stroke-width=".9"/><path d="M0 3.5H9" stroke="#b4b4b4" stroke-width=".9"/><path d="M0 6.5H12" stroke="#b4b4b4" stroke-width=".9"/><path d="M0 9.5H9" stroke="#b4b4b4" stroke-width=".9"/><path d="M0 12.5H12" stroke="#b4b4b4" stroke-width=".9"/><path d="M14.500 -.5v14" stroke="#c6c6c6" stroke-width="1"/></svg>
<svg style="left:2081px;top:183px" width="18" height="14" viewBox="0 0 18 14"><path d="M0 2l5 4.500L0 11z" fill="#8e8e8e"/><path d="M12 1v13M15.500 1v13M16.500 1H11a3.500 3.500 0 0 0 0 7h1" fill="#9a9a9a" stroke="#9a9a9a" stroke-width="1.200"/></svg>
<div class="a" style="left:2102.500px;top:179px;width:23px;height:22px;background:#5c5c5c;border-radius:3px"></div>
<svg style="left:2105px;top:183px" width="18" height="14" viewBox="0 0 18 14"><path d="M18 2l-5 4.500 5 4.500z" fill="#a4a4a4"/><path d="M5 1v13M8.500 1v13M9.500 1H4a3.500 3.500 0 0 0 0 7h1" fill="#b4b4b4" stroke="#b4b4b4" stroke-width="1.200"/></svg>
<svg style="left:2196px;top:182px" width="20" height="17" viewBox="0 0 20 17"><path d="M4 1.500h12M6 0L4 1.500 6 3M14 0l2 1.500L14 3" fill="none" stroke="#c6c6c6" stroke-width="1.100"/><path d="M1.500 15c-1.500-3 .5-6 2.500-6.500M4 12.500c2 1 4 0 4.500-1.500.5 1.500 2 2 3.500 1.500 1.500-.5 2-2 1.500-3.500M13.500 9c2-1 4.500.5 4 2.500-.3 1.200-2 1.500-3.500 1" fill="none" stroke="#c6c6c6" stroke-width="1.300"/></svg>
<div class="a" style="left:2221px;top:180.5px;width:86.5px;height:20.500px;background:#5e5e5e;border-radius:2px"></div><div class="t" style="left:2226px;top:185.85px;font-size:9.8px;color:#d2d2d2;transform:scaleX(1.03);transform-origin:0 0;">None</div><svg style="left:2294px;top:188.5px" width="9" height="5" viewBox="0 0 9 5"><path d="M.6 .6L4.500 4.200 8.400 .6" fill="none" stroke="#c0c0c0" stroke-width="1.100"/></svg>
<div class="a" style="left:2077.5px;top:207.5px;width:229.5px;height:1px;background:#474747"></div>
<svg style="left:2079px;top:216px" width="16" height="16" viewBox="0 0 16 16"><path d="M0 7h5.500M3.500 4.500L6 7 3.500 9.500" fill="none" stroke="#c6c6c6" stroke-width="1.100"/><path d="M8.500 0v14" stroke="#c6c6c6"/><path d="M10 1.500h6M10 4.500h5M10 7.500h6M10 10.500h5M10 13.500h6" stroke="#c6c6c6" stroke-width="1"/></svg>
<div class="a" style="left:2100px;top:213.5px;width:86.5px;height:20.500px;background:#5e5e5e;border-radius:2px"></div><div class="a" style="left:2116.5px;top:213.5px;width:1px;height:20.500px;background:#535353"></div><svg style="left:2104px;top:217.25px" width="9" height="13" viewBox="0 0 9 13"><path d="M.7 3.400L4.500 .6l3.800 2.800M.7 9.600l3.800 2.800 3.800-2.800" fill="none" stroke="#b8b8b8" stroke-width="1"/></svg><div class="t" style="left:2121.5px;top:218.85px;font-size:9.8px;color:#d2d2d2;transform:scaleX(1.03);transform-origin:0 0;">0 mm</div>
<svg style="left:2200px;top:216px" width="16" height="16" viewBox="0 0 16 16"><path d="M16 7h-5.500M12.500 4.500L10 7l2.500 2.500" fill="none" stroke="#c6c6c6" stroke-width="1.100"/><path d="M7.500 0v14" stroke="#c6c6c6"/><path d="M0 1.500h6M0 4.500h5M0 7.500h6M0 10.500h5M0 13.500h6" stroke="#c6c6c6" stroke-width="1"/></svg>
<div class="a" style="left:2221px;top:213.5px;width:86.5px;height:20.500px;background:#5e5e5e;border-radius:2px"></div><div class="a" style="left:2237.5px;top:213.5px;width:1px;height:20.500px;background:#535353"></div><svg style="left:2225px;top:217.25px" width="9" height="13" viewBox="0 0 9 13"><path d="M.7 3.400L4.500 .6l3.800 2.800M.7 9.600l3.800 2.800 3.800-2.800" fill="none" stroke="#b8b8b8" stroke-width="1"/></svg><div class="t" style="left:2242.5px;top:218.85px;font-size:9.8px;color:#d2d2d2;transform:scaleX(1.03);transform-origin:0 0;">0 mm</div>
<svg style="left:2079px;top:242px" width="16" height="16" viewBox="0 0 16 16"><path d="M0 2.500h5M3 0l2.500 2.500L3 5" fill="none" stroke="#c6c6c6" stroke-width="1.100"/><path d="M8 2.500h8M5 5.500h11M5 8.500h11M5 11.500h11M5 14.500h9" stroke="#c6c6c6" stroke-width="1"/></svg>
<div class="a" style="left:2100px;top:239.5px;width:86.5px;height:20.500px;background:#5e5e5e;border-radius:2px"></div><div class="a" style="left:2116.5px;top:239.5px;width:1px;height:20.500px;background:#535353"></div><svg style="left:2104px;top:243.25px" width="9" height="13" viewBox="0 0 9 13"><path d="M.7 3.400L4.500 .6l3.800 2.800M.7 9.600l3.800 2.800 3.800-2.800" fill="none" stroke="#b8b8b8" stroke-width="1"/></svg><div class="t" style="left:2121.5px;top:244.85px;font-size:9.8px;color:#d2d2d2;transform:scaleX(1.03);transform-origin:0 0;">0 mm</div>
<svg style="left:2200px;top:242px" width="16" height="16" viewBox="0 0 16 16"><path d="M0 1.500h11M0 4.500h11M0 7.500h11M0 10.500h9" stroke="#c6c6c6" stroke-width="1"/><path d="M16 13h-5M13 10.500L10.500 13l2.500 2.500" fill="none" stroke="#c6c6c6" stroke-width="1.100"/></svg>
<div class="a" style="left:2221px;top:239.5px;width:86.5px;height:20.500px;background:#5e5e5e;border-radius:2px"></div><div class="a" style="left:2237.5px;top:239.5px;width:1px;height:20.500px;background:#535353"></div><svg style="left:2225px;top:243.25px" width="9" height="13" viewBox="0 0 9 13"><path d="M.7 3.400L4.500 .6l3.800 2.800M.7 9.600l3.800 2.800 3.800-2.800" fill="none" stroke="#b8b8b8" stroke-width="1"/></svg><div class="t" style="left:2242.5px;top:244.85px;font-size:9.8px;color:#d2d2d2;transform:scaleX(1.03);transform-origin:0 0;">0 mm</div>
<svg style="left:2079px;top:274px" width="16" height="16" viewBox="0 0 16 16"><path d="M0 2.500h5M3 0l2.500 2.500L3 5" fill="none" stroke="#c6c6c6" stroke-width="1.100"/><rect x="7.500" y="1" width="8" height="4" fill="none" stroke="#c6c6c6"/><path d="M5 8.500h11M5 11.500h11M5 14.500h8" stroke="#c6c6c6" stroke-width="1"/></svg>
<div class="a" style="left:2100px;top:271.5px;width:86.5px;height:20.500px;background:#5e5e5e;border-radius:2px"></div><div class="a" style="left:2116.5px;top:271.5px;width:1px;height:20.500px;background:#535353"></div><svg style="left:2104px;top:275.25px" width="9" height="13" viewBox="0 0 9 13"><path d="M.7 3.400L4.500 .6l3.800 2.800M.7 9.600l3.800 2.800 3.800-2.800" fill="none" stroke="#b8b8b8" stroke-width="1"/></svg><div class="t" style="left:2121.5px;top:276.85px;font-size:9.8px;color:#d2d2d2;transform:scaleX(1.03);transform-origin:0 0;">0 mm</div>
<svg style="left:2200px;top:274px" width="16" height="16" viewBox="0 0 16 16"><path d="M5 1.500h8M5 4.500h11M5 7.500h11" stroke="#c6c6c6" stroke-width="1"/><rect x="7.500" y="10.500" width="8" height="4" fill="none" stroke="#c6c6c6"/><path d="M0 12.500h5M3 10l2.500 2.500L3 15" fill="none" stroke="#c6c6c6" stroke-width="1.100"/></svg>
<div class="a" style="left:2221px;top:271.5px;width:86.5px;height:20.500px;background:#5e5e5e;border-radius:2px"></div><div class="a" style="left:2237.5px;top:271.5px;width:1px;height:20.500px;background:#535353"></div><svg style="left:2225px;top:275.25px" width="9" height="13" viewBox="0 0 9 13"><path d="M.7 3.400L4.500 .6l3.800 2.800M.7 9.600l3.800 2.800 3.800-2.800" fill="none" stroke="#b8b8b8" stroke-width="1"/></svg><div class="t" style="left:2242.5px;top:276.85px;font-size:9.8px;color:#d2d2d2;transform:scaleX(1.03);transform-origin:0 0;">0 mm</div>
<div class="a" style="left:2077.5px;top:265.5px;width:229.5px;height:1px;background:#474747"></div>
<svg style="left:2079px;top:301px" width="16" height="16" viewBox="0 0 16 16"><path d="M0 8.500h5M3 6l2.500 2.500L3 11" fill="none" stroke="#c6c6c6" stroke-width="1.100"/><path d="M6 1.500h10M6 4.500h10" stroke="#c6c6c6" stroke-width="1"/><rect x="7.500" y="7.500" width="8" height="4.500" fill="none" stroke="#c6c6c6"/><path d="M6 14.500h10" stroke="#c6c6c6" stroke-width="1"/></svg>
<div class="a" style="left:2100px;top:298.5px;width:86.5px;height:20.500px;background:#5e5e5e;border-radius:2px"></div><div class="a" style="left:2116.5px;top:298.5px;width:1px;height:20.500px;background:#535353"></div><svg style="left:2104px;top:302.25px" width="9" height="13" viewBox="0 0 9 13"><path d="M.7 3.400L4.500 .6l3.800 2.800M.7 9.600l3.800 2.800 3.800-2.800" fill="none" stroke="#b8b8b8" stroke-width="1"/></svg><div class="t" style="left:2121.5px;top:303.85px;font-size:9.8px;color:#d2d2d2;transform:scaleX(1.03);transform-origin:0 0;">Ignore</div><svg style="left:2173px;top:306.5px" width="9" height="5" viewBox="0 0 9 5"><path d="M.6 .6L4.500 4.200 8.400 .6" fill="none" stroke="#c0c0c0" stroke-width="1.100"/></svg>
<div class="a" style="left:2077.5px;top:323.5px;width:229.5px;height:1px;background:#474747"></div>
<svg style="left:2079px;top:331.5px" width="16" height="16" viewBox="0 0 16 16"><path d="M1.500 0v5M0 1.500L1.500 0 3 1.500M0 3.500L1.500 5 3 3.500" fill="none" stroke="#c6c6c6" stroke-width=".9"/><path d="M5 7L7.500 0 10 7M6 4.500h3" fill="none" stroke="#c6c6c6" stroke-width="1.100"/><path d="M12 1.500h4M12 4.500h4M12 7.500h4M0 10.500h16M0 13.500h16" stroke="#c6c6c6" stroke-width="1"/></svg>
<div class="a" style="left:2100px;top:329px;width:86.5px;height:20.500px;background:#5e5e5e;border-radius:2px"></div><div class="a" style="left:2116.5px;top:329px;width:1px;height:20.500px;background:#535353"></div><svg style="left:2104px;top:332.75px" width="9" height="13" viewBox="0 0 9 13"><path d="M.7 3.400L4.500 .6l3.800 2.800M.7 9.600l3.800 2.800 3.800-2.800" fill="none" stroke="#b8b8b8" stroke-width="1"/></svg><div class="t" style="left:2121.5px;top:334.35px;font-size:9.8px;color:#d2d2d2;transform:scaleX(1.03);transform-origin:0 0;">0</div>
<svg style="left:2200px;top:331.5px" width="16" height="16" viewBox="0 0 16 16"><path d="M0 7L2.500 0 5 7M1 4.500h3" fill="none" stroke="#c6c6c6" stroke-width="1.100"/><path d="M6 3.500h4M8 1.500v4" stroke="#c6c6c6" stroke-width="1"/><path d="M11.500 1.500H16M11.500 4.500H16M11.500 7.500H16M0 10.500h16M0 13.500h16" stroke="#c6c6c6" stroke-width="1"/></svg>
<div class="a" style="left:2221px;top:329px;width:86.5px;height:20.500px;background:#5e5e5e;border-radius:2px"></div><div class="a" style="left:2237.5px;top:329px;width:1px;height:20.500px;background:#535353"></div><svg style="left:2225px;top:332.75px" width="9" height="13" viewBox="0 0 9 13"><path d="M.7 3.400L4.500 .6l3.800 2.800M.7 9.600l3.800 2.800 3.800-2.800" fill="none" stroke="#b8b8b8" stroke-width="1"/></svg><div class="t" style="left:2242.5px;top:334.35px;font-size:9.8px;color:#d2d2d2;transform:scaleX(1.03);transform-origin:0 0;">0</div>
<div class="a" style="left:2077.5px;top:355.5px;width:229.5px;height:1px;background:#474747"></div>
<div class="a" style="left:2079.5px;top:371.5px;width:11.500px;height:11.500px;border:1px solid #7c7c7c;border-radius:2px;background:#505050"></div>
<div class="t" style="left:2097px;top:372.35px;font-size:9.8px;color:#8c8c8c;transform:scaleX(1.03);transform-origin:0 0;">Shading</div>
<svg style="left:2201px;top:369.5px" width="16" height="16" viewBox="0 0 16 16"><rect x=".5" y=".5" width="15" height="15" fill="#9a9a9a" stroke="#bdbdbd"/><path d="M1 1h4.600v4.600H1zM10.400 1H15v4.600h-4.600zM5.700 5.700h4.600v4.600H5.700zM1 10.400h4.600V15H1zM10.400 10.400H15V15h-4.600z" fill="#c8c8c8"/><path d="M5.600 1v14M10.400 1v14M1 5.600h14M1 10.400h14" stroke="#6a6a6a" stroke-width=".6"/></svg>
<div class="a" style="left:2220px;top:368px;width:87.500px;height:19.500px;background:#5e5e5e;border-radius:2px"></div><div class="a" style="left:2220px;top:368px;width:69px;height:19.500px;background:#e2e2e2;border-radius:2px 0 0 2px"></div><div class="a" style="left:2224px;top:372px;width:11.500px;height:11.500px;background:#3c3c3c"></div><div class="t" style="left:2239px;top:372.85px;font-size:9.8px;color:#7a7a7a;transform:scaleX(1.03);transform-origin:0 0;">[Black]</div><svg style="left:2294px;top:375.5px" width="9" height="5" viewBox="0 0 9 5"><path d="M.6 .6L4.500 4.200 8.400 .6" fill="none" stroke="#c0c0c0" stroke-width="1.100"/></svg>
<div class="a" style="left:2079.5px;top:404.5px;width:11.500px;height:11.500px;border:1px solid #7c7c7c;border-radius:2px;background:#505050"></div>
<div class="t" style="left:2097px;top:405.35px;font-size:9.8px;color:#8c8c8c;transform:scaleX(1.03);transform-origin:0 0;">Border</div>
<svg style="left:2201px;top:403px" width="16" height="16" viewBox="0 0 16 16"><path d="M1 16V4a3 3 0 0 1 3-3h12M5.500 16V8.500a3 3 0 0 1 3-3H16M10 16v-4a2 2 0 0 1 2-2h4" fill="none" stroke="#c0c0c0" stroke-width="1.500"/></svg>
<div class="a" style="left:2220px;top:401px;width:87.500px;height:19.500px;background:#5e5e5e;border-radius:2px"></div><div class="a" style="left:2220px;top:401px;width:69px;height:19.500px;background:#e2e2e2;border-radius:2px 0 0 2px"></div><div class="a" style="left:2224px;top:405px;width:11.500px;height:11.500px;background:#3c3c3c"></div><div class="t" style="left:2239px;top:405.85px;font-size:9.8px;color:#7a7a7a;transform:scaleX(1.03);transform-origin:0 0;">[Black]</div><svg style="left:2294px;top:408.5px" width="9" height="5" viewBox="0 0 9 5"><path d="M.6 .6L4.500 4.200 8.400 .6" fill="none" stroke="#c0c0c0" stroke-width="1.100"/></svg>
<div class="a" style="left:2077.5px;top:432.5px;width:229.5px;height:1px;background:#474747"></div>
<div class="a" style="left:2079.5px;top:444.5px;width:11.500px;height:11.500px;border:1px solid #7c7c7c;border-radius:2px;background:#6e6e6e"></div><svg style="left:2081px;top:446.5px" width="9" height="8" viewBox="0 0 9 8"><path d="M1 4l2.500 2.800L8 1" fill="none" stroke="#a8a8a8" stroke-width="1.500"/></svg>
<div class="t" style="left:2097px;top:445.35px;font-size:9.8px;color:#8c8c8c;transform:scaleX(1.03);transform-origin:0 0;">Hyphenate</div>
<div class="a" style="left:2257.500px;top:439.500px;width:22.500px;height:22px;background:#5a5a5a;border-radius:3px"></div>
<svg style="left:2261px;top:445px" width="16" height="10" viewBox="0 0 16 10"><path d="M0 1H6.5" stroke="#8e8e8e" stroke-width="1"/><path d="M0 4H6.5" stroke="#8e8e8e" stroke-width="1"/><path d="M0 7H6.5" stroke="#8e8e8e" stroke-width="1"/><path d="M9 3H16" stroke="#8e8e8e" stroke-width="1"/><path d="M9 6H16" stroke="#8e8e8e" stroke-width="1"/><path d="M9 9H16" stroke="#8e8e8e" stroke-width="1"/></svg>
<svg style="left:2289px;top:447px" width="14" height="8" viewBox="0 0 14 8"><path d="M0 1H6" stroke="#9a9a9a" stroke-width="1"/><path d="M0 4H6" stroke="#9a9a9a" stroke-width="1"/><path d="M0 7H6" stroke="#9a9a9a" stroke-width="1"/><path d="M8 1H14" stroke="#9a9a9a" stroke-width="1"/><path d="M8 4H14" stroke="#9a9a9a" stroke-width="1"/><path d="M8 7H14" stroke="#9a9a9a" stroke-width="1"/></svg>
<div class="a" style="left:2072.5px;top:468.500px;width:239.5px;height:2.500px;background:#3e3e3e"></div>
<div class="a" style="left:2072.5px;top:471px;width:239.5px;height:26px;background:#424242"></div><div class="a" style="left:2072.5px;top:471px;width:61.5px;height:27px;background:#535353"></div><svg style="left:2080.5px;top:479px" width="6" height="10" viewBox="0 0 6 10"><path d="M.7 3.700L3 1l2.300 2.700M.7 6.300L3 9l2.300-2.700" fill="none" stroke="#cdcdcd" stroke-width="1"/></svg><div class="t" style="left:2091px;top:479.45px;font-size:10.6px;color:#ececec;transform:scaleX(0.99);transform-origin:0 0;font-weight:bold;letter-spacing:0">Index</div><svg style="left:2294px;top:481px" width="10" height="8" viewBox="0 0 10 8"><path d="M0 .5h10M0 2.500h10M0 4.500h10M0 6.500h10" stroke="#cdcdcd" stroke-width="1"/></svg>
<div class="a" style="left:2080px;top:509.500px;width:11px;height:11px;border-radius:50%;background:#d2d2d2"></div><div class="a" style="left:2083.500px;top:513px;width:4px;height:4px;border-radius:50%;background:#444"></div>
<div class="t" style="left:2098px;top:510.35px;font-size:9.8px;color:#e2e2e2;transform:scaleX(1.03);transform-origin:0 0;">Reference</div>
<div class="a" style="left:2159.500px;top:509.500px;width:11.500px;height:11.500px;border-radius:50%;border:1px solid #d0d0d0;background:#4e4e4e"></div>
<div class="t" style="left:2178px;top:510.35px;font-size:9.8px;color:#e2e2e2;transform:scaleX(1.03);transform-origin:0 0;">Topic</div>
<div class="a" style="left:2244.5px;top:508.5px;width:11.500px;height:11.500px;border:1px solid #7c7c7c;border-radius:2px;background:#505050"></div>
<div class="t" style="left:2262px;top:509.85px;font-size:9.8px;color:#7e7e7e;transform:scaleX(1.03);transform-origin:0 0;">Book</div>
<div class="a" style="left:2072.5px;top:528px;width:239.5px;height:1px;background:#474747"></div>
<div class="a" style="left:2072.5px;top:813.5px;width:239.5px;height:1px;background:#474747"></div>
<svg style="left:2158px;top:820px" width="17" height="13" viewBox="0 0 17 13"><path d="M0 7h7M4.500 4.500L7 7 4.500 9.500" fill="none" stroke="#8a8a8a" stroke-width="1.200"/><path d="M9 1h4l3 3v8H9V9M9 5V1" fill="none" stroke="#8a8a8a" stroke-width="1.100"/></svg>
<svg style="left:2188.5px;top:820px" width="13" height="13" viewBox="0 0 13 13"><path d="M1.500 5.500a5 5 0 0 1 9-2M11.500 7.500a5 5 0 0 1-9 2" fill="none" stroke="#8a8a8a" stroke-width="1.500"/><path d="M11.500 .5v3.500H8M1.500 12.500V9H5" fill="none" stroke="#8a8a8a" stroke-width="1.300"/></svg>
<svg style="left:2217.5px;top:821px" width="11" height="11" viewBox="0 0 11 11"><rect x=".6" y=".6" width="9.800" height="9.800" fill="none" stroke="#b0b0b0" stroke-width="1.100"/><path d="M2.500 3h4M2.500 5.500h6M4.500 8h4" stroke="#b0b0b0" stroke-width="1"/></svg>
<svg style="left:2245.5px;top:820.5px" width="11" height="11" viewBox="0 0 11 11"><rect x=".6" y=".6" width="9.800" height="9.800" fill="none" stroke="#d0d0d0" stroke-width="1.200"/><path d="M5.500 3v5M3 5.500h5" stroke="#d0d0d0" stroke-width="1.200"/></svg>
<svg style="left:2273.5px;top:820px" width="10" height="12" viewBox="0 0 10 12"><path d="M0 2.500h10M3.500 2.500V.8h3v1.700M1.200 2.500l.6 9h6.400l.6-9M3.700 4.500v5.500M5 4.500v5.500M6.300 4.500v5.500" fill="none" stroke="#8a8a8a" stroke-width="1"/></svg>
<div class="a" style="left:2072.5px;top:838.500px;width:239.5px;height:2.500px;background:#3e3e3e"></div>
<div class="a" style="left:2072.5px;top:841px;width:239.5px;height:26px;background:#424242"></div>
<div class="a" style="left:2119px;top:841px;width:1px;height:26px;background:#383838"></div>
<div class="a" style="left:2191.500px;top:841px;width:82px;height:27px;background:#535353"></div>
<div class="t" style="left:2085px;top:849.95px;font-size:10.6px;color:#9c9c9c;transform:scaleX(0.99);transform-origin:0 0;font-weight:bold">Table</div>
<div class="a" style="left:2120px;top:841px;width:71.500px;height:26px;overflow:hidden"><div class="t" style="left:11px;top:8.95px;font-size:10.6px;color:#9c9c9c;transform:scaleX(0.99);transform-origin:0 0;font-weight:bold">Table Styles</div></div>
<svg style="left:2198px;top:849px" width="6" height="10" viewBox="0 0 6 10"><path d="M.7 3.700L3 1l2.300 2.700M.7 6.300L3 9l2.300-2.700" fill="none" stroke="#cdcdcd" stroke-width="1"/></svg>
<div class="t" style="left:2208.5px;top:849.95px;font-size:10.6px;color:#ececec;transform:scaleX(0.99);transform-origin:0 0;font-weight:bold">Cell Styles</div>
<svg style="left:2296px;top:850px" width="10" height="8" viewBox="0 0 10 8"><path d="M0 .5h10M0 2.500h10M0 4.500h10M0 6.500h10" stroke="#cdcdcd" stroke-width="1"/></svg>
<div class="t" style="left:2078px;top:876.35px;font-size:9.8px;color:#e2e2e2;transform:scaleX(1.03);transform-origin:0 0;">[None]</div>
<svg style="left:2294.5px;top:873px" width="9" height="14" viewBox="0 0 9 14"><path d="M6 0L.5 8h3.700L2.500 14 8.500 5.500H5z" fill="#cdcdcd"/></svg>
<div class="a" style="left:2072.5px;top:893.500px;width:239.5px;height:21px;background:#4b6b8c"></div>
<div class="t" style="left:2111px;top:898.6px;font-size:10.3px;color:#f2f2f2;transform:scaleX(1.09);transform-origin:0 0;font-weight:bold">[None]</div>
<svg style="left:2274.5px;top:898px" width="12" height="12" viewBox="0 0 12 12"><path d="M1 11l2.500-.7L10.500 3.300 8.700 1.500 1.700 8.500z" fill="#e0e0e0"/><path d="M1 1l10 10" stroke="#e0e0e0" stroke-width="1.300"/><path d="M10.500 1L1 10.500" stroke="#4b6b8c" stroke-width=".6"/></svg>
<div class="a" style="left:2072.5px;top:1002.5px;width:239.5px;height:1px;background:#474747"></div>
<svg style="left:2164.5px;top:1010px" width="14" height="11" viewBox="0 0 14 11"><path d="M0 0h5l1 1.500h8V11H0z" fill="#bdbdbd"/></svg>
<svg style="left:2191px;top:1009.5px" width="18" height="12" viewBox="0 0 18 12"><rect x="3.500" y="3.500" width="7" height="7" fill="#3a3a3a" stroke="#8a8a8a"/><rect x=".5" y=".5" width="7" height="7" fill="#777" stroke="#9a9a9a"/><path d="M12.500 5h3a2.300 2.300 0 0 1 0 5h-2.500M14 3l-1.800 2 1.800 2" fill="none" stroke="#8a8a8a" stroke-width="1"/></svg>
<svg style="left:2218.5px;top:1010px" width="20" height="11" viewBox="0 0 20 11"><rect x=".6" y=".6" width="11" height="9.800" fill="none" stroke="#8a8a8a" stroke-width="1.100"/><path d="M.6 3h11M3.500 3v7.500" stroke="#8a8a8a" stroke-width="1"/><rect x="4" y="3.500" width="7" height="6.500" fill="#8a8a8a"/><path d="M13.500 8.500l5-6.500M14.500 3l3.500 4" stroke="#8a8a8a" stroke-width="1"/></svg>
<svg style="left:2251px;top:1010px" width="11" height="11" viewBox="0 0 11 11"><rect x=".6" y=".6" width="9.800" height="9.800" fill="none" stroke="#d0d0d0" stroke-width="1.200"/><path d="M5.500 3v5M3 5.500h5" stroke="#d0d0d0" stroke-width="1.200"/></svg>
<svg style="left:2278.5px;top:1009.5px" width="10" height="12" viewBox="0 0 10 12"><path d="M0 2.500h10M3.500 2.500V.8h3v1.700M1.200 2.500l.6 9h6.400l.6-9M3.700 4.500v5.500M5 4.500v5.500M6.300 4.500v5.500" fill="none" stroke="#8a8a8a" stroke-width="1"/></svg>
<div class="a" style="left:2072.5px;top:1027.500px;width:239.5px;height:1.500px;background:#3a3a3a"></div>
<div class="a" style="left:2072.5px;top:1029px;width:239.5px;height:6.500px;background:#4a4a4a"></div>
<div class="a" style="left:2182.5px;top:1030.5px;width:20px;height:4px;background:repeating-linear-gradient(90deg,#2e2e2e 0 1px,transparent 1px 2px)"></div>
<!-- p09_pages.py -->
<div class="a" style="left:2312px;top:106px;width:195px;height:1083.500px;background:#535353;box-shadow:-1px 0 0 #3a3a3a,0 1px 0 #3a3a3a"></div>
<div class="a" style="left:2312px;top:104px;width:234px;height:14px;background:#424242"></div>
<div class="a" style="left:2312px;top:114.500px;width:195px;height:3.500px;background:#363636"></div>
<div class="a" style="left:2312px;top:118px;width:195px;height:27px;background:#424242"></div>
<div class="a" style="left:2312px;top:118px;width:61px;height:28px;background:#535353"></div>
<svg style="left:2319px;top:127px" width="6" height="10" viewBox="0 0 6 10"><path d="M.7 3.700L3 1l2.300 2.700M.7 6.300L3 9l2.300-2.700" fill="none" stroke="#cdcdcd" stroke-width="1"/></svg>
<div class="t" style="left:2330px;top:127.45px;font-size:10.6px;color:#ececec;transform:scaleX(0.99);transform-origin:0 0;font-weight:bold">Pages</div>
<div class="a" style="left:2385px;top:119px;width:5.500px;height:26px;overflow:hidden"><div class="t" style="left:0px;top:8.45px;font-size:10.6px;color:#8a8a8a;transform:scaleX(0.99);transform-origin:0 0;font-weight:bold">L</div></div>
<div class="a" style="left:2402.5px;top:119px;width:5.500px;height:26px;overflow:hidden"><div class="t" style="left:0px;top:8.45px;font-size:10.6px;color:#8a8a8a;transform:scaleX(0.99);transform-origin:0 0;font-weight:bold">A</div></div>
<div class="a" style="left:2419.5px;top:119px;width:5.500px;height:26px;overflow:hidden"><div class="t" style="left:0px;top:8.45px;font-size:10.6px;color:#8a8a8a;transform:scaleX(0.99);transform-origin:0 0;font-weight:bold">P</div></div>
<div class="a" style="left:2436.5px;top:119px;width:5.500px;height:26px;overflow:hidden"><div class="t" style="left:0px;top:8.45px;font-size:10.6px;color:#8a8a8a;transform:scaleX(0.99);transform-origin:0 0;font-weight:bold">L</div></div>
<div class="a" style="left:2373px;top:118px;width:1px;height:27px;background:#383838"></div>
<div class="a" style="left:2390.5px;top:118px;width:1px;height:27px;background:#383838"></div>
<div class="a" style="left:2407.5px;top:118px;width:1px;height:27px;background:#383838"></div>
<div class="a" style="left:2424.5px;top:118px;width:1px;height:27px;background:#383838"></div>
<div class="a" style="left:2441.5px;top:118px;width:1px;height:27px;background:#383838"></div>
<svg style="left:2465.5px;top:128.5px" width="10" height="7" viewBox="0 0 10 7"><path d="M.8 .8l3 2.700-3 2.700M5.800 .8l3 2.700-3 2.700" fill="none" stroke="#d8d8d8" stroke-width="1.200"/></svg>
<div class="a" style="left:2482px;top:126px;width:1px;height:11px;background:#8a8a8a"></div>
<svg style="left:2490px;top:128px" width="10" height="8" viewBox="0 0 10 8"><path d="M0 .5h10M0 2.500h10M0 4.500h10M0 6.500h10" stroke="#cdcdcd" stroke-width="1"/></svg>
<div class="t" style="left:2315px;top:155.35px;font-size:9.8px;color:#e6e6e6;transform:scaleX(1.03);transform-origin:0 0;">[None]</div>
<div class="a" style="left:2467.500px;top:149.500px;width:17px;height:23px;background:#fff"></div>
<div class="t" style="left:2315px;top:184.35px;font-size:9.8px;color:#e6e6e6;transform:scaleX(1.03);transform-origin:0 0;">A-Master</div>
<div class="a" style="left:2450.500px;top:178.500px;width:16.500px;height:23px;background:#fff"></div><div class="a" style="left:2467.500px;top:178.500px;width:17px;height:23px;background:#fff"></div>
<div class="a" style="left:2493.500px;top:146px;width:13px;height:163px;background:#4e4e4e"></div>
<div class="a" style="left:2312px;top:309px;width:195px;height:1px;background:#484848"></div>
<svg style="left:2317.5px;top:321.5px" width="5" height="10" viewBox="0 0 5 10"><path d="M0 .5h5M0 2.500h5M0 4.500h5M0 6.500h5M0 8.500h5" stroke="#c6c6c6" stroke-width="1"/></svg>
<div class="t" style="left:2326px;top:321.95px;font-size:10.6px;color:#f0f0f0;transform:scaleX(0.99);transform-origin:0 0;font-weight:bold">Custom V</div>
<svg style="left:2382px;top:325px" width="7" height="4" viewBox="0 0 7 4"><path d="M0 0h7L3.500 4z" fill="#c6c6c6"/></svg>
<div class="a" style="left:2394px;top:314px;width:1px;height:25px;background:#666"></div>
<div class="a" style="left:2312px;top:341.500px;width:195px;height:1px;background:#484848"></div>
<div class="a" style="left:2312px;top:342px;width:181.500px;height:814px;overflow:hidden"><div class="a" style="left:-2312px;top:-342px;width:2560px;height:1440px">
<div class="a" style="left:2353px;top:327.5px;width:1px;height:46px;background:#9a9a9a"></div><div class="a" style="left:2328.75px;top:333.5px;width:24.6px;height:35px;background:#fff"></div><div class="a" style="left:2353.95px;top:333.5px;width:24.6px;height:35px;background:#fff"></div><svg style="left:2328.75px;top:333.5px" width="50.2" height="35" viewBox="0 0 50.2 35"><path d="M4.4 3.0H21.6" stroke="#444" stroke-width="1.8"/><path d="M4.4 5.1H21.6" stroke="#000" stroke-width="1.1"/><path d="M9.2 7.2H21.6" stroke="#333" stroke-width="1.8"/><path d="M9.2 10.0H21.6" stroke="#888" stroke-width="1.4"/><path d="M3.5 12.1H21.6" stroke="#000" stroke-width="1.4"/><path d="M3.5 14.9H21.6" stroke="#888" stroke-width="1.8"/><path d="M9.2 19.8H21.6" stroke="#888" stroke-width="1.1"/><path d="M2.5 22.2H21.6" stroke="#333" stroke-width="2.2"/><path d="M2.5 27.1H21.6" stroke="#000" stroke-width="1.8"/><path d="M2.5 29.5H21.6" stroke="#222" stroke-width="2.2"/><path d="M28.8 3.0H46.9" stroke="#000" stroke-width="1.8"/><path d="M29.7 5.4H46.9" stroke="#000" stroke-width="1.4"/><path d="M27.8 8.2H46.9" stroke="#000" stroke-width="1.8"/><path d="M27.8 13.0H46.9" stroke="#444" stroke-width="1.8"/><path d="M31.6 15.1H46.9" stroke="#666" stroke-width="1.1"/><path d="M27.8 17.9H46.9" stroke="#444" stroke-width="1.4"/><path d="M37.4 20.3H46.9" stroke="#888" stroke-width="1.1"/><path d="M27.8 23.1H46.9" stroke="#666" stroke-width="2.2"/><path d="M27.8 28.7H46.9" stroke="#444" stroke-width="1.4"/><path d="M28.8 30.8H46.9" stroke="#333" stroke-width="1.1"/></svg><div class="t" style="left:2320px;top:376.5px;width:62px;text-align:center;font-size:11px;color:#ececec;letter-spacing:-.35px">89-88</div>
<div class="a" style="left:2353px;top:391.5px;width:1px;height:46px;background:#9a9a9a"></div><div class="a" style="left:2328.75px;top:397.5px;width:24.6px;height:35px;background:#fff"></div><div class="a" style="left:2353.95px;top:397.5px;width:24.6px;height:35px;background:#fff"></div><svg style="left:2328.75px;top:397.5px" width="50.2" height="35" viewBox="0 0 50.2 35"><path d="M15.8 3.0H21.6" stroke="#222" stroke-width="1.8"/><path d="M15.8 7.9H21.6" stroke="#666" stroke-width="1.8"/><path d="M2.5 10.3H21.6" stroke="#888" stroke-width="1.8"/><path d="M3.5 17.3H21.6" stroke="#888" stroke-width="1.8"/><path d="M12.1 20.1H21.6" stroke="#000" stroke-width="1.4"/><path d="M6.3 22.5H21.6" stroke="#222" stroke-width="2.2"/><path d="M6.3 25.3H21.6" stroke="#333" stroke-width="1.8"/><path d="M4.4 27.7H21.6" stroke="#444" stroke-width="1.1"/><path d="M2.5 30.1H21.6" stroke="#000" stroke-width="2.2"/><path d="M32.0 5.1H39.9" stroke="#666" stroke-width="1.4"/><path d="M27.8 7.9H39.9" stroke="#888" stroke-width="1.4"/><path d="M31.6 10.3H46.9" stroke="#000" stroke-width="2.2"/><path d="M27.8 12.7H46.9" stroke="#000" stroke-width="2.2"/><path d="M31.6 14.8H46.9" stroke="#333" stroke-width="1.4"/><path d="M27.8 17.6H46.9" stroke="#333" stroke-width="1.4"/><path d="M34.5 22.5H46.9" stroke="#666" stroke-width="1.4"/><path d="M34.5 24.9H46.9" stroke="#222" stroke-width="1.8"/><path d="M29.7 27.3H46.9" stroke="#666" stroke-width="1.4"/><path d="M27.8 30.1H46.9" stroke="#222" stroke-width="2.2"/></svg><div class="t" style="left:2329.55px;top:398.5px;font-size:8.5px;color:#000;">A</div><div class="t" style="left:2371.45px;top:398.5px;font-size:8.5px;color:#000;">A</div><div class="t" style="left:2320px;top:440.5px;width:62px;text-align:center;font-size:11px;color:#ececec;letter-spacing:-.35px">91-90</div>
<div class="a" style="left:2353px;top:455.5px;width:1px;height:46px;background:#9a9a9a"></div><div class="a" style="left:2328.75px;top:461.5px;width:24.6px;height:35px;background:#fff"></div><div class="a" style="left:2353.95px;top:461.5px;width:24.6px;height:35px;background:#fff"></div><svg style="left:2328.75px;top:461.5px" width="50.2" height="35" viewBox="0 0 50.2 35"><path d="M10.0 3.0H21.6" stroke="#666" stroke-width="1.4"/><path d="M11.2 7.8H21.6" stroke="#444" stroke-width="1.1"/><path d="M4.4 10.2H21.6" stroke="#333" stroke-width="1.1"/><path d="M3.5 14.7H21.6" stroke="#222" stroke-width="1.1"/><path d="M9.2 16.8H21.6" stroke="#333" stroke-width="1.1"/><path d="M2.5 18.9H21.6" stroke="#333" stroke-width="2.2"/><path d="M4.4 21.3H21.6" stroke="#333" stroke-width="1.4"/><path d="M2.5 26.2H21.6" stroke="#666" stroke-width="1.4"/><path d="M12.1 28.3H21.6" stroke="#888" stroke-width="1.1"/><path d="M12.1 31.1H21.6" stroke="#888" stroke-width="2.2"/><path d="M33.9 3.0H39.9" stroke="#666" stroke-width="1.8"/><path d="M27.8 7.9H39.9" stroke="#666" stroke-width="2.2"/><path d="M29.7 10.3H46.9" stroke="#666" stroke-width="1.4"/><path d="M29.7 12.7H46.9" stroke="#666" stroke-width="1.4"/><path d="M27.8 15.1H46.9" stroke="#222" stroke-width="1.1"/><path d="M34.5 17.5H46.9" stroke="#666" stroke-width="1.1"/><path d="M37.4 19.6H46.9" stroke="#222" stroke-width="1.1"/><path d="M27.8 22.0H46.9" stroke="#222" stroke-width="1.1"/><path d="M37.4 24.1H46.9" stroke="#222" stroke-width="1.1"/><path d="M27.8 26.9H46.9" stroke="#000" stroke-width="2.2"/><path d="M34.5 29.7H46.9" stroke="#000" stroke-width="1.8"/></svg><div class="t" style="left:2329.55px;top:462.5px;font-size:8.5px;color:#000;">A</div><div class="t" style="left:2371.45px;top:462.5px;font-size:8.5px;color:#000;">A</div><div class="t" style="left:2320px;top:504.5px;width:62px;text-align:center;font-size:11px;color:#ececec;letter-spacing:-.35px">93-92</div>
<div class="a" style="left:2353px;top:519.5px;width:1px;height:46px;background:#9a9a9a"></div><div class="a" style="left:2328.75px;top:525.5px;width:24.6px;height:35px;background:#fff"></div><div class="a" style="left:2353.95px;top:525.5px;width:24.6px;height:35px;background:#fff"></div><svg style="left:2328.75px;top:525.5px" width="50.2" height="35" viewBox="0 0 50.2 35"><path d="M10.0 5.8H21.6" stroke="#000" stroke-width="1.8"/><path d="M10.0 8.6H21.6" stroke="#888" stroke-width="1.8"/><path d="M9.2 10.7H21.6" stroke="#000" stroke-width="1.1"/><path d="M12.1 12.8H21.6" stroke="#222" stroke-width="2.2"/><path d="M6.3 14.9H21.6" stroke="#666" stroke-width="1.8"/><path d="M12.1 17.0H21.6" stroke="#000" stroke-width="2.2"/><path d="M2.5 19.1H21.6" stroke="#000" stroke-width="1.4"/><path d="M4.4 21.2H21.6" stroke="#000" stroke-width="1.8"/><path d="M2.5 23.6H21.6" stroke="#444" stroke-width="1.1"/><path d="M3.5 26.4H21.6" stroke="#000" stroke-width="1.4"/><path d="M4.4 28.5H21.6" stroke="#222" stroke-width="1.8"/><path d="M12.1 31.3H21.6" stroke="#000" stroke-width="1.4"/><path d="M32.0 3.0H39.9" stroke="#222" stroke-width="1.4"/><path d="M32.0 7.5H39.9" stroke="#222" stroke-width="1.8"/><path d="M34.5 11.7H46.9" stroke="#222" stroke-width="1.4"/><path d="M29.7 13.8H46.9" stroke="#333" stroke-width="1.1"/><path d="M34.5 16.6H46.9" stroke="#888" stroke-width="2.2"/><path d="M27.8 19.4H46.9" stroke="#666" stroke-width="1.1"/><path d="M27.8 22.2H46.9" stroke="#000" stroke-width="1.1"/><path d="M27.8 24.6H46.9" stroke="#000" stroke-width="1.8"/><path d="M28.8 26.7H46.9" stroke="#888" stroke-width="1.4"/><path d="M27.8 29.5H46.9" stroke="#000" stroke-width="1.1"/></svg><div class="t" style="left:2329.55px;top:526.5px;font-size:8.5px;color:#000;">A</div><div class="t" style="left:2371.45px;top:526.5px;font-size:8.5px;color:#000;">A</div><div class="t" style="left:2320px;top:568.5px;width:62px;text-align:center;font-size:11px;color:#ececec;letter-spacing:-.35px">95-94</div>
<div class="a" style="left:2353px;top:583.5px;width:1px;height:46px;background:#9a9a9a"></div><div class="a" style="left:2328.75px;top:589.5px;width:24.6px;height:35px;background:#fff"></div><div class="a" style="left:2353.95px;top:589.5px;width:24.6px;height:35px;background:#fff"></div><svg style="left:2328.75px;top:589.5px" width="50.2" height="35" viewBox="0 0 50.2 35"><path d="M14.1 3.0H21.6" stroke="#666" stroke-width="1.8"/><path d="M10.0 7.5H21.6" stroke="#333" stroke-width="1.4"/><path d="M9.2 9.6H21.6" stroke="#222" stroke-width="1.1"/><path d="M2.5 11.7H21.6" stroke="#000" stroke-width="2.2"/><path d="M2.5 14.1H21.6" stroke="#888" stroke-width="1.8"/><path d="M6.3 16.5H21.6" stroke="#222" stroke-width="1.1"/><path d="M2.5 19.3H21.6" stroke="#666" stroke-width="1.1"/><path d="M6.3 21.4H21.6" stroke="#666" stroke-width="2.2"/><path d="M2.5 23.5H21.6" stroke="#333" stroke-width="2.2"/><path d="M3.5 25.6H21.6" stroke="#000" stroke-width="1.4"/><path d="M2.5 28.4H21.6" stroke="#888" stroke-width="1.1"/><path d="M9.2 30.8H21.6" stroke="#444" stroke-width="1.4"/><path d="M32.0 3.0H39.9" stroke="#444" stroke-width="1.8"/><path d="M30.2 5.4H39.9" stroke="#666" stroke-width="2.2"/><path d="M27.8 7.8H39.9" stroke="#000" stroke-width="1.4"/><path d="M27.8 13.0H46.9" stroke="#888" stroke-width="1.4"/><path d="M27.8 15.8H46.9" stroke="#000" stroke-width="1.4"/><path d="M31.6 17.9H46.9" stroke="#333" stroke-width="1.8"/><path d="M28.8 20.7H46.9" stroke="#222" stroke-width="1.1"/><path d="M27.8 22.8H46.9" stroke="#444" stroke-width="2.2"/><path d="M28.8 24.9H46.9" stroke="#222" stroke-width="2.2"/><path d="M31.6 27.7H46.9" stroke="#888" stroke-width="2.2"/><path d="M28.8 30.1H46.9" stroke="#888" stroke-width="1.4"/></svg><div class="t" style="left:2329.55px;top:590.5px;font-size:8.5px;color:#000;">A</div><div class="t" style="left:2371.45px;top:590.5px;font-size:8.5px;color:#000;">A</div><div class="t" style="left:2320px;top:632.5px;width:62px;text-align:center;font-size:11px;color:#ececec;letter-spacing:-.35px">97-96</div>
<div class="a" style="left:2353px;top:647.5px;width:1px;height:46px;background:#9a9a9a"></div><div class="a" style="left:2328.75px;top:653.5px;width:24.6px;height:35px;background:#fff"></div><div class="a" style="left:2353.95px;top:653.5px;width:24.6px;height:35px;background:#fff"></div><svg style="left:2328.75px;top:653.5px" width="50.2" height="35" viewBox="0 0 50.2 35"><path d="M15.8 5.1H21.6" stroke="#000" stroke-width="1.4"/><path d="M12.3 7.2H21.6" stroke="#222" stroke-width="1.1"/><path d="M9.2 16.9H21.6" stroke="#888" stroke-width="1.1"/><path d="M4.4 19.0H21.6" stroke="#222" stroke-width="2.2"/><path d="M2.5 21.1H21.6" stroke="#888" stroke-width="1.8"/><path d="M9.2 23.5H21.6" stroke="#333" stroke-width="1.8"/><path d="M4.4 26.3H21.6" stroke="#000" stroke-width="1.8"/><path d="M2.5 29.1H21.6" stroke="#888" stroke-width="1.8"/><path d="M4.4 31.2H21.6" stroke="#888" stroke-width="1.8"/><path d="M27.8 3.0H39.9" stroke="#888" stroke-width="1.8"/><path d="M27.8 5.4H39.9" stroke="#888" stroke-width="1.8"/><path d="M32.0 8.2H39.9" stroke="#000" stroke-width="2.2"/><path d="M34.5 12.7H46.9" stroke="#333" stroke-width="1.1"/><path d="M34.5 14.8H46.9" stroke="#000" stroke-width="1.1"/><path d="M27.8 17.2H46.9" stroke="#888" stroke-width="1.1"/><path d="M31.6 19.6H46.9" stroke="#000" stroke-width="1.8"/><path d="M27.8 21.7H46.9" stroke="#333" stroke-width="1.4"/><path d="M27.8 24.5H46.9" stroke="#222" stroke-width="1.1"/><path d="M27.8 26.9H46.9" stroke="#000" stroke-width="2.2"/><path d="M27.8 29.0H46.9" stroke="#000" stroke-width="1.8"/></svg><div class="t" style="left:2329.55px;top:654.5px;font-size:8.5px;color:#000;">A</div><div class="t" style="left:2371.45px;top:654.5px;font-size:8.5px;color:#000;">A</div><div class="t" style="left:2320px;top:696.5px;width:62px;text-align:center;font-size:11px;color:#ececec;letter-spacing:-.35px">99-98</div>
<div class="a" style="left:2353px;top:711.5px;width:1px;height:46px;background:#9a9a9a"></div><div class="a" style="left:2328.75px;top:717.5px;width:24.6px;height:35px;background:#fff"></div><div class="a" style="left:2353.95px;top:717.5px;width:24.6px;height:35px;background:#fff"></div><svg style="left:2328.75px;top:717.5px" width="50.2" height="35" viewBox="0 0 50.2 35"><path d="M11.2 3.0H21.6" stroke="#000" stroke-width="1.1"/><path d="M14.1 5.8H21.6" stroke="#222" stroke-width="1.8"/><path d="M15.8 8.6H21.6" stroke="#222" stroke-width="1.1"/><path d="M2.5 11.4H21.6" stroke="#000" stroke-width="1.1"/><path d="M2.5 14.2H21.6" stroke="#444" stroke-width="2.2"/><path d="M2.5 16.3H21.6" stroke="#000" stroke-width="1.8"/><path d="M6.3 18.4H21.6" stroke="#888" stroke-width="1.8"/><path d="M6.3 20.8H21.6" stroke="#333" stroke-width="1.1"/><path d="M12.1 23.2H21.6" stroke="#000" stroke-width="2.2"/><path d="M2.5 26.0H21.6" stroke="#000" stroke-width="1.8"/><path d="M2.5 28.8H21.6" stroke="#000" stroke-width="1.1"/><path d="M4.4 31.2H21.6" stroke="#333" stroke-width="1.8"/><path d="M30.2 3.0H39.9" stroke="#888" stroke-width="1.8"/><path d="M33.9 5.4H39.9" stroke="#444" stroke-width="1.4"/><path d="M27.8 7.5H39.9" stroke="#222" stroke-width="2.2"/><path d="M27.8 9.9H46.9" stroke="#222" stroke-width="2.2"/><path d="M34.5 14.4H46.9" stroke="#222" stroke-width="1.1"/><path d="M28.8 16.5H46.9" stroke="#888" stroke-width="1.1"/><path d="M31.6 18.9H46.9" stroke="#333" stroke-width="1.1"/><path d="M27.8 21.3H46.9" stroke="#444" stroke-width="1.1"/><path d="M37.4 23.7H46.9" stroke="#222" stroke-width="1.8"/><path d="M27.8 25.8H46.9" stroke="#444" stroke-width="1.4"/><path d="M27.8 27.9H46.9" stroke="#333" stroke-width="2.2"/><path d="M34.5 30.3H46.9" stroke="#888" stroke-width="1.4"/></svg><div class="t" style="left:2329.55px;top:718.5px;font-size:8.5px;color:#000;">A</div><div class="t" style="left:2371.45px;top:718.5px;font-size:8.5px;color:#000;">A</div><div class="t" style="left:2320px;top:760.5px;width:62px;text-align:center;font-size:11px;color:#ececec;letter-spacing:-.35px">101-100</div>
<div class="a" style="left:2353px;top:775.5px;width:1px;height:46px;background:#9a9a9a"></div><div class="a" style="left:2328.75px;top:781.5px;width:24.6px;height:35px;background:#fff"></div><div class="a" style="left:2353.95px;top:781.5px;width:24.6px;height:35px;background:#fff"></div><svg style="left:2328.75px;top:781.5px" width="50.2" height="35" viewBox="0 0 50.2 35"><path d="M10.0 3.0H21.6" stroke="#222" stroke-width="1.4"/><path d="M10.0 5.1H21.6" stroke="#333" stroke-width="1.4"/><path d="M10.0 7.9H21.6" stroke="#666" stroke-width="2.2"/><path d="M2.5 12.8H21.6" stroke="#000" stroke-width="2.2"/><path d="M12.1 15.2H21.6" stroke="#000" stroke-width="1.1"/><path d="M2.5 17.6H21.6" stroke="#444" stroke-width="1.8"/><path d="M6.3 19.7H21.6" stroke="#222" stroke-width="1.1"/><path d="M2.5 22.1H21.6" stroke="#000" stroke-width="1.8"/><path d="M2.5 24.2H21.6" stroke="#333" stroke-width="2.2"/><path d="M4.4 26.6H21.6" stroke="#000" stroke-width="1.4"/><path d="M2.5 29.4H21.6" stroke="#444" stroke-width="1.4"/><path d="M27.8 3.0H39.9" stroke="#888" stroke-width="2.2"/><path d="M28.4 7.5H39.9" stroke="#000" stroke-width="1.1"/><path d="M28.8 9.6H46.9" stroke="#222" stroke-width="2.2"/><path d="M37.4 12.0H46.9" stroke="#333" stroke-width="1.8"/><path d="M27.8 14.4H46.9" stroke="#444" stroke-width="2.2"/><path d="M27.8 16.5H46.9" stroke="#333" stroke-width="1.1"/><path d="M37.4 18.9H46.9" stroke="#333" stroke-width="2.2"/><path d="M31.6 21.0H46.9" stroke="#333" stroke-width="2.2"/><path d="M34.5 23.4H46.9" stroke="#333" stroke-width="2.2"/><path d="M31.6 25.5H46.9" stroke="#222" stroke-width="1.8"/><path d="M27.8 27.9H46.9" stroke="#444" stroke-width="1.1"/><path d="M34.5 30.7H46.9" stroke="#000" stroke-width="2.2"/></svg><div class="t" style="left:2329.55px;top:782.5px;font-size:8.5px;color:#000;">A</div><div class="t" style="left:2371.45px;top:782.5px;font-size:8.5px;color:#000;">A</div><div class="t" style="left:2320px;top:824.5px;width:62px;text-align:center;font-size:11px;color:#ececec;letter-spacing:-.35px">103-102</div>
<div class="a" style="left:2353px;top:839.5px;width:1px;height:46px;background:#9a9a9a"></div><div class="a" style="left:2328.75px;top:845.5px;width:24.6px;height:35px;background:#fff"></div><div class="a" style="left:2353.95px;top:845.5px;width:24.6px;height:35px;background:#fff"></div><svg style="left:2328.75px;top:845.5px" width="50.2" height="35" viewBox="0 0 50.2 35"><path d="M10.0 3.0H21.6" stroke="#333" stroke-width="1.4"/><path d="M10.0 5.4H21.6" stroke="#000" stroke-width="1.8"/><path d="M10.0 7.8H21.6" stroke="#888" stroke-width="1.1"/><path d="M3.5 10.6H21.6" stroke="#333" stroke-width="1.8"/><path d="M12.1 12.7H21.6" stroke="#333" stroke-width="1.1"/><path d="M6.3 15.5H21.6" stroke="#444" stroke-width="2.2"/><path d="M12.1 17.6H21.6" stroke="#000" stroke-width="1.1"/><path d="M2.5 20.0H21.6" stroke="#888" stroke-width="1.1"/><path d="M3.5 22.1H21.6" stroke="#333" stroke-width="2.2"/><path d="M12.1 24.9H21.6" stroke="#666" stroke-width="2.2"/><path d="M12.1 27.0H21.6" stroke="#222" stroke-width="1.8"/><path d="M33.9 3.0H39.9" stroke="#666" stroke-width="1.1"/><path d="M30.2 5.1H39.9" stroke="#333" stroke-width="1.1"/><path d="M28.4 7.2H39.9" stroke="#000" stroke-width="1.4"/><path d="M27.8 9.3H39.9" stroke="#222" stroke-width="1.8"/><path d="M37.4 11.4H46.9" stroke="#444" stroke-width="1.8"/><path d="M37.4 13.8H46.9" stroke="#000" stroke-width="2.2"/><path d="M31.6 16.2H46.9" stroke="#333" stroke-width="1.1"/><path d="M27.8 18.6H46.9" stroke="#888" stroke-width="1.4"/><path d="M29.7 20.7H46.9" stroke="#000" stroke-width="1.1"/><path d="M27.8 23.1H46.9" stroke="#888" stroke-width="1.1"/><path d="M27.8 25.2H46.9" stroke="#222" stroke-width="1.8"/><path d="M27.8 28.0H46.9" stroke="#000" stroke-width="2.2"/><path d="M27.8 30.8H46.9" stroke="#222" stroke-width="1.8"/></svg><div class="t" style="left:2329.55px;top:846.5px;font-size:8.5px;color:#000;">A</div><div class="t" style="left:2371.45px;top:846.5px;font-size:8.5px;color:#000;">A</div><div class="t" style="left:2320px;top:888.5px;width:62px;text-align:center;font-size:11px;color:#ececec;letter-spacing:-.35px">105-104</div>
<div class="a" style="left:2353px;top:903.5px;width:1px;height:46px;background:#9a9a9a"></div><div class="a" style="left:2328.75px;top:909.5px;width:24.6px;height:35px;background:#fff"></div><div class="a" style="left:2353.95px;top:909.5px;width:24.6px;height:35px;background:#fff"></div><svg style="left:2328.75px;top:909.5px" width="50.2" height="35" viewBox="0 0 50.2 35"><path d="M10.6 3.0H21.6" stroke="#666" stroke-width="1.4"/><path d="M10.0 5.8H21.6" stroke="#000" stroke-width="2.2"/><path d="M10.0 8.6H21.6" stroke="#222" stroke-width="2.2"/><path d="M3.5 11.4H21.6" stroke="#000" stroke-width="1.1"/><path d="M3.5 13.5H21.6" stroke="#333" stroke-width="2.2"/><path d="M2.5 15.9H21.6" stroke="#000" stroke-width="1.1"/><path d="M2.5 18.3H21.6" stroke="#000" stroke-width="1.1"/><path d="M6.3 20.4H21.6" stroke="#333" stroke-width="1.8"/><path d="M3.5 23.2H21.6" stroke="#444" stroke-width="1.1"/><path d="M2.5 30.5H21.6" stroke="#000" stroke-width="1.1"/><path d="M27.8 3.0H39.9" stroke="#666" stroke-width="1.1"/><path d="M27.8 5.1H39.9" stroke="#000" stroke-width="1.8"/><path d="M32.0 7.5H39.9" stroke="#888" stroke-width="2.2"/><path d="M27.8 9.6H46.9" stroke="#333" stroke-width="1.4"/><path d="M34.5 19.7H46.9" stroke="#888" stroke-width="1.8"/><path d="M27.8 22.1H46.9" stroke="#222" stroke-width="1.1"/><path d="M27.8 24.9H46.9" stroke="#000" stroke-width="2.2"/><path d="M27.8 27.7H46.9" stroke="#333" stroke-width="1.1"/><path d="M34.5 30.1H46.9" stroke="#000" stroke-width="1.4"/></svg><div class="t" style="left:2329.55px;top:910.5px;font-size:8.5px;color:#000;">A</div><div class="t" style="left:2371.45px;top:910.5px;font-size:8.5px;color:#000;">A</div><div class="t" style="left:2320px;top:952.5px;width:62px;text-align:center;font-size:11px;color:#ececec;letter-spacing:-.35px">107-106</div>
<div class="a" style="left:2353px;top:967.5px;width:1px;height:46px;background:#9a9a9a"></div><div class="a" style="left:2328.75px;top:973.5px;width:24.6px;height:35px;background:#fff"></div><div class="a" style="left:2353.95px;top:973.5px;width:24.6px;height:35px;background:#fff"></div><svg style="left:2328.75px;top:973.5px" width="50.2" height="35" viewBox="0 0 50.2 35"><path d="M11.2 3.0H21.6" stroke="#222" stroke-width="1.8"/><path d="M12.3 5.1H21.6" stroke="#444" stroke-width="1.8"/><path d="M10.6 7.5H21.6" stroke="#333" stroke-width="2.2"/><path d="M2.5 9.6H21.6" stroke="#333" stroke-width="2.2"/><path d="M12.1 12.0H21.6" stroke="#000" stroke-width="1.8"/><path d="M2.5 14.8H21.6" stroke="#888" stroke-width="1.8"/><path d="M2.5 17.6H21.6" stroke="#666" stroke-width="1.1"/><path d="M2.5 22.1H21.6" stroke="#666" stroke-width="1.4"/><path d="M2.5 24.9H21.6" stroke="#000" stroke-width="1.4"/><path d="M2.5 27.0H21.6" stroke="#888" stroke-width="1.8"/><path d="M4.4 29.8H21.6" stroke="#333" stroke-width="2.2"/><path d="M30.2 3.0H39.9" stroke="#333" stroke-width="1.4"/><path d="M30.2 5.4H39.9" stroke="#888" stroke-width="1.1"/><path d="M33.9 7.5H39.9" stroke="#444" stroke-width="1.1"/><path d="M34.5 9.9H46.9" stroke="#000" stroke-width="1.8"/><path d="M27.8 12.0H46.9" stroke="#666" stroke-width="1.8"/><path d="M27.8 14.4H46.9" stroke="#444" stroke-width="1.1"/><path d="M27.8 18.9H46.9" stroke="#888" stroke-width="1.1"/><path d="M28.8 21.0H46.9" stroke="#000" stroke-width="1.8"/><path d="M34.5 25.9H46.9" stroke="#000" stroke-width="2.2"/><path d="M31.6 28.0H46.9" stroke="#888" stroke-width="1.1"/><path d="M28.8 30.1H46.9" stroke="#333" stroke-width="1.8"/></svg><div class="t" style="left:2329.55px;top:974.5px;font-size:8.5px;color:#000;">A</div><div class="t" style="left:2371.45px;top:974.5px;font-size:8.5px;color:#000;">A</div><div class="t" style="left:2320px;top:1016.5px;width:62px;text-align:center;font-size:11px;color:#ececec;letter-spacing:-.35px">109-108</div>
<div class="a" style="left:2353px;top:1031.5px;width:1px;height:46px;background:#9a9a9a"></div><div class="a" style="left:2328.75px;top:1037.5px;width:24.6px;height:35px;background:#fff"></div><div class="a" style="left:2353.95px;top:1037.5px;width:24.6px;height:35px;background:#fff"></div><svg style="left:2328.75px;top:1037.5px" width="50.2" height="35" viewBox="0 0 50.2 35"><path d="M10.0 3.0H21.6" stroke="#222" stroke-width="1.4"/><path d="M14.1 5.1H21.6" stroke="#222" stroke-width="1.4"/><path d="M10.0 7.2H21.6" stroke="#222" stroke-width="1.4"/><path d="M10.0 9.3H21.6" stroke="#666" stroke-width="1.1"/><path d="M2.5 11.7H21.6" stroke="#888" stroke-width="1.4"/><path d="M4.4 14.5H21.6" stroke="#000" stroke-width="1.4"/><path d="M2.5 16.9H21.6" stroke="#000" stroke-width="1.8"/><path d="M4.4 19.7H21.6" stroke="#888" stroke-width="1.1"/><path d="M2.5 24.2H21.6" stroke="#333" stroke-width="2.2"/><path d="M9.2 26.6H21.6" stroke="#333" stroke-width="1.8"/><path d="M28.4 3.0H39.9" stroke="#444" stroke-width="1.4"/><path d="M32.0 5.8H39.9" stroke="#222" stroke-width="1.1"/><path d="M30.2 7.9H39.9" stroke="#000" stroke-width="1.8"/><path d="M34.5 10.7H46.9" stroke="#666" stroke-width="1.1"/><path d="M28.8 12.8H46.9" stroke="#888" stroke-width="2.2"/><path d="M34.5 15.2H46.9" stroke="#666" stroke-width="1.4"/><path d="M28.8 17.6H46.9" stroke="#000" stroke-width="1.1"/><path d="M29.7 20.0H46.9" stroke="#222" stroke-width="2.2"/><path d="M27.8 22.8H46.9" stroke="#444" stroke-width="2.2"/><path d="M28.8 25.6H46.9" stroke="#222" stroke-width="2.2"/><path d="M27.8 28.4H46.9" stroke="#000" stroke-width="1.1"/><path d="M37.4 31.2H46.9" stroke="#222" stroke-width="1.1"/></svg><div class="t" style="left:2329.55px;top:1038.5px;font-size:8.5px;color:#000;">A</div><div class="t" style="left:2371.45px;top:1038.5px;font-size:8.5px;color:#000;">A</div><div class="t" style="left:2320px;top:1080.5px;width:62px;text-align:center;font-size:11px;color:#ececec;letter-spacing:-.35px">111-110</div>
<div class="a" style="left:2353px;top:1095.5px;width:1px;height:46px;background:#9a9a9a"></div><div class="a" style="left:2328.75px;top:1101.5px;width:24.6px;height:35px;background:#fff"></div><div class="a" style="left:2353.95px;top:1101.5px;width:24.6px;height:35px;background:#fff"></div><svg style="left:2328.75px;top:1101.5px" width="50.2" height="35" viewBox="0 0 50.2 35"><path d="M12.3 3.0H21.6" stroke="#000" stroke-width="1.8"/><path d="M10.0 8.2H21.6" stroke="#333" stroke-width="1.1"/><path d="M6.3 10.6H21.6" stroke="#666" stroke-width="1.1"/><path d="M3.5 15.8H21.6" stroke="#222" stroke-width="2.2"/><path d="M9.2 17.9H21.6" stroke="#888" stroke-width="1.4"/><path d="M4.4 20.7H21.6" stroke="#333" stroke-width="1.4"/><path d="M4.4 25.5H21.6" stroke="#888" stroke-width="1.8"/><path d="M9.2 28.3H21.6" stroke="#000" stroke-width="1.1"/><path d="M30.2 3.0H39.9" stroke="#888" stroke-width="1.1"/><path d="M32.0 5.4H39.9" stroke="#444" stroke-width="2.2"/><path d="M30.2 8.2H39.9" stroke="#000" stroke-width="1.4"/><path d="M27.8 10.6H46.9" stroke="#666" stroke-width="2.2"/><path d="M27.8 13.4H46.9" stroke="#000" stroke-width="1.8"/><path d="M29.7 15.5H46.9" stroke="#000" stroke-width="1.1"/><path d="M27.8 18.3H46.9" stroke="#888" stroke-width="1.1"/><path d="M37.4 20.4H46.9" stroke="#222" stroke-width="1.8"/><path d="M28.8 22.5H46.9" stroke="#666" stroke-width="1.8"/><path d="M27.8 24.6H46.9" stroke="#333" stroke-width="1.4"/><path d="M34.5 26.7H46.9" stroke="#222" stroke-width="1.4"/><path d="M28.8 28.8H46.9" stroke="#222" stroke-width="1.8"/><path d="M29.7 30.9H46.9" stroke="#222" stroke-width="1.8"/></svg><div class="t" style="left:2329.55px;top:1102.5px;font-size:8.5px;color:#000;font-weight:bold;">A</div><div class="t" style="left:2371.45px;top:1102.5px;font-size:8.5px;color:#000;font-weight:bold;">A</div><div class="a" style="left:2339.75px;top:1101.5px;width:28.2px;height:8px;background:rgba(70,150,240,.55)"></div><div class="a" style="left:2328.75px;top:1109.5px;width:49.8px;height:27px;background:rgba(70,150,240,.55)"></div><div class="a" style="left:2325.500px;top:1142px;width:51.500px;height:13.500px;background:#3390f0"></div><div class="t b" style="left:2325.500px;top:1143.5px;width:51.500px;text-align:center;font-size:11px;color:#fff;letter-spacing:.1px">113-112</div>
</div></div>
<div class="a" style="left:2493.500px;top:342px;width:13px;height:814px;background:#4e4e4e"></div>
<div class="a" style="left:2495.500px;top:520px;width:9px;height:45px;background:#6a6a6a;border-radius:4.500px"></div>
<svg style="left:2495.5px;top:347.5px" width="9" height="5" viewBox="0 0 9 5"><path d="M.6 4.400L4.500 .8l3.900 3.600" fill="none" stroke="#7e7e7e" stroke-width="1.100"/></svg>
<svg style="left:2495.5px;top:1148px" width="9" height="5" viewBox="0 0 9 5"><path d="M.6 .6L4.500 4.200 8.400 .6" fill="none" stroke="#7e7e7e" stroke-width="1.100"/></svg>
<div class="a" style="left:2312px;top:1156px;width:195px;height:1px;background:#484848"></div>
<div class="t" style="left:2317px;top:1165.81px;font-size:9.37px;color:#e6e6e6;transform:scaleX(1.03);transform-origin:0 0;">427 Pages in 214...</div>
<svg style="left:2412px;top:1164px" width="18" height="13" viewBox="0 0 18 13"><path d="M.6 5h6.500v7H.6zM5 5V.6h5l2.500 2.500V12H7" fill="none" stroke="#c6c6c6" stroke-width="1.100"/><path d="M14.500 10h3.500l-1.750 2.200z" fill="#c6c6c6"/></svg>
<svg style="left:2444px;top:1164.5px" width="11" height="11" viewBox="0 0 11 11"><rect x=".6" y=".6" width="9.800" height="9.800" fill="none" stroke="#d0d0d0" stroke-width="1.200"/><path d="M5.500 3v5M3 5.500h5" stroke="#d0d0d0" stroke-width="1.200"/></svg>
<svg style="left:2471.5px;top:1164px" width="10" height="12" viewBox="0 0 10 12"><path d="M0 2.500h10M3.500 2.500V.8h3v1.700M1.200 2.500l.6 9h6.400l.6-9M3.700 4.500v5.500M5 4.500v5.500M6.300 4.500v5.500" fill="none" stroke="#c6c6c6" stroke-width="1"/></svg>
<div class="a" style="left:2312px;top:1181.500px;width:195px;height:1.500px;background:#3a3a3a"></div>
<div class="a" style="left:2312px;top:1183px;width:195px;height:6.500px;background:#4a4a4a"></div>
<div class="a" style="left:2398.5px;top:1184.5px;width:20px;height:4px;background:repeating-linear-gradient(90deg,#2e2e2e 0 1px,transparent 1px 2px)"></div>
<div class="a" style="left:2507px;top:106px;width:39px;height:1287px;background:#535353;border-left:1px solid #3a3a3a;border-right:1px solid #3d3d3d"></div>
<div class="a" style="left:2507px;top:106px;width:39px;height:13px;background:#424242"></div>
<svg style="left:2531.5px;top:108px" width="8" height="6" viewBox="0 0 8 6"><path d="M3.200 0L0 2.700l3.200 2.700zM7.400 0L4.200 2.700l3.200 2.700z" fill="#d8d8d8"/></svg>
<div class="a" style="left:2516.5px;top:121px;width:20px;height:4px;background:repeating-linear-gradient(90deg,#3c3c3c 0 1px,transparent 1px 2px)"></div>
<div class="a" style="left:2513px;top:128.500px;width:27px;height:23px;background:#2e2e2e;border-radius:3px"></div>
<svg style="left:2517.5px;top:131px" width="18" height="19" viewBox="0 0 18 19"><path d="M.5 7L4.500 3h3.700v12.500H.5zM17.500 7L13.500 3H9.800v12.500h7.700z" fill="#d6d6d6"/><path d="M9 0v19" stroke="#d6d6d6" stroke-width="1"/></svg>
<svg style="left:2518.5px;top:160px" width="17" height="18" viewBox="0 0 17 18"><path d="M8.500 0L17 5.500 8.500 11 0 5.500z" fill="#c6c6c6"/><path d="M0 10.500l2.800-1.800L8.500 12.500l5.700-3.800L17 10.500 8.500 16.500z" fill="#c6c6c6"/></svg>
<svg style="left:2519.5px;top:188px" width="16" height="18" viewBox="0 0 16 18"><path d="M.7 0v18" stroke="#c6c6c6" stroke-width="1.400"/><rect x="3" y="3" width="7" height="5" fill="#c6c6c6"/><rect x="3" y="10.500" width="12.500" height="5" fill="#c6c6c6"/></svg>
<svg style="left:2520px;top:217px" width="15" height="15" viewBox="0 0 15 15"><rect x=".7" y=".7" width="7.500" height="7.500" fill="#c6c6c6"/><rect x="4.500" y="4.500" width="7" height="7" fill="#535353" stroke="#c6c6c6" stroke-width="1.300"/><rect x="8" y="8" width="6.500" height="6.500" fill="#c6c6c6"/></svg>
<svg style="left:2517px;top:247.5px" width="20" height="10" viewBox="0 0 20 10"><rect x="1" y="1" width="11" height="8" rx="4" fill="none" stroke="#c6c6c6" stroke-width="1.800"/><rect x="8" y="1" width="11" height="8" rx="4" fill="none" stroke="#c6c6c6" stroke-width="1.800"/></svg>
<div class="a" style="left:2508px;top:269px;width:38px;height:1px;background:#3b3b3b"></div>
<div class="a" style="left:2516.5px;top:274px;width:20px;height:4px;background:repeating-linear-gradient(90deg,#3c3c3c 0 1px,transparent 1px 2px)"></div>
<svg style="left:2518px;top:287px" width="17" height="12" viewBox="0 0 17 12"><path d="M0 1h17M0 6h17M0 11h17" stroke="#d0d0d0" stroke-width="2"/></svg>
<div class="a" style="left:2508px;top:310px;width:38px;height:1px;background:#3b3b3b"></div>
<div class="a" style="left:2516.5px;top:315px;width:20px;height:4px;background:repeating-linear-gradient(90deg,#3c3c3c 0 1px,transparent 1px 2px)"></div>
<svg style="left:2518.5px;top:326.5px" width="18" height="18" viewBox="0 0 18 18"><path d="M5 11V2.500A1.500 1.500 0 0 1 6.500 1h9A1.500 1.500 0 0 1 17 2.500v9a1.500 1.500 0 0 1-1.500 1.500H9" fill="none" stroke="#c6c6c6" stroke-width="1.400" stroke-dasharray="5 2"/><rect x=".7" y="9.500" width="5" height="5" fill="#535353" stroke="#c6c6c6" stroke-width="1.200"/><rect x="3.500" y="12" width="5" height="5" fill="#535353" stroke="#c6c6c6" stroke-width="1.200"/></svg>
<div class="a" style="left:2508px;top:351px;width:38px;height:1px;background:#3b3b3b"></div></body></html>
